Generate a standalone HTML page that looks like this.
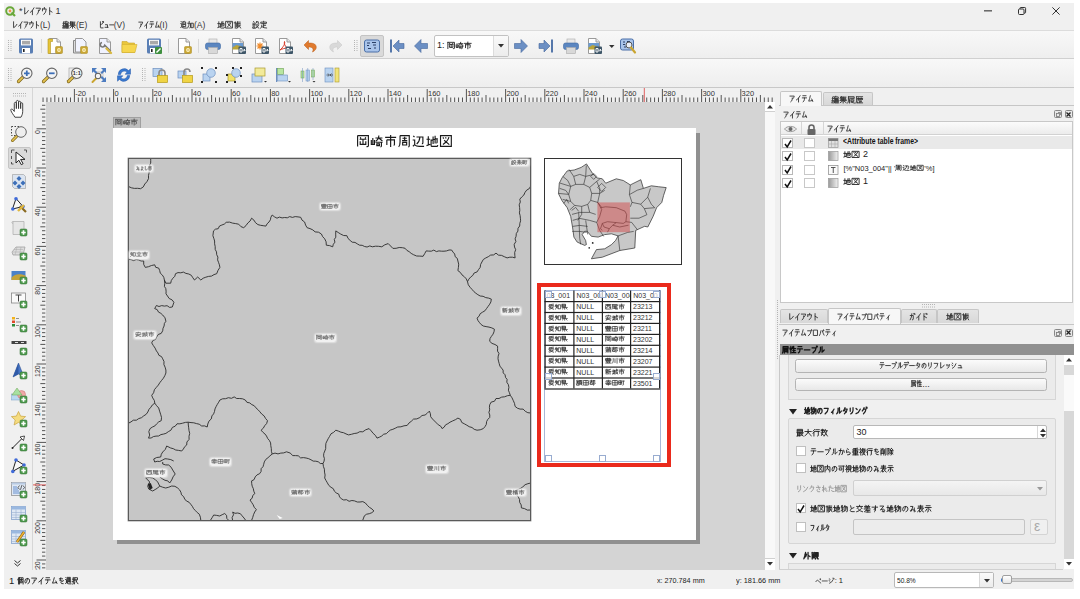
<!DOCTYPE html><html><head><meta charset="utf-8"><style>
*{box-sizing:border-box}
html,body{margin:0;padding:0}
body{width:1080px;height:599px;overflow:hidden;position:relative;background:#fff;font-family:"Liberation Sans",sans-serif;color:#222}
div{position:absolute}
.t{white-space:nowrap}
.j{letter-spacing:.25em;line-height:0;-webkit-text-stroke:.12px currentColor}
[style*=bold] .j{-webkit-text-stroke:.25px currentColor}
.sm .j{-webkit-text-stroke:0}
.t[style*=text-stroke] .j{-webkit-text-stroke:inherit}
.jw{display:inline-block;white-space:nowrap;line-height:0}
.jw .j{display:inline-block;letter-spacing:0;transform-origin:0 0}
svg{position:absolute;overflow:visible}
svg.g{position:static;display:inline-block}
svg.g path{vector-effect:non-scaling-stroke}
</style></head><body><div style="left:4px;top:3px;width:1070px;height:586px;background:#f0f0f0"></div>
<div style="left:4px;top:30px;width:1070px;height:1px;background:#dcdcdc"></div>
<div style="left:4px;top:31px;width:1070px;height:28px;background:linear-gradient(#f8f8f8,#eeeeee)"></div>
<div style="left:4px;top:58px;width:1070px;height:1px;background:#d0d0d0"></div>
<div style="left:4px;top:59px;width:1070px;height:28px;background:linear-gradient(#f8f8f8,#eeeeee)"></div>
<div style="left:4px;top:86.5px;width:1070px;height:1.5px;background:#c8c8c8"></div>
<div style="left:32px;top:88px;width:1px;height:482px;background:#d6d6d6"></div>
<svg style="left:5px;top:5.5px" width="11" height="11" viewBox="0 0 11 11"><circle cx="5" cy="5" r="3.8" fill="none" stroke="#6aa83a" stroke-width="2"/><path d="M6.5 6.5l3.5 3.5" stroke="#6aa83a" stroke-width="2.2"/><circle cx="5" cy="5" r="1.4" fill="#f0944a"/></svg>
<div class="t" style="left:19px;top:6.2px;font-size:9px;line-height:10.8px;color:#333;">*<svg class="g" width="30.50" height="7.87" viewBox="0 0 50 10" preserveAspectRatio="none" style="vertical-align:-0.45px;stroke-width:0.90px"><g fill="none" stroke="currentColor" stroke-linecap="round" stroke-linejoin="round"><g transform="translate(0.60 0) scale(.88 1)"><path d="M2.5 1V9Q6 8.5 9.3 4.5"/></g><g transform="translate(10.60 0) scale(.88 1)"><path d="M8.5 1Q6 5 1.5 7M5.5 4.5V9.8"/></g><g transform="translate(20.60 0) scale(.88 1)"><path d="M1 1.5H9Q8.5 4 6 5.5M5.3 4V6Q5 8.5 2.5 9.5"/></g><g transform="translate(30.60 0) scale(.88 1)"><path d="M5 0.5V2.5M1.5 2.5V5M1.5 2.5H8.5Q8.5 7 4 9.5"/></g><g transform="translate(40.60 0) scale(.88 1)"><path d="M3.5 0.8V9.8M3.5 4.5L8 6.5"/></g></g></svg> 1</div>
<div class="t" style="left:12px;top:19.9px;font-size:8.5px;line-height:10.2px;color:#333;"><svg class="g" width="28.00" height="7.43" viewBox="0 0 50 10" preserveAspectRatio="none" style="vertical-align:-0.43px;stroke-width:0.90px"><g fill="none" stroke="currentColor" stroke-linecap="round" stroke-linejoin="round"><g transform="translate(0.60 0) scale(.88 1)"><path d="M2.5 1V9Q6 8.5 9.3 4.5"/></g><g transform="translate(10.60 0) scale(.88 1)"><path d="M8.5 1Q6 5 1.5 7M5.5 4.5V9.8"/></g><g transform="translate(20.60 0) scale(.88 1)"><path d="M1 1.5H9Q8.5 4 6 5.5M5.3 4V6Q5 8.5 2.5 9.5"/></g><g transform="translate(30.60 0) scale(.88 1)"><path d="M5 0.5V2.5M1.5 2.5V5M1.5 2.5H8.5Q8.5 7 4 9.5"/></g><g transform="translate(40.60 0) scale(.88 1)"><path d="M3.5 0.8V9.8M3.5 4.5L8 6.5"/></g></g></svg>(L)</div>
<div class="t" style="left:62px;top:19.9px;font-size:8.5px;line-height:10.2px;color:#333;"><svg class="g" width="14.00" height="7.43" viewBox="0 0 20 10" preserveAspectRatio="none" style="vertical-align:-0.43px;stroke-width:0.90px"><g fill="none" stroke="currentColor" stroke-linecap="round" stroke-linejoin="round"><g transform="translate(0.60 0) scale(.88 1)"><path d="M2.5 0.5L0.8 3.5L3.5 3M2.5 3.5L0.5 6.5H4M2 6.5V9.8M0.8 8L0.5 9.5M3.5 7.5L4 9M6 0.3V1M4.5 1.3H9.5V3.5H4.5M4.5 1.3V6Q4.5 8.5 3.8 9.8M5.5 4.5H9.5V9.8M5.5 4.5V9.8M5.5 6.8H9.5M6.8 4.5V9.8M8.2 4.5V9.8"/></g><g transform="translate(10.60 0) scale(.88 1)"><path d="M2.5 0.5L0.8 3M2 1.5V5M2 1.5H9M5 1.5V5M2 2.7H8.5M2 3.8H8.5M2 5H9M0.5 6.3H9.5M5 5V9.8M4.5 6.5L0.8 9.3M5.5 6.5L9.2 9.3"/></g></g></svg>(E)</div>
<div class="t" style="left:98.5px;top:19.9px;font-size:8.5px;line-height:10.2px;color:#333;"><svg class="g" width="15.20" height="7.43" viewBox="0 0 30 10" preserveAspectRatio="none" style="vertical-align:-0.43px;stroke-width:0.90px"><g fill="none" stroke="currentColor" stroke-linecap="round" stroke-linejoin="round"><g transform="translate(0.60 0) scale(.88 1)"><path d="M2.5 1V8.5Q2.5 9.3 3.5 9.3H8.5M2.5 5Q5 4.5 7.5 3.5M7.5 0.5L8 2M9 0.5L9.5 2"/></g><g transform="translate(10.60 0) scale(.88 1)"><path d="M2.5 5H7V8.5M1.5 8.5H8.5"/></g><g transform="translate(20.60 0) scale(.88 1)"><path d="M0.5 5.2H9.5"/></g></g></svg>(V)</div>
<div class="t" style="left:137.5px;top:19.9px;font-size:8.5px;line-height:10.2px;color:#333;"><svg class="g" width="22.00" height="7.43" viewBox="0 0 40 10" preserveAspectRatio="none" style="vertical-align:-0.43px;stroke-width:0.90px"><g fill="none" stroke="currentColor" stroke-linecap="round" stroke-linejoin="round"><g transform="translate(0.60 0) scale(.88 1)"><path d="M1 1.5H9Q8.5 4 6 5.5M5.3 4V6Q5 8.5 2.5 9.5"/></g><g transform="translate(10.60 0) scale(.88 1)"><path d="M8.5 1Q6 5 1.5 7M5.5 4.5V9.8"/></g><g transform="translate(20.60 0) scale(.88 1)"><path d="M2 1H8M1 4H9M5 4V6Q5 8.5 2.5 9.5"/></g><g transform="translate(30.60 0) scale(.88 1)"><path d="M4.5 1Q3.5 5 1.5 8.5Q5 8.3 8.5 7.5M7 5.5L9 9"/></g></g></svg>(I)</div>
<div class="t" style="left:180px;top:19.9px;font-size:8.5px;line-height:10.2px;color:#333;"><svg class="g" width="14.00" height="7.43" viewBox="0 0 20 10" preserveAspectRatio="none" style="vertical-align:-0.43px;stroke-width:0.90px"><g fill="none" stroke="currentColor" stroke-linecap="round" stroke-linejoin="round"><g transform="translate(0.60 0) scale(.88 1)"><path d="M1 0.5L1.8 1.5M0.5 3.5H2V7.5L0.5 9M2 8Q3.5 9.5 6 9.5H9.8M6 0.3L5.5 1M4 1.3H8.5V4.3H4M4 1.3V8M4 4.3H8.5V7.5H4"/></g><g transform="translate(10.60 0) scale(.88 1)"><path d="M0.5 3H5V8Q5 9.5 4 9.5M3 0.5Q3 7 0.5 9.5M6.5 3H9.5V9H6.5Z"/></g></g></svg>(A)</div>
<div class="t" style="left:216.5px;top:19.9px;font-size:8.5px;line-height:10.2px;color:#333;"><svg class="g" width="24.50" height="7.43" viewBox="0 0 30 10" preserveAspectRatio="none" style="vertical-align:-0.43px;stroke-width:0.90px"><g fill="none" stroke="currentColor" stroke-linecap="round" stroke-linejoin="round"><g transform="translate(0.60 0) scale(.88 1)"><path transform="scale(.8333)" d="M0.4 4.2H4M2.2 1.2V10M0.4 10.6L4.2 9.2M4.6 5.2L11 3.8V7.2Q11 8 10.2 7.8M7 1.4V9M9 0.8V8.4M5 4.6V10.4Q5 11.4 6 11.4H11Q11.6 11.4 11.6 10"/></g><g transform="translate(10.60 0) scale(.88 1)"><path transform="scale(.8333)" d="M0.6 0.6H11.4V11.4H0.6ZM3 2.4L3.8 3.6M5.6 2.2L6.2 3.4M9 2.2Q8 6.4 3 9.4M4.2 5.2L9.4 9.6"/></g><g transform="translate(20.60 0) scale(.88 1)"><path d="M2 1V9.8M0.5 2.5H3.5V8M5 1V9Q5 9.8 4 9.8M5 1.5H9M5 3.5H9M5 5.5H9.5M7 5.5L9.5 9.5M7 7L5 9.5"/></g></g></svg></div>
<div class="t" style="left:251.5px;top:19.9px;font-size:8.5px;line-height:10.2px;color:#333;"><svg class="g" width="15.50" height="7.43" viewBox="0 0 20 10" preserveAspectRatio="none" style="vertical-align:-0.43px;stroke-width:0.90px"><g fill="none" stroke="currentColor" stroke-linecap="round" stroke-linejoin="round"><g transform="translate(0.60 0) scale(.88 1)"><path d="M1.5 0.5L2.5 1.5M0.5 3H3.5M0.5 4.8H3.5M0.5 6.5H3.5M1 8H3.5V9.8H1ZM6 1Q6 3.5 4.5 4M6 1H8.5V3.5Q8.5 4.2 9.5 4M5 5.2H9Q8 8.5 4.5 9.8M5.5 6.5L9.5 9.8"/></g><g transform="translate(10.60 0) scale(.88 1)"><path d="M5 0.3V1.5M0.8 3V1.5H9.2V3M2 3.5H8M5 3.5V8.5M5 5.8H8M2.5 5.5Q2.5 8.5 0.8 9.8M3 8Q5 9.5 9.5 9.5"/></g></g></svg></div>
<svg style="left:984px;top:10px;" width="8" height="2" viewBox="0 0 8 2"><rect x="0" y=".3" width="8" height="1.1" fill="#333"/></svg>
<svg style="left:1017.8px;top:7px;" width="8" height="8" viewBox="0 0 8 8"><rect x=".5" y="2" width="5.5" height="5.5" rx="1" fill="none" stroke="#333" stroke-width="1"/><path d="M2 2V1.3a.8 .8 0 0 1 .8-.8h4a.8 .8 0 0 1 .8.8v4a.8 .8 0 0 1-.8.8H6" fill="none" stroke="#333" stroke-width="1"/></svg>
<svg style="left:1052.3px;top:7.3px;" width="8" height="8" viewBox="0 0 8 8"><path d="M.4 .4l7.2 7.2M7.6 .4l-7.2 7.2" stroke="#333" stroke-width="1"/></svg>
<svg style="left:7.5px;top:40px" width="5" height="12"><rect x="0" y="0" width="1" height="1" fill="#b4b4b4"/><rect x="2.5" y="0" width="1" height="1" fill="#b4b4b4"/><rect x="0" y="2" width="1" height="1" fill="#b4b4b4"/><rect x="2.5" y="2" width="1" height="1" fill="#b4b4b4"/><rect x="0" y="4" width="1" height="1" fill="#b4b4b4"/><rect x="2.5" y="4" width="1" height="1" fill="#b4b4b4"/><rect x="0" y="6" width="1" height="1" fill="#b4b4b4"/><rect x="2.5" y="6" width="1" height="1" fill="#b4b4b4"/><rect x="0" y="8" width="1" height="1" fill="#b4b4b4"/><rect x="2.5" y="8" width="1" height="1" fill="#b4b4b4"/><rect x="0" y="10" width="1" height="1" fill="#b4b4b4"/><rect x="2.5" y="10" width="1" height="1" fill="#b4b4b4"/></svg>
<svg style="left:18px;top:38px" width="16" height="16" viewBox="0 0 16 16"><rect x="1" y=".5" width="14" height="15" rx="1.5" fill="#5a7fb5"/><rect x="3" y="1.8" width="10" height="5.6" fill="#fff"/><rect x="4" y="2.8" width="8" height="3.6" fill="#a9a9a9"/><rect x="4" y="10" width="8" height="5.2" fill="#fff"/><rect x="5" y="11" width="1.6" height="3" fill="#222"/></svg>
<svg style="left:47px;top:38px" width="16" height="16" viewBox="0 0 16 16"><path d="M2.5 .5h7.5l3.5 3.5v11.5h-11z" fill="#fff" stroke="#9a9a9a"/><path d="M10 .5v3.5h3.5" fill="#e6e6e6" stroke="#9a9a9a"/><path d="M1 1h4.5v2.5h-2v12h-2.5z" fill="#e6c53a" stroke="#b49520" stroke-width=".6"/><rect x="8.5" y="8.5" width="7" height="7" rx="1" fill="#c9a633" stroke="#a88a20" stroke-width=".5"/><circle cx="12" cy="12" r="1.9" fill="#fff4c8"/><circle cx="12" cy="12" r=".8" fill="#c9a633"/></svg>
<svg style="left:71.5px;top:38px" width="16" height="16" viewBox="0 0 16 16"><path d="M1.5 2.5h8v12.5h-8z" fill="#ddd" stroke="#888"/><path d="M3.5 .5h7l3.5 3.5v10h-10.5z" fill="#f2f4ff" stroke="#999"/><rect x="8.5" y="8.5" width="7" height="7" rx="1" fill="#c9a633" stroke="#a88a20" stroke-width=".5"/><circle cx="12" cy="12" r="1.9" fill="#fff4c8"/><circle cx="12" cy="12" r=".8" fill="#c9a633"/></svg>
<svg style="left:96.5px;top:38px" width="16" height="16" viewBox="0 0 16 16"><path d="M2.5 .5h7.5l3.5 3.5v11.5h-11z" fill="#f0f2ff" stroke="#9a9a9a"/><path d="M10 .5v3.5h3.5" fill="#e6e6e6" stroke="#9a9a9a"/><path d="M5 4.5a2.3 2.3 0 1 0 2.8 2.8l6 6" fill="none" stroke="#777" stroke-width="1.6"/><path d="M9.5 10.5l4.5 4.5" stroke="#d8b840" stroke-width="2.4" stroke-linecap="round"/></svg>
<svg style="left:121px;top:38px" width="16" height="16" viewBox="0 0 16 16"><path d="M1 3.5h5l1.5 1.5h6v9.5h-12.5z" fill="#e9c63c" stroke="#c9a52a" stroke-width=".6"/><path d="M1 6.5h15l-2 8h-13z" fill="#f6d64e" stroke="#d2ae30" stroke-width=".6"/></svg>
<svg style="left:146px;top:38px" width="16" height="16" viewBox="0 0 16 16"><rect x="1" y=".5" width="14" height="15" rx="1.5" fill="#5a7fb5"/><rect x="3" y="1.8" width="10" height="5.6" fill="#fff"/><rect x="4" y="2.8" width="8" height="3.6" fill="#a9a9a9"/><rect x="4" y="10" width="8" height="5.2" fill="#fff"/><rect x="5" y="11" width="1.6" height="3" fill="#222"/><rect x="9" y="9" width="7" height="7" rx="1" fill="#3f8f3f"/><path d="M10.5 14.5l4-4" stroke="#fff" stroke-width="1.5"/></svg>
<svg style="left:176px;top:38px" width="16" height="16" viewBox="0 0 16 16"><path d="M2.5 .5h7.5l3.5 3.5v11.5h-11z" fill="#fff" stroke="#9a9a9a"/><path d="M10 .5v3.5h3.5" fill="#e6e6e6" stroke="#9a9a9a"/><rect x="8.5" y="8.5" width="7" height="7" rx="1" fill="#c9a633" stroke="#a88a20" stroke-width=".5"/><circle cx="12" cy="12" r="1.9" fill="#fff4c8"/><circle cx="12" cy="12" r=".8" fill="#c9a633"/></svg>
<svg style="left:205px;top:38px" width="16" height="16" viewBox="0 0 16 16"><rect x="4" y="1" width="8" height="5" fill="#e8e8e8" stroke="#aaa" stroke-width=".6"/><rect x=".5" y="5" width="15" height="6.5" rx="2" fill="#5b86c0" stroke="#3f6aa3" stroke-width=".6"/><rect x="3.5" y="9.5" width="9" height="6" fill="#d8d8d8" stroke="#aaa" stroke-width=".6"/></svg>
<svg style="left:229.5px;top:38px" width="16" height="16" viewBox="0 0 16 16"><path d="M2.5 .5h7.5l3.5 3.5v11.5h-11z" fill="#fff" stroke="#9a9a9a"/><path d="M10 .5v3.5h3.5" fill="#e6e6e6" stroke="#9a9a9a"/><rect x="2.5" y="5" width="10.5" height="6" fill="#6a9ad0"/><path d="M2.5 9.5l4-2.5 5 1.5 1.5 3H2.5z" fill="#b9a43a"/><rect x="8.5" y="8.5" width="7.5" height="7.5" rx="1" fill="#3e5668"/><path d="M10 10.5h2v3.5h-2z" fill="none" stroke="#fff" stroke-width=".9"/><path d="M12.5 12.2h2.5M14 11l1.2 1.2L14 13.4" fill="none" stroke="#fff" stroke-width=".9"/></svg>
<svg style="left:252.5px;top:38px" width="16" height="16" viewBox="0 0 16 16"><path d="M2.5 .5h7.5l3.5 3.5v11.5h-11z" fill="#fff" stroke="#9a9a9a"/><path d="M10 .5v3.5h3.5" fill="#e6e6e6" stroke="#9a9a9a"/><path d="M7 4.5v7M3.5 8h7M4.5 5.5l5 5M9.5 5.5l-5 5" stroke="#f08a28" stroke-width="1.2"/><rect x="8.5" y="8.5" width="7.5" height="7.5" rx="1" fill="#3e5668"/><path d="M10 10.5h2v3.5h-2z" fill="none" stroke="#fff" stroke-width=".9"/><path d="M12.5 12.2h2.5M14 11l1.2 1.2L14 13.4" fill="none" stroke="#fff" stroke-width=".9"/></svg>
<svg style="left:277px;top:38px" width="16" height="16" viewBox="0 0 16 16"><path d="M2.5 .5h7.5l3.5 3.5v11.5h-11z" fill="#fff" stroke="#9a9a9a"/><path d="M10 .5v3.5h3.5" fill="#e6e6e6" stroke="#9a9a9a"/><path d="M7.5 3.5c-1 2 1 5 2.5 6.5M7.5 3.5c1 2-1.5 6-4.5 8.5M3 12c2-1 5-2 7-2" fill="none" stroke="#d83a2a" stroke-width="1"/><rect x="8.5" y="8.5" width="7.5" height="7.5" rx="1" fill="#3e5668"/><path d="M10 10.5h2v3.5h-2z" fill="none" stroke="#fff" stroke-width=".9"/><path d="M12.5 12.2h2.5M14 11l1.2 1.2L14 13.4" fill="none" stroke="#fff" stroke-width=".9"/></svg>
<svg style="left:303px;top:38px" width="16" height="16" viewBox="0 0 16 16"><path d="M5.5 2.5L1 7l4.5 4.5V9c4 0 5.5 1.5 4 5 4-2 4.5-5 3-7-1-1.5-3-2-7-2z" fill="#e07a2e" stroke="#b85c18" stroke-width=".5"/></svg>
<svg style="left:327px;top:38px" width="16" height="16" viewBox="0 0 16 16"><path d="M10.5 2.5L15 7l-4.5 4.5V9c-4 0-5.5 1.5-4 5-4-2-4.5-5-3-7 1-1.5 3-2 7-2z" fill="#d9d9d9" stroke="#c6c6c6" stroke-width=".5"/></svg>
<div style="left:40.5px;top:39px;width:1px;height:14px;background:#d8d8d8"></div>
<div style="left:168px;top:39px;width:1px;height:14px;background:#d8d8d8"></div>
<div style="left:198px;top:39px;width:1px;height:14px;background:#d8d8d8"></div>
<svg style="left:354px;top:40px" width="5" height="12"><rect x="0" y="0" width="1" height="1" fill="#b4b4b4"/><rect x="2.5" y="0" width="1" height="1" fill="#b4b4b4"/><rect x="0" y="2" width="1" height="1" fill="#b4b4b4"/><rect x="2.5" y="2" width="1" height="1" fill="#b4b4b4"/><rect x="0" y="4" width="1" height="1" fill="#b4b4b4"/><rect x="2.5" y="4" width="1" height="1" fill="#b4b4b4"/><rect x="0" y="6" width="1" height="1" fill="#b4b4b4"/><rect x="2.5" y="6" width="1" height="1" fill="#b4b4b4"/><rect x="0" y="8" width="1" height="1" fill="#b4b4b4"/><rect x="2.5" y="8" width="1" height="1" fill="#b4b4b4"/><rect x="0" y="10" width="1" height="1" fill="#b4b4b4"/><rect x="2.5" y="10" width="1" height="1" fill="#b4b4b4"/></svg>
<div style="left:360px;top:34.5px;width:24px;height:22.5px;background:#dadada;border:1px solid #c4c4c4;border-radius:2px"></div>
<svg style="left:364px;top:38px" width="16" height="16" viewBox="0 0 16 16"><rect x=".5" y="2" width="15" height="12" rx="2" fill="#a9c4ea" stroke="#4a6fa8" stroke-width="1"/><path d="M3 5h3M3 7.5h2M8 4.5h4M9 7h3M4 10.5h3M10 10h2" stroke="#2a3f66" stroke-width="1.2"/></svg>
<svg style="left:389px;top:38px" width="16" height="16" viewBox="0 0 16 16"><rect x="1" y="1.5" width="2" height="13" fill="#5577aa"/><path d="M4 8l6-6v3.5h5v5h-5V14z" fill="#6b8fc4" stroke="#45679c" stroke-width=".6"/></svg>
<svg style="left:413px;top:38px" width="16" height="16" viewBox="0 0 16 16"><path d="M1.5 8l6.5-6.5v4h6.5v5h-6.5v4z" fill="#6b8fc4" stroke="#45679c" stroke-width=".6"/></svg>
<div style="left:433.5px;top:34.5px;width:75px;height:22px;background:#fff;border:1px solid #c2c2c2;border-radius:2px"></div>
<div style="left:493px;top:35.5px;width:1px;height:20px;background:#dcdcdc"></div>
<div style="left:494px;top:35.5px;width:13.5px;height:20px;background:linear-gradient(#fafafa,#ececec)"></div>
<svg style="left:497.5px;top:44px;" width="6" height="4" viewBox="0 0 6 4"><path d="M0 0h6L3 3.5z" fill="#333"/></svg>
<div class="t" style="left:437px;top:40.1px;font-size:9px;line-height:10.8px;color:#222;">1: <svg class="g" width="25.00" height="6.84" viewBox="0 0 30 10" preserveAspectRatio="none" style="vertical-align:-0.45px;stroke-width:0.90px"><g fill="none" stroke="currentColor" stroke-linecap="round" stroke-linejoin="round"><g transform="translate(0.60 0) scale(.88 1)"><path transform="scale(.8333)" d="M0.6 0.6V11.6M0.6 0.6H11.4V10.8Q11.4 11.6 10.4 11.6H9.5M3.2 2.2L4 3.6M8.8 2.2L8 3.6M2.6 4.2H9.4M6 4.2V9.4M3.2 6.2V9.4H8.8V6.2"/></g><g transform="translate(10.60 0) scale(.88 1)"><path transform="scale(.8333)" d="M2 3V9.5M0.5 5V9.5H3.6V5M4.6 3H11.6M8 0.5C8 3 7 5 4.8 6.2M8.3 3.2L11.6 6M4.6 7.2H11.8M10.6 7.2V11Q10.6 11.8 9.6 11.8M6 8.8H8.6V10.6H6Z"/></g><g transform="translate(20.60 0) scale(.88 1)"><path transform="scale(.8333)" d="M6 0V2M0.5 2.4H11.5M2.2 4.8V10M2.2 4.8H9.8V9.6Q9.8 10.2 9 10.2M6 2.4V12"/></g></g></svg></div>
<svg style="left:513px;top:38px" width="16" height="16" viewBox="0 0 16 16"><path d="M14.5 8L8 1.5v4H1.5v5H8v4z" fill="#6b8fc4" stroke="#45679c" stroke-width=".6"/></svg>
<svg style="left:538px;top:38px" width="16" height="16" viewBox="0 0 16 16"><rect x="13" y="1.5" width="2" height="13" fill="#5577aa"/><path d="M12 8L6 2v3.5H1v5h5V14z" fill="#6b8fc4" stroke="#45679c" stroke-width=".6"/></svg>
<svg style="left:562.5px;top:38px" width="16" height="16" viewBox="0 0 16 16"><rect x="4" y="1" width="8" height="5" fill="#e8e8e8" stroke="#aaa" stroke-width=".6"/><rect x=".5" y="5" width="15" height="6.5" rx="2" fill="#5b86c0" stroke="#3f6aa3" stroke-width=".6"/><rect x="3.5" y="9.5" width="9" height="6" fill="#d8d8d8" stroke="#aaa" stroke-width=".6"/></svg>
<svg style="left:585.5px;top:38px" width="16" height="16" viewBox="0 0 16 16"><path d="M2.5 .5h7.5l3.5 3.5v11.5h-11z" fill="#fff" stroke="#9a9a9a"/><path d="M10 .5v3.5h3.5" fill="#e6e6e6" stroke="#9a9a9a"/><rect x="2.5" y="5" width="10.5" height="6" fill="#6a9ad0"/><path d="M2.5 9.5l4-2.5 5 1.5 1.5 3H2.5z" fill="#b9a43a"/><rect x="8.5" y="8.5" width="7.5" height="7.5" rx="1" fill="#3e5668"/><path d="M10 10.5h2v3.5h-2z" fill="none" stroke="#fff" stroke-width=".9"/><path d="M12.5 12.2h2.5M14 11l1.2 1.2L14 13.4" fill="none" stroke="#fff" stroke-width=".9"/></svg>
<svg style="left:609px;top:45px;" width="6" height="4" viewBox="0 0 6 4"><path d="M0 0h5.5L2.75 3z" fill="#333"/></svg>
<svg style="left:620px;top:38px" width="16" height="16" viewBox="0 0 16 16"><rect x=".5" y="1" width="13" height="11" rx="2" fill="#a9c4ea" stroke="#4a6fa8" stroke-width="1"/><path d="M3 4h2M3 6.5h2M7 3.5h3M4 9h2" stroke="#2a3f66" stroke-width="1.1"/><circle cx="9" cy="7" r="3" fill="#e8eef8" stroke="#555" stroke-width="1"/><path d="M11 9.5l4 5" stroke="#caa530" stroke-width="2.2" stroke-linecap="round"/></svg>
<svg style="left:7.5px;top:68px" width="5" height="13"><rect x="0" y="0" width="1" height="1" fill="#b4b4b4"/><rect x="2.5" y="0" width="1" height="1" fill="#b4b4b4"/><rect x="0" y="2" width="1" height="1" fill="#b4b4b4"/><rect x="2.5" y="2" width="1" height="1" fill="#b4b4b4"/><rect x="0" y="4" width="1" height="1" fill="#b4b4b4"/><rect x="2.5" y="4" width="1" height="1" fill="#b4b4b4"/><rect x="0" y="6" width="1" height="1" fill="#b4b4b4"/><rect x="2.5" y="6" width="1" height="1" fill="#b4b4b4"/><rect x="0" y="8" width="1" height="1" fill="#b4b4b4"/><rect x="2.5" y="8" width="1" height="1" fill="#b4b4b4"/><rect x="0" y="10" width="1" height="1" fill="#b4b4b4"/><rect x="2.5" y="10" width="1" height="1" fill="#b4b4b4"/><rect x="0" y="12" width="1" height="1" fill="#b4b4b4"/><rect x="2.5" y="12" width="1" height="1" fill="#b4b4b4"/></svg>
<svg style="left:17px;top:67px" width="16" height="16" viewBox="0 0 16 16"><path d="M1.5 14.5l4.2-4.2" stroke="#7a6010" stroke-width="3.2" stroke-linecap="round"/><path d="M1.5 14.5l4.2-4.2" stroke="#e3c252" stroke-width="1.8" stroke-linecap="round"/><circle cx="9.8" cy="6.3" r="5.2" fill="#f4f4f4" stroke="#666" stroke-width="1.1"/><path d="M9.8 3.5v5.6M7 6.3h5.6" stroke="#3d6fb8" stroke-width="1.8"/></svg>
<svg style="left:41.5px;top:67px" width="16" height="16" viewBox="0 0 16 16"><path d="M1.5 14.5l4.2-4.2" stroke="#7a6010" stroke-width="3.2" stroke-linecap="round"/><path d="M1.5 14.5l4.2-4.2" stroke="#e3c252" stroke-width="1.8" stroke-linecap="round"/><circle cx="9.8" cy="6.3" r="5.2" fill="#f4f4f4" stroke="#666" stroke-width="1.1"/><path d="M7 6.3h5.6" stroke="#3d6fb8" stroke-width="1.8"/></svg>
<svg style="left:66.5px;top:67px" width="16" height="16" viewBox="0 0 16 16"><rect x="2" y="1" width="7" height="11" fill="#eee" stroke="#999" stroke-width=".6"/><path d="M1.5 14.5l4.2-4.2" stroke="#7a6010" stroke-width="3.2" stroke-linecap="round"/><path d="M1.5 14.5l4.2-4.2" stroke="#e3c252" stroke-width="1.8" stroke-linecap="round"/><circle cx="9.8" cy="6.3" r="5.2" fill="#f4f4f4" stroke="#666" stroke-width="1.1"/><text x="9.8" y="8.3" font-size="5.5" font-family="Liberation Sans" font-weight="bold" text-anchor="middle" fill="#333">1:1</text></svg>
<svg style="left:91px;top:67px" width="16" height="16" viewBox="0 0 16 16"><rect x="4" y="4" width="9" height="8" fill="#ddd"/><path d="M1 1h5l-2 2 2.5 2.5-1.5 1.5L2.5 4.5l-1.5 1.5zM15 1h-5l2 2-2.5 2.5 1.5 1.5 2.5-2.5 1.5 1.5zM15 15h-5l2-2-2.5-2.5 1.5-1.5 2.5 2.5 1.5-1.5z" fill="#4d7cc0"/><path d="M1.5 15l3.5-3.5" stroke="#caa530" stroke-width="2" stroke-linecap="round"/><circle cx="7" cy="9" r="2.8" fill="#f4f4f4" stroke="#555"/></svg>
<svg style="left:115.5px;top:67px" width="16" height="16" viewBox="0 0 16 16"><path d="M2.2 7.5A6 6 0 0 1 12.6 3.6L14.5 1.8V7.2H9.1l1.9-1.9A3.7 3.7 0 0 0 4.6 7.5z" fill="#3b7ad0" stroke="#2559a8" stroke-width=".5"/><path d="M13.8 8.5A6 6 0 0 1 3.4 12.4L1.5 14.2V8.8h5.4l-1.9 1.9a3.7 3.7 0 0 0 6.4-2.2z" fill="#3b7ad0" stroke="#2559a8" stroke-width=".5"/></svg>
<svg style="left:152px;top:67px" width="16" height="16" viewBox="0 0 16 16"><rect x="1" y="1.5" width="9" height="8" fill="#b9d3f0" stroke="#6d8fbf" stroke-width=".7"/><path d="M7 9V6a3 3 0 0 1 6 0v3" fill="none" stroke="#888" stroke-width="1.6"/><rect x="5.5" y="8.5" width="10" height="7" fill="#f0d444" stroke="#b59a18" stroke-width=".7"/></svg>
<svg style="left:176.5px;top:67px" width="16" height="16" viewBox="0 0 16 16"><rect x="1" y="4" width="8" height="7" fill="#b9d3f0" stroke="#6d8fbf" stroke-width=".7"/><path d="M7 8V5a3 3 0 0 1 6 0" fill="none" stroke="#888" stroke-width="1.6"/><rect x="5.5" y="8.5" width="10" height="7" fill="#f0d444" stroke="#b59a18" stroke-width=".7"/></svg>
<svg style="left:201px;top:67px" width="16" height="16" viewBox="0 0 16 16"><rect x="2" y="7" width="7" height="7" fill="#b9d3f0" stroke="#6d8fbf" stroke-width=".7"/><circle cx="10" cy="6" r="4.3" fill="#b9d3f0" stroke="#6d8fbf" stroke-width=".7"/><path d="M0 0h2v2H0zM14 0h2v2h-2zM0 14h2v2H0zM14 14h2v2h-2z" fill="#222"/></svg>
<svg style="left:226px;top:67px" width="16" height="16" viewBox="0 0 16 16"><rect x="2" y="7" width="7" height="7" fill="#f0e06a" stroke="#a99a30" stroke-width=".7"/><circle cx="10" cy="6" r="4.3" fill="#b9d3f0" stroke="#6d8fbf" stroke-width=".7"/><path d="M0 7h2v2H0zM14 0h2v2h-2zM0 14h2v2H0zM8 14h2v2H8zM6 0h2v2H6zM14 8h2v2h-2z" fill="#222"/></svg>
<svg style="left:251px;top:67px" width="16" height="16" viewBox="0 0 16 16"><rect x="1" y="7" width="10" height="8" fill="#b9d3f0" stroke="#6d8fbf" stroke-width=".7"/><rect x="4" y="1" width="10" height="8" fill="#f2ea9a" stroke="#a99a30" stroke-width=".7"/><path d="M13 14h3l-1.5 1.5z" fill="#333"/></svg>
<svg style="left:275px;top:67px" width="16" height="16" viewBox="0 0 16 16"><rect x="1" y="1" width="1.2" height="14" fill="#6d8fbf"/><rect x="2.5" y="1.5" width="6" height="6" fill="#b8e6a0" stroke="#6aa050" stroke-width=".6"/><rect x="2.5" y="8" width="10" height="6" fill="#b9d3f0" stroke="#6d8fbf" stroke-width=".6"/><path d="M13 14h3l-1.5 1.5z" fill="#333"/></svg>
<svg style="left:299.5px;top:67px" width="16" height="16" viewBox="0 0 16 16"><rect x="1" y="4" width="3" height="7" fill="#b8e6a0" stroke="#6aa050" stroke-width=".5"/><rect x="6" y="3" width="3.5" height="11" fill="#b9d3f0" stroke="#6d8fbf" stroke-width=".5"/><rect x="11.5" y="3" width="3" height="7" fill="#b8e6a0" stroke="#6aa050" stroke-width=".5"/><path d="M2.5 1v14M7.7 1v14M13 1v12" stroke="#6d8fbf" stroke-width=".5"/><path d="M12.5 14h3L14 15.5z" fill="#333"/></svg>
<svg style="left:324px;top:67px" width="16" height="16" viewBox="0 0 16 16"><rect x="1" y="1" width="8" height="14" fill="#b9d3f0" stroke="#6d8fbf" stroke-width=".6"/><rect x="11" y="1" width="4" height="14" fill="#f2e47a" stroke="#a99a30" stroke-width=".6"/><path d="M2.5 8h2.5M6.5 8h2.5M4 6.5L5.5 8 4 9.5M7.5 6.5L6 8l1.5 1.5" fill="none" stroke="#333" stroke-width=".7"/></svg>
<svg style="left:142px;top:68px" width="5" height="13"><rect x="0" y="0" width="1" height="1" fill="#b4b4b4"/><rect x="2.5" y="0" width="1" height="1" fill="#b4b4b4"/><rect x="0" y="2" width="1" height="1" fill="#b4b4b4"/><rect x="2.5" y="2" width="1" height="1" fill="#b4b4b4"/><rect x="0" y="4" width="1" height="1" fill="#b4b4b4"/><rect x="2.5" y="4" width="1" height="1" fill="#b4b4b4"/><rect x="0" y="6" width="1" height="1" fill="#b4b4b4"/><rect x="2.5" y="6" width="1" height="1" fill="#b4b4b4"/><rect x="0" y="8" width="1" height="1" fill="#b4b4b4"/><rect x="2.5" y="8" width="1" height="1" fill="#b4b4b4"/><rect x="0" y="10" width="1" height="1" fill="#b4b4b4"/><rect x="2.5" y="10" width="1" height="1" fill="#b4b4b4"/><rect x="0" y="12" width="1" height="1" fill="#b4b4b4"/><rect x="2.5" y="12" width="1" height="1" fill="#b4b4b4"/></svg>
<svg style="left:13px;top:92.5px" width="14" height="4"><rect x="0" y="0" width="1" height="1" fill="#b4b4b4"/><rect x="0" y="2.5" width="1" height="1" fill="#b4b4b4"/><rect x="2" y="0" width="1" height="1" fill="#b4b4b4"/><rect x="2" y="2.5" width="1" height="1" fill="#b4b4b4"/><rect x="4" y="0" width="1" height="1" fill="#b4b4b4"/><rect x="4" y="2.5" width="1" height="1" fill="#b4b4b4"/><rect x="6" y="0" width="1" height="1" fill="#b4b4b4"/><rect x="6" y="2.5" width="1" height="1" fill="#b4b4b4"/><rect x="8" y="0" width="1" height="1" fill="#b4b4b4"/><rect x="8" y="2.5" width="1" height="1" fill="#b4b4b4"/><rect x="10" y="0" width="1" height="1" fill="#b4b4b4"/><rect x="10" y="2.5" width="1" height="1" fill="#b4b4b4"/><rect x="12" y="0" width="1" height="1" fill="#b4b4b4"/><rect x="12" y="2.5" width="1" height="1" fill="#b4b4b4"/></svg>
<div style="left:7.5px;top:147px;width:23px;height:22px;background:#dadada;border:1px solid #c4c4c4;border-radius:2px"></div>
<svg style="left:11px;top:101.3px" width="16" height="16" viewBox="0 0 16 16"><g transform="translate(-1.3 -1.6) scale(1.15)"><path d="M4.5 15.5c-1-2-3-4-3.5-6-.3-1 .8-1.5 1.5-.8L4 10.5V3.5c0-1.2 1.8-1.2 1.8 0V8V1.8c0-1.2 1.9-1.2 1.9 0V8V2.5c0-1.2 1.8-1.2 1.8 0V8V3.8c0-1.2 1.8-1.2 1.8 0v6.7c0 2-.7 3.5-1.5 5z" fill="#fff" stroke="#333" stroke-width=".8"/></g></svg>
<svg style="left:11px;top:125.1px" width="16" height="16" viewBox="0 0 16 16"><rect x=".5" y="1.5" width="8" height="9" fill="none" stroke="#444" stroke-width="1" stroke-dasharray="1.5 1.5"/><path d="M1.5 15.5l4-4" stroke="#7a6010" stroke-width="3" stroke-linecap="round"/><path d="M1.5 15.5l4-4" stroke="#e3c252" stroke-width="1.7" stroke-linecap="round"/><circle cx="10" cy="7" r="5.3" fill="#eee" stroke="#666" stroke-width="1"/></svg>
<svg style="left:11px;top:148.9px" width="16" height="16" viewBox="0 0 16 16"><path d="M.5 1h3M.5 1v3M.5 7v3M.5 13v2h2M13 1h2.5v2.5" fill="none" stroke="#555" stroke-width="1"/><path d="M5 3v11l2.8-2.8 2.5 4.5 1.8-1-2.5-4.3H14z" fill="#fff" stroke="#222" stroke-width="1"/></svg>
<svg style="left:11px;top:172.7px" width="16" height="16" viewBox="0 0 16 16"><path d="M1.5 1.5h11l2 2v12h-11l-2-2z" fill="#dbe4f0" stroke="#999" stroke-width=".6"/><path d="M8 3l2.5 2.5L8 8 5.5 5.5zM4 7.5l2.5 2.5L4 12.5 1.5 10zM12 7.5l2.5 2.5-2.5 2.5L9.5 10zM8 11l2.5 2.5L8 16l-2.5-2.5z" fill="#3d6fb8"/></svg>
<svg style="left:11px;top:196.5px" width="16" height="16" viewBox="0 0 16 16"><path d="M5 1.5L1.5 12 12 9.5z" fill="#fff" fill-opacity=".5" stroke="#222" stroke-width="1"/><circle cx="5" cy="1.8" r="1.8" fill="#3f6ad8"/><circle cx="1.8" cy="12" r="1.8" fill="#3f6ad8"/><circle cx="12" cy="9.5" r="1.8" fill="#3f6ad8"/><path d="M9 9l6 6" stroke="#8a6a20" stroke-width="2.2"/><path d="M7 14l6-6" stroke="#e0b840" stroke-width="2.4"/></svg>
<svg style="left:11px;top:220.3px" width="16" height="16" viewBox="0 0 16 16"><path d="M2 1.5h11v13H2z" fill="#e6e6e6" stroke="#aaa" stroke-width=".7"/><path d="M2 1.5c-1.5 0-1.5 2 0 2" fill="none" stroke="#aaa" stroke-width=".7"/><rect x="9" y="9" width="7" height="7" rx="1.2" fill="#4f9a4f" stroke="#2f6f2f" stroke-width=".5"/><path d="M12.5 10.3v4.4M10.3 12.5h4.4" stroke="#fff" stroke-width="1.6"/></svg>
<svg style="left:11px;top:244.1px" width="16" height="16" viewBox="0 0 16 16"><path d="M1 8l4-5h9l-2 8H2z" fill="#ddd" stroke="#999" stroke-width=".7"/><path d="M3 5.5h9M2 8h10M6 3l-2 8M10 3l-1.5 8" stroke="#aaa" stroke-width=".5"/><rect x="9" y="9" width="7" height="7" rx="1.2" fill="#4f9a4f" stroke="#2f6f2f" stroke-width=".5"/><path d="M12.5 10.3v4.4M10.3 12.5h4.4" stroke="#fff" stroke-width="1.6"/></svg>
<svg style="left:11px;top:267.9px" width="16" height="16" viewBox="0 0 16 16"><rect x=".5" y="3" width="14" height="9" fill="#4b82c8"/><path d="M.5 9.5c4-4 8-4 14-2V12H.5z" fill="#c5a33a"/><rect x="9" y="9" width="7" height="7" rx="1.2" fill="#4f9a4f" stroke="#2f6f2f" stroke-width=".5"/><path d="M12.5 10.3v4.4M10.3 12.5h4.4" stroke="#fff" stroke-width="1.6"/></svg>
<svg style="left:11px;top:291.7px" width="16" height="16" viewBox="0 0 16 16"><rect x=".5" y="1" width="14" height="10" fill="#fafafa" stroke="#888" stroke-width=".8"/><path d="M4.5 3h6M7.5 3v6.5" stroke="#444" stroke-width="1"/><rect x="9" y="9" width="7" height="7" rx="1.2" fill="#4f9a4f" stroke="#2f6f2f" stroke-width=".5"/><path d="M12.5 10.3v4.4M10.3 12.5h4.4" stroke="#fff" stroke-width="1.6"/></svg>
<svg style="left:11px;top:315.5px" width="16" height="16" viewBox="0 0 16 16"><rect x="1" y="1" width="3" height="2.5" fill="#f2b21c"/><rect x="1" y="4.5" width="3" height="2.5" fill="#e04a2a"/><rect x="1" y="8" width="3" height="2.5" fill="#2a8a3a"/><path d="M5 2.5h3M5 6h5M5 9.5h3" stroke="#777" stroke-width=".8"/><rect x="9" y="9" width="7" height="7" rx="1.2" fill="#4f9a4f" stroke="#2f6f2f" stroke-width=".5"/><path d="M12.5 10.3v4.4M10.3 12.5h4.4" stroke="#fff" stroke-width="1.6"/></svg>
<svg style="left:11px;top:339.3px" width="16" height="16" viewBox="0 0 16 16"><rect x=".5" y="2" width="15" height="3" fill="#444"/><path d="M4 3.5h3M10 3.5h3" stroke="#ddd" stroke-width="1"/><rect x="9" y="9" width="7" height="7" rx="1.2" fill="#4f9a4f" stroke="#2f6f2f" stroke-width=".5"/><path d="M12.5 10.3v4.4M10.3 12.5h4.4" stroke="#fff" stroke-width="1.6"/></svg>
<svg style="left:11px;top:363.1px" width="16" height="16" viewBox="0 0 16 16"><path d="M7.5 0L2 14l5.5-3 5.5 3z" fill="#4a78c8" stroke="#2a4a88" stroke-width=".5"/><path d="M7.5 0L7.5 11 2 14z" fill="#2f5aa8"/><rect x="9" y="9" width="7" height="7" rx="1.2" fill="#4f9a4f" stroke="#2f6f2f" stroke-width=".5"/><path d="M12.5 10.3v4.4M10.3 12.5h4.4" stroke="#fff" stroke-width="1.6"/></svg>
<svg style="left:11px;top:386.9px" width="16" height="16" viewBox="0 0 16 16"><rect x=".5" y="7" width="9" height="6" fill="#b9d8f0" stroke="#7aa0c8" stroke-width=".5"/><circle cx="10.5" cy="7.5" r="4" fill="#f0a8a8" stroke="#c87070" stroke-width=".5"/><path d="M6 1l5 7H1z" fill="#a8e0a0" stroke="#6aa050" stroke-width=".5"/><rect x="9" y="9" width="7" height="7" rx="1.2" fill="#4f9a4f" stroke="#2f6f2f" stroke-width=".5"/><path d="M12.5 10.3v4.4M10.3 12.5h4.4" stroke="#fff" stroke-width="1.6"/></svg>
<svg style="left:11px;top:410.7px" width="16" height="16" viewBox="0 0 16 16"><path d="M7.5 .5l2.1 4.6 5 .5-3.8 3.4 1.1 5-4.4-2.6-4.4 2.6 1.1-5L.4 5.6l5-.5z" fill="#f5dc80" stroke="#c8a440" stroke-width=".7"/><rect x="9" y="9" width="7" height="7" rx="1.2" fill="#4f9a4f" stroke="#2f6f2f" stroke-width=".5"/><path d="M12.5 10.3v4.4M10.3 12.5h4.4" stroke="#fff" stroke-width="1.6"/></svg>
<svg style="left:11px;top:434.5px" width="16" height="16" viewBox="0 0 16 16"><path d="M1.5 13L12 2.5" stroke="#222" stroke-width="1"/><path d="M13.5 1l-1 4.5-3.5-3.5z" fill="#fff" stroke="#222" stroke-width=".8"/><circle cx="1.5" cy="13" r="1" fill="#222"/><rect x="9" y="9" width="7" height="7" rx="1.2" fill="#4f9a4f" stroke="#2f6f2f" stroke-width=".5"/><path d="M12.5 10.3v4.4M10.3 12.5h4.4" stroke="#fff" stroke-width="1.6"/></svg>
<svg style="left:11px;top:458.3px" width="16" height="16" viewBox="0 0 16 16"><path d="M5 2L1.5 13.5 13 7z" fill="#fff" fill-opacity=".5" stroke="#222" stroke-width="1"/><circle cx="5" cy="2" r="1.8" fill="#3f6ad8"/><circle cx="1.8" cy="13.5" r="1.8" fill="#3f6ad8"/><circle cx="13" cy="7" r="1.8" fill="#3f6ad8"/><rect x="9" y="9" width="7" height="7" rx="1.2" fill="#4f9a4f" stroke="#2f6f2f" stroke-width=".5"/><path d="M12.5 10.3v4.4M10.3 12.5h4.4" stroke="#fff" stroke-width="1.6"/></svg>
<svg style="left:11px;top:482.1px" width="16" height="16" viewBox="0 0 16 16"><rect x=".5" y=".5" width="14" height="13" fill="#dfe8f4" stroke="#888" stroke-width=".7"/><rect x=".5" y=".5" width="14" height="2" fill="#b9cbe4"/><path d="M2 5h4M2 7h5M2 9h6M2 11h7" stroke="#5a86c8" stroke-width=".9"/><path d="M8.5 3.5L7 5.5l1.5 2M12 3.5l1.5 2-1.5 2M10.8 3.2l-1.3 4.6" fill="none" stroke="#222" stroke-width=".7"/><rect x="9" y="9" width="7" height="7" rx="1.2" fill="#4f9a4f" stroke="#2f6f2f" stroke-width=".5"/><path d="M12.5 10.3v4.4M10.3 12.5h4.4" stroke="#fff" stroke-width="1.6"/></svg>
<svg style="left:11px;top:505.9px" width="16" height="16" viewBox="0 0 16 16"><rect x=".5" y=".5" width="14" height="13" fill="#dfe8f4" stroke="#7a9ac8" stroke-width=".7"/><rect x=".5" y=".5" width="14" height="3" fill="#9ab8e0"/><path d="M.5 6.5h14M.5 9h14M.5 11.5h14M5 3.5v10M10 3.5v10" stroke="#9ab0d0" stroke-width=".6"/><rect x="9" y="9" width="7" height="7" rx="1.2" fill="#4f9a4f" stroke="#2f6f2f" stroke-width=".5"/><path d="M12.5 10.3v4.4M10.3 12.5h4.4" stroke="#fff" stroke-width="1.6"/></svg>
<svg style="left:11px;top:529.7px" width="16" height="16" viewBox="0 0 16 16"><rect x=".5" y=".5" width="14" height="13" fill="#dfe8f4" stroke="#7a9ac8" stroke-width=".7"/><rect x=".5" y=".5" width="14" height="3" fill="#9ab8e0"/><path d="M.5 6.5h14M.5 9h14M.5 11.5h14M5 3.5v10" stroke="#9ab0d0" stroke-width=".6"/><path d="M6 12l7-10" stroke="#7a5a10" stroke-width="2.6"/><path d="M6 12l7-10" stroke="#f0b030" stroke-width="1.6"/><rect x="9" y="9" width="7" height="7" rx="1.2" fill="#4f9a4f" stroke="#2f6f2f" stroke-width=".5"/><path d="M12.5 10.3v4.4M10.3 12.5h4.4" stroke="#fff" stroke-width="1.6"/></svg>
<svg style="left:14px;top:560px;" width="7" height="7" viewBox="0 0 7 7"><path d="M.5 .5l3 2.5 3-2.5M.5 3.5l3 2.5 3-2.5" fill="none" stroke="#333" stroke-width="1"/></svg>
<div style="left:33px;top:88px;width:742px;height:14px;background:#f0f0f0;overflow:hidden"><svg style="left:0;top:0" width="742" height="14"><rect x="9.54" y="9.5" width="1" height="4.5" fill="#555"/><rect x="13.46" y="9.5" width="1" height="4.5" fill="#555"/><rect x="17.38" y="9.5" width="1" height="4.5" fill="#555"/><rect x="21.30" y="7" width="1" height="7" fill="#555"/><rect x="25.22" y="9.5" width="1" height="4.5" fill="#555"/><rect x="29.14" y="9.5" width="1" height="4.5" fill="#555"/><rect x="33.06" y="9.5" width="1" height="4.5" fill="#555"/><rect x="36.98" y="9.5" width="1" height="4.5" fill="#555"/><rect x="40.90" y="1" width="1" height="13" fill="#555"/><rect x="44.82" y="9.5" width="1" height="4.5" fill="#555"/><rect x="48.74" y="9.5" width="1" height="4.5" fill="#555"/><rect x="52.66" y="9.5" width="1" height="4.5" fill="#555"/><rect x="56.58" y="9.5" width="1" height="4.5" fill="#555"/><rect x="60.50" y="7" width="1" height="7" fill="#555"/><rect x="64.42" y="9.5" width="1" height="4.5" fill="#555"/><rect x="68.34" y="9.5" width="1" height="4.5" fill="#555"/><rect x="72.26" y="9.5" width="1" height="4.5" fill="#555"/><rect x="76.18" y="9.5" width="1" height="4.5" fill="#555"/><rect x="80.10" y="1" width="1" height="13" fill="#555"/><rect x="84.02" y="9.5" width="1" height="4.5" fill="#555"/><rect x="87.94" y="9.5" width="1" height="4.5" fill="#555"/><rect x="91.86" y="9.5" width="1" height="4.5" fill="#555"/><rect x="95.78" y="9.5" width="1" height="4.5" fill="#555"/><rect x="99.70" y="7" width="1" height="7" fill="#555"/><rect x="103.62" y="9.5" width="1" height="4.5" fill="#555"/><rect x="107.54" y="9.5" width="1" height="4.5" fill="#555"/><rect x="111.46" y="9.5" width="1" height="4.5" fill="#555"/><rect x="115.38" y="9.5" width="1" height="4.5" fill="#555"/><rect x="119.30" y="1" width="1" height="13" fill="#555"/><rect x="123.22" y="9.5" width="1" height="4.5" fill="#555"/><rect x="127.14" y="9.5" width="1" height="4.5" fill="#555"/><rect x="131.06" y="9.5" width="1" height="4.5" fill="#555"/><rect x="134.98" y="9.5" width="1" height="4.5" fill="#555"/><rect x="138.90" y="7" width="1" height="7" fill="#555"/><rect x="142.82" y="9.5" width="1" height="4.5" fill="#555"/><rect x="146.74" y="9.5" width="1" height="4.5" fill="#555"/><rect x="150.66" y="9.5" width="1" height="4.5" fill="#555"/><rect x="154.58" y="9.5" width="1" height="4.5" fill="#555"/><rect x="158.50" y="1" width="1" height="13" fill="#555"/><rect x="162.42" y="9.5" width="1" height="4.5" fill="#555"/><rect x="166.34" y="9.5" width="1" height="4.5" fill="#555"/><rect x="170.26" y="9.5" width="1" height="4.5" fill="#555"/><rect x="174.18" y="9.5" width="1" height="4.5" fill="#555"/><rect x="178.10" y="7" width="1" height="7" fill="#555"/><rect x="182.02" y="9.5" width="1" height="4.5" fill="#555"/><rect x="185.94" y="9.5" width="1" height="4.5" fill="#555"/><rect x="189.86" y="9.5" width="1" height="4.5" fill="#555"/><rect x="193.78" y="9.5" width="1" height="4.5" fill="#555"/><rect x="197.70" y="1" width="1" height="13" fill="#555"/><rect x="201.62" y="9.5" width="1" height="4.5" fill="#555"/><rect x="205.54" y="9.5" width="1" height="4.5" fill="#555"/><rect x="209.46" y="9.5" width="1" height="4.5" fill="#555"/><rect x="213.38" y="9.5" width="1" height="4.5" fill="#555"/><rect x="217.30" y="7" width="1" height="7" fill="#555"/><rect x="221.22" y="9.5" width="1" height="4.5" fill="#555"/><rect x="225.14" y="9.5" width="1" height="4.5" fill="#555"/><rect x="229.06" y="9.5" width="1" height="4.5" fill="#555"/><rect x="232.98" y="9.5" width="1" height="4.5" fill="#555"/><rect x="236.90" y="1" width="1" height="13" fill="#555"/><rect x="240.82" y="9.5" width="1" height="4.5" fill="#555"/><rect x="244.74" y="9.5" width="1" height="4.5" fill="#555"/><rect x="248.66" y="9.5" width="1" height="4.5" fill="#555"/><rect x="252.58" y="9.5" width="1" height="4.5" fill="#555"/><rect x="256.50" y="7" width="1" height="7" fill="#555"/><rect x="260.42" y="9.5" width="1" height="4.5" fill="#555"/><rect x="264.34" y="9.5" width="1" height="4.5" fill="#555"/><rect x="268.26" y="9.5" width="1" height="4.5" fill="#555"/><rect x="272.18" y="9.5" width="1" height="4.5" fill="#555"/><rect x="276.10" y="1" width="1" height="13" fill="#555"/><rect x="280.02" y="9.5" width="1" height="4.5" fill="#555"/><rect x="283.94" y="9.5" width="1" height="4.5" fill="#555"/><rect x="287.86" y="9.5" width="1" height="4.5" fill="#555"/><rect x="291.78" y="9.5" width="1" height="4.5" fill="#555"/><rect x="295.70" y="7" width="1" height="7" fill="#555"/><rect x="299.62" y="9.5" width="1" height="4.5" fill="#555"/><rect x="303.54" y="9.5" width="1" height="4.5" fill="#555"/><rect x="307.46" y="9.5" width="1" height="4.5" fill="#555"/><rect x="311.38" y="9.5" width="1" height="4.5" fill="#555"/><rect x="315.30" y="1" width="1" height="13" fill="#555"/><rect x="319.22" y="9.5" width="1" height="4.5" fill="#555"/><rect x="323.14" y="9.5" width="1" height="4.5" fill="#555"/><rect x="327.06" y="9.5" width="1" height="4.5" fill="#555"/><rect x="330.98" y="9.5" width="1" height="4.5" fill="#555"/><rect x="334.90" y="7" width="1" height="7" fill="#555"/><rect x="338.82" y="9.5" width="1" height="4.5" fill="#555"/><rect x="342.74" y="9.5" width="1" height="4.5" fill="#555"/><rect x="346.66" y="9.5" width="1" height="4.5" fill="#555"/><rect x="350.58" y="9.5" width="1" height="4.5" fill="#555"/><rect x="354.50" y="1" width="1" height="13" fill="#555"/><rect x="358.42" y="9.5" width="1" height="4.5" fill="#555"/><rect x="362.34" y="9.5" width="1" height="4.5" fill="#555"/><rect x="366.26" y="9.5" width="1" height="4.5" fill="#555"/><rect x="370.18" y="9.5" width="1" height="4.5" fill="#555"/><rect x="374.10" y="7" width="1" height="7" fill="#555"/><rect x="378.02" y="9.5" width="1" height="4.5" fill="#555"/><rect x="381.94" y="9.5" width="1" height="4.5" fill="#555"/><rect x="385.86" y="9.5" width="1" height="4.5" fill="#555"/><rect x="389.78" y="9.5" width="1" height="4.5" fill="#555"/><rect x="393.70" y="1" width="1" height="13" fill="#555"/><rect x="397.62" y="9.5" width="1" height="4.5" fill="#555"/><rect x="401.54" y="9.5" width="1" height="4.5" fill="#555"/><rect x="405.46" y="9.5" width="1" height="4.5" fill="#555"/><rect x="409.38" y="9.5" width="1" height="4.5" fill="#555"/><rect x="413.30" y="7" width="1" height="7" fill="#555"/><rect x="417.22" y="9.5" width="1" height="4.5" fill="#555"/><rect x="421.14" y="9.5" width="1" height="4.5" fill="#555"/><rect x="425.06" y="9.5" width="1" height="4.5" fill="#555"/><rect x="428.98" y="9.5" width="1" height="4.5" fill="#555"/><rect x="432.90" y="1" width="1" height="13" fill="#555"/><rect x="436.82" y="9.5" width="1" height="4.5" fill="#555"/><rect x="440.74" y="9.5" width="1" height="4.5" fill="#555"/><rect x="444.66" y="9.5" width="1" height="4.5" fill="#555"/><rect x="448.58" y="9.5" width="1" height="4.5" fill="#555"/><rect x="452.50" y="7" width="1" height="7" fill="#555"/><rect x="456.42" y="9.5" width="1" height="4.5" fill="#555"/><rect x="460.34" y="9.5" width="1" height="4.5" fill="#555"/><rect x="464.26" y="9.5" width="1" height="4.5" fill="#555"/><rect x="468.18" y="9.5" width="1" height="4.5" fill="#555"/><rect x="472.10" y="1" width="1" height="13" fill="#555"/><rect x="476.02" y="9.5" width="1" height="4.5" fill="#555"/><rect x="479.94" y="9.5" width="1" height="4.5" fill="#555"/><rect x="483.86" y="9.5" width="1" height="4.5" fill="#555"/><rect x="487.78" y="9.5" width="1" height="4.5" fill="#555"/><rect x="491.70" y="7" width="1" height="7" fill="#555"/><rect x="495.62" y="9.5" width="1" height="4.5" fill="#555"/><rect x="499.54" y="9.5" width="1" height="4.5" fill="#555"/><rect x="503.46" y="9.5" width="1" height="4.5" fill="#555"/><rect x="507.38" y="9.5" width="1" height="4.5" fill="#555"/><rect x="511.30" y="1" width="1" height="13" fill="#555"/><rect x="515.22" y="9.5" width="1" height="4.5" fill="#555"/><rect x="519.14" y="9.5" width="1" height="4.5" fill="#555"/><rect x="523.06" y="9.5" width="1" height="4.5" fill="#555"/><rect x="526.98" y="9.5" width="1" height="4.5" fill="#555"/><rect x="530.90" y="7" width="1" height="7" fill="#555"/><rect x="534.82" y="9.5" width="1" height="4.5" fill="#555"/><rect x="538.74" y="9.5" width="1" height="4.5" fill="#555"/><rect x="542.66" y="9.5" width="1" height="4.5" fill="#555"/><rect x="546.58" y="9.5" width="1" height="4.5" fill="#555"/><rect x="550.50" y="1" width="1" height="13" fill="#555"/><rect x="554.42" y="9.5" width="1" height="4.5" fill="#555"/><rect x="558.34" y="9.5" width="1" height="4.5" fill="#555"/><rect x="562.26" y="9.5" width="1" height="4.5" fill="#555"/><rect x="566.18" y="9.5" width="1" height="4.5" fill="#555"/><rect x="570.10" y="7" width="1" height="7" fill="#555"/><rect x="574.02" y="9.5" width="1" height="4.5" fill="#555"/><rect x="577.94" y="9.5" width="1" height="4.5" fill="#555"/><rect x="581.86" y="9.5" width="1" height="4.5" fill="#555"/><rect x="585.78" y="9.5" width="1" height="4.5" fill="#555"/><rect x="589.70" y="1" width="1" height="13" fill="#555"/><rect x="593.62" y="9.5" width="1" height="4.5" fill="#555"/><rect x="597.54" y="9.5" width="1" height="4.5" fill="#555"/><rect x="601.46" y="9.5" width="1" height="4.5" fill="#555"/><rect x="605.38" y="9.5" width="1" height="4.5" fill="#555"/><rect x="609.30" y="7" width="1" height="7" fill="#555"/><rect x="613.22" y="9.5" width="1" height="4.5" fill="#555"/><rect x="617.14" y="9.5" width="1" height="4.5" fill="#555"/><rect x="621.06" y="9.5" width="1" height="4.5" fill="#555"/><rect x="624.98" y="9.5" width="1" height="4.5" fill="#555"/><rect x="628.90" y="1" width="1" height="13" fill="#555"/><rect x="632.82" y="9.5" width="1" height="4.5" fill="#555"/><rect x="636.74" y="9.5" width="1" height="4.5" fill="#555"/><rect x="640.66" y="9.5" width="1" height="4.5" fill="#555"/><rect x="644.58" y="9.5" width="1" height="4.5" fill="#555"/><rect x="648.50" y="7" width="1" height="7" fill="#555"/><rect x="652.42" y="9.5" width="1" height="4.5" fill="#555"/><rect x="656.34" y="9.5" width="1" height="4.5" fill="#555"/><rect x="660.26" y="9.5" width="1" height="4.5" fill="#555"/><rect x="664.18" y="9.5" width="1" height="4.5" fill="#555"/><rect x="668.10" y="1" width="1" height="13" fill="#555"/><rect x="672.02" y="9.5" width="1" height="4.5" fill="#555"/><rect x="675.94" y="9.5" width="1" height="4.5" fill="#555"/><rect x="679.86" y="9.5" width="1" height="4.5" fill="#555"/><rect x="683.78" y="9.5" width="1" height="4.5" fill="#555"/><rect x="687.70" y="7" width="1" height="7" fill="#555"/><rect x="691.62" y="9.5" width="1" height="4.5" fill="#555"/><rect x="695.54" y="9.5" width="1" height="4.5" fill="#555"/><rect x="699.46" y="9.5" width="1" height="4.5" fill="#555"/><rect x="703.38" y="9.5" width="1" height="4.5" fill="#555"/><rect x="707.30" y="1" width="1" height="13" fill="#555"/><rect x="711.22" y="9.5" width="1" height="4.5" fill="#555"/><rect x="715.14" y="9.5" width="1" height="4.5" fill="#555"/><rect x="719.06" y="9.5" width="1" height="4.5" fill="#555"/><rect x="722.98" y="9.5" width="1" height="4.5" fill="#555"/><rect x="726.90" y="7" width="1" height="7" fill="#555"/><rect x="730.82" y="9.5" width="1" height="4.5" fill="#555"/><rect x="734.74" y="9.5" width="1" height="4.5" fill="#555"/><rect x="738.66" y="9.5" width="1" height="4.5" fill="#555"/><text x="42.20" y="8.3" font-size="7.5" fill="#333" font-family="Liberation Sans">-20</text><text x="81.40" y="8.3" font-size="7.5" fill="#333" font-family="Liberation Sans">0</text><text x="120.60" y="8.3" font-size="7.5" fill="#333" font-family="Liberation Sans">20</text><text x="159.80" y="8.3" font-size="7.5" fill="#333" font-family="Liberation Sans">40</text><text x="199.00" y="8.3" font-size="7.5" fill="#333" font-family="Liberation Sans">60</text><text x="238.20" y="8.3" font-size="7.5" fill="#333" font-family="Liberation Sans">80</text><text x="277.40" y="8.3" font-size="7.5" fill="#333" font-family="Liberation Sans">100</text><text x="316.60" y="8.3" font-size="7.5" fill="#333" font-family="Liberation Sans">120</text><text x="355.80" y="8.3" font-size="7.5" fill="#333" font-family="Liberation Sans">140</text><text x="395.00" y="8.3" font-size="7.5" fill="#333" font-family="Liberation Sans">160</text><text x="434.20" y="8.3" font-size="7.5" fill="#333" font-family="Liberation Sans">180</text><text x="473.40" y="8.3" font-size="7.5" fill="#333" font-family="Liberation Sans">200</text><text x="512.60" y="8.3" font-size="7.5" fill="#333" font-family="Liberation Sans">220</text><text x="551.80" y="8.3" font-size="7.5" fill="#333" font-family="Liberation Sans">240</text><text x="591.00" y="8.3" font-size="7.5" fill="#333" font-family="Liberation Sans">260</text><text x="630.20" y="8.3" font-size="7.5" fill="#333" font-family="Liberation Sans">280</text><text x="669.40" y="8.3" font-size="7.5" fill="#333" font-family="Liberation Sans">300</text><text x="708.60" y="8.3" font-size="7.5" fill="#333" font-family="Liberation Sans">320</text><rect x="610.80" y="0" width="1" height="14" fill="#e06060"/></svg></div>
<div style="left:33px;top:102px;width:13px;height:468px;background:#f0f0f0;overflow:hidden"><svg style="left:0;top:0" width="13" height="468"><rect x="9" y="2.78" width="3.3" height="1" fill="#555"/><rect x="7.3" y="6.70" width="5" height="1" fill="#555"/><rect x="9" y="10.62" width="3.3" height="1" fill="#555"/><rect x="9" y="14.54" width="3.3" height="1" fill="#555"/><rect x="9" y="18.46" width="3.3" height="1" fill="#555"/><rect x="9" y="22.38" width="3.3" height="1" fill="#555"/><rect x="3.5" y="26.30" width="9.5" height="1" fill="#555"/><rect x="9" y="30.22" width="3.3" height="1" fill="#555"/><rect x="9" y="34.14" width="3.3" height="1" fill="#555"/><rect x="9" y="38.06" width="3.3" height="1" fill="#555"/><rect x="9" y="41.98" width="3.3" height="1" fill="#555"/><rect x="7.3" y="45.90" width="5" height="1" fill="#555"/><rect x="9" y="49.82" width="3.3" height="1" fill="#555"/><rect x="9" y="53.74" width="3.3" height="1" fill="#555"/><rect x="9" y="57.66" width="3.3" height="1" fill="#555"/><rect x="9" y="61.58" width="3.3" height="1" fill="#555"/><rect x="3.5" y="65.50" width="9.5" height="1" fill="#555"/><rect x="9" y="69.42" width="3.3" height="1" fill="#555"/><rect x="9" y="73.34" width="3.3" height="1" fill="#555"/><rect x="9" y="77.26" width="3.3" height="1" fill="#555"/><rect x="9" y="81.18" width="3.3" height="1" fill="#555"/><rect x="7.3" y="85.10" width="5" height="1" fill="#555"/><rect x="9" y="89.02" width="3.3" height="1" fill="#555"/><rect x="9" y="92.94" width="3.3" height="1" fill="#555"/><rect x="9" y="96.86" width="3.3" height="1" fill="#555"/><rect x="9" y="100.78" width="3.3" height="1" fill="#555"/><rect x="3.5" y="104.70" width="9.5" height="1" fill="#555"/><rect x="9" y="108.62" width="3.3" height="1" fill="#555"/><rect x="9" y="112.54" width="3.3" height="1" fill="#555"/><rect x="9" y="116.46" width="3.3" height="1" fill="#555"/><rect x="9" y="120.38" width="3.3" height="1" fill="#555"/><rect x="7.3" y="124.30" width="5" height="1" fill="#555"/><rect x="9" y="128.22" width="3.3" height="1" fill="#555"/><rect x="9" y="132.14" width="3.3" height="1" fill="#555"/><rect x="9" y="136.06" width="3.3" height="1" fill="#555"/><rect x="9" y="139.98" width="3.3" height="1" fill="#555"/><rect x="3.5" y="143.90" width="9.5" height="1" fill="#555"/><rect x="9" y="147.82" width="3.3" height="1" fill="#555"/><rect x="9" y="151.74" width="3.3" height="1" fill="#555"/><rect x="9" y="155.66" width="3.3" height="1" fill="#555"/><rect x="9" y="159.58" width="3.3" height="1" fill="#555"/><rect x="7.3" y="163.50" width="5" height="1" fill="#555"/><rect x="9" y="167.42" width="3.3" height="1" fill="#555"/><rect x="9" y="171.34" width="3.3" height="1" fill="#555"/><rect x="9" y="175.26" width="3.3" height="1" fill="#555"/><rect x="9" y="179.18" width="3.3" height="1" fill="#555"/><rect x="3.5" y="183.10" width="9.5" height="1" fill="#555"/><rect x="9" y="187.02" width="3.3" height="1" fill="#555"/><rect x="9" y="190.94" width="3.3" height="1" fill="#555"/><rect x="9" y="194.86" width="3.3" height="1" fill="#555"/><rect x="9" y="198.78" width="3.3" height="1" fill="#555"/><rect x="7.3" y="202.70" width="5" height="1" fill="#555"/><rect x="9" y="206.62" width="3.3" height="1" fill="#555"/><rect x="9" y="210.54" width="3.3" height="1" fill="#555"/><rect x="9" y="214.46" width="3.3" height="1" fill="#555"/><rect x="9" y="218.38" width="3.3" height="1" fill="#555"/><rect x="3.5" y="222.30" width="9.5" height="1" fill="#555"/><rect x="9" y="226.22" width="3.3" height="1" fill="#555"/><rect x="9" y="230.14" width="3.3" height="1" fill="#555"/><rect x="9" y="234.06" width="3.3" height="1" fill="#555"/><rect x="9" y="237.98" width="3.3" height="1" fill="#555"/><rect x="7.3" y="241.90" width="5" height="1" fill="#555"/><rect x="9" y="245.82" width="3.3" height="1" fill="#555"/><rect x="9" y="249.74" width="3.3" height="1" fill="#555"/><rect x="9" y="253.66" width="3.3" height="1" fill="#555"/><rect x="9" y="257.58" width="3.3" height="1" fill="#555"/><rect x="3.5" y="261.50" width="9.5" height="1" fill="#555"/><rect x="9" y="265.42" width="3.3" height="1" fill="#555"/><rect x="9" y="269.34" width="3.3" height="1" fill="#555"/><rect x="9" y="273.26" width="3.3" height="1" fill="#555"/><rect x="9" y="277.18" width="3.3" height="1" fill="#555"/><rect x="7.3" y="281.10" width="5" height="1" fill="#555"/><rect x="9" y="285.02" width="3.3" height="1" fill="#555"/><rect x="9" y="288.94" width="3.3" height="1" fill="#555"/><rect x="9" y="292.86" width="3.3" height="1" fill="#555"/><rect x="9" y="296.78" width="3.3" height="1" fill="#555"/><rect x="3.5" y="300.70" width="9.5" height="1" fill="#555"/><rect x="9" y="304.62" width="3.3" height="1" fill="#555"/><rect x="9" y="308.54" width="3.3" height="1" fill="#555"/><rect x="9" y="312.46" width="3.3" height="1" fill="#555"/><rect x="9" y="316.38" width="3.3" height="1" fill="#555"/><rect x="7.3" y="320.30" width="5" height="1" fill="#555"/><rect x="9" y="324.22" width="3.3" height="1" fill="#555"/><rect x="9" y="328.14" width="3.3" height="1" fill="#555"/><rect x="9" y="332.06" width="3.3" height="1" fill="#555"/><rect x="9" y="335.98" width="3.3" height="1" fill="#555"/><rect x="3.5" y="339.90" width="9.5" height="1" fill="#555"/><rect x="9" y="343.82" width="3.3" height="1" fill="#555"/><rect x="9" y="347.74" width="3.3" height="1" fill="#555"/><rect x="9" y="351.66" width="3.3" height="1" fill="#555"/><rect x="9" y="355.58" width="3.3" height="1" fill="#555"/><rect x="7.3" y="359.50" width="5" height="1" fill="#555"/><rect x="9" y="363.42" width="3.3" height="1" fill="#555"/><rect x="9" y="367.34" width="3.3" height="1" fill="#555"/><rect x="9" y="371.26" width="3.3" height="1" fill="#555"/><rect x="9" y="375.18" width="3.3" height="1" fill="#555"/><rect x="3.5" y="379.10" width="9.5" height="1" fill="#555"/><rect x="9" y="383.02" width="3.3" height="1" fill="#555"/><rect x="9" y="386.94" width="3.3" height="1" fill="#555"/><rect x="9" y="390.86" width="3.3" height="1" fill="#555"/><rect x="9" y="394.78" width="3.3" height="1" fill="#555"/><rect x="7.3" y="398.70" width="5" height="1" fill="#555"/><rect x="9" y="402.62" width="3.3" height="1" fill="#555"/><rect x="9" y="406.54" width="3.3" height="1" fill="#555"/><rect x="9" y="410.46" width="3.3" height="1" fill="#555"/><rect x="9" y="414.38" width="3.3" height="1" fill="#555"/><rect x="3.5" y="418.30" width="9.5" height="1" fill="#555"/><rect x="9" y="422.22" width="3.3" height="1" fill="#555"/><rect x="9" y="426.14" width="3.3" height="1" fill="#555"/><rect x="9" y="430.06" width="3.3" height="1" fill="#555"/><rect x="9" y="433.98" width="3.3" height="1" fill="#555"/><rect x="7.3" y="437.90" width="5" height="1" fill="#555"/><rect x="9" y="441.82" width="3.3" height="1" fill="#555"/><rect x="9" y="445.74" width="3.3" height="1" fill="#555"/><rect x="9" y="449.66" width="3.3" height="1" fill="#555"/><rect x="9" y="453.58" width="3.3" height="1" fill="#555"/><rect x="3.5" y="457.50" width="9.5" height="1" fill="#555"/><rect x="9" y="461.42" width="3.3" height="1" fill="#555"/><rect x="9" y="465.34" width="3.3" height="1" fill="#555"/><text transform="translate(7.2 28.10) rotate(-90)" font-size="7" fill="#333" font-family="Liberation Sans" text-anchor="end">0</text><text transform="translate(7.2 67.30) rotate(-90)" font-size="7" fill="#333" font-family="Liberation Sans" text-anchor="end">20</text><text transform="translate(7.2 106.50) rotate(-90)" font-size="7" fill="#333" font-family="Liberation Sans" text-anchor="end">40</text><text transform="translate(7.2 145.70) rotate(-90)" font-size="7" fill="#333" font-family="Liberation Sans" text-anchor="end">60</text><text transform="translate(7.2 184.90) rotate(-90)" font-size="7" fill="#333" font-family="Liberation Sans" text-anchor="end">80</text><text transform="translate(7.2 224.10) rotate(-90)" font-size="7" fill="#333" font-family="Liberation Sans" text-anchor="end">100</text><text transform="translate(7.2 263.30) rotate(-90)" font-size="7" fill="#333" font-family="Liberation Sans" text-anchor="end">120</text><text transform="translate(7.2 302.50) rotate(-90)" font-size="7" fill="#333" font-family="Liberation Sans" text-anchor="end">140</text><text transform="translate(7.2 341.70) rotate(-90)" font-size="7" fill="#333" font-family="Liberation Sans" text-anchor="end">160</text><text transform="translate(7.2 380.90) rotate(-90)" font-size="7" fill="#333" font-family="Liberation Sans" text-anchor="end">180</text><text transform="translate(7.2 420.10) rotate(-90)" font-size="7" fill="#333" font-family="Liberation Sans" text-anchor="end">200</text><text transform="translate(7.2 459.30) rotate(-90)" font-size="7" fill="#333" font-family="Liberation Sans" text-anchor="end">220</text><rect x="0" y="382.40" width="13" height="1" fill="#e06060"/></svg></div>
<div style="left:46px;top:102px;width:719px;height:468px;background:#d4d4d4"></div>
<div style="left:765px;top:102px;width:10px;height:468px;background:#f8f8f8"></div>
<div style="left:765px;top:102px;width:10px;height:10px;background:#fff;border-bottom:1px solid #d0d0d0"></div>
<svg style="left:767px;top:105px;" width="6" height="4" viewBox="0 0 6 4"><path d="M0 3.5h6L3 0z" fill="#333"/></svg>
<div style="left:765px;top:558px;width:10px;height:12px;background:#fff;border-top:1px solid #d0d0d0"></div>
<svg style="left:767px;top:562px;" width="6" height="4" viewBox="0 0 6 4"><path d="M0 0h6L3 3.5z" fill="#333"/></svg>
<div style="left:117px;top:132.5px;width:583px;height:411.5px;background:#909090"></div>
<div style="left:113px;top:128.3px;width:583px;height:411.7px;background:#fff"></div>
<div style="left:113px;top:116.5px;width:28px;height:11.8px;background:#bdbdbd;border:1px solid #a0a0a0;border-bottom:none"></div>
<div class="t" style="left:115px;top:117.8px;font-size:8px;line-height:9.6px;color:#555;"><svg class="g" width="23.00" height="6.08" viewBox="0 0 30 10" preserveAspectRatio="none" style="vertical-align:-0.40px;stroke-width:0.90px"><g fill="none" stroke="currentColor" stroke-linecap="round" stroke-linejoin="round"><g transform="translate(0.60 0) scale(.88 1)"><path transform="scale(.8333)" d="M0.6 0.6V11.6M0.6 0.6H11.4V10.8Q11.4 11.6 10.4 11.6H9.5M3.2 2.2L4 3.6M8.8 2.2L8 3.6M2.6 4.2H9.4M6 4.2V9.4M3.2 6.2V9.4H8.8V6.2"/></g><g transform="translate(10.60 0) scale(.88 1)"><path transform="scale(.8333)" d="M2 3V9.5M0.5 5V9.5H3.6V5M4.6 3H11.6M8 0.5C8 3 7 5 4.8 6.2M8.3 3.2L11.6 6M4.6 7.2H11.8M10.6 7.2V11Q10.6 11.8 9.6 11.8M6 8.8H8.6V10.6H6Z"/></g><g transform="translate(20.60 0) scale(.88 1)"><path transform="scale(.8333)" d="M6 0V2M0.5 2.4H11.5M2.2 4.8V10M2.2 4.8H9.8V9.6Q9.8 10.2 9 10.2M6 2.4V12"/></g></g></svg></div>
<svg style="left:356.9px;top:135.4px;" width="96" height="12" viewBox="0 0 96 12"><g fill="none" stroke="#1a1a1a" stroke-width="1.15"><path transform="translate(0.00 0)" d="M0.6 0.6V11.6M0.6 0.6H11.4V10.8Q11.4 11.6 10.4 11.6H9.5M3.2 2.2L4 3.6M8.8 2.2L8 3.6M2.6 4.2H9.4M6 4.2V9.4M3.2 6.2V9.4H8.8V6.2"/><path transform="translate(13.82 0)" d="M2 3V9.5M0.5 5V9.5H3.6V5M4.6 3H11.6M8 0.5C8 3 7 5 4.8 6.2M8.3 3.2L11.6 6M4.6 7.2H11.8M10.6 7.2V11Q10.6 11.8 9.6 11.8M6 8.8H8.6V10.6H6Z"/><path transform="translate(27.64 0)" d="M6 0V2M0.5 2.4H11.5M2.2 4.8V10M2.2 4.8H9.8V9.6Q9.8 10.2 9 10.2M6 2.4V12"/><path transform="translate(41.46 0)" d="M1.6 0.6V7Q1.6 10.5 0.2 11.8M1.6 0.6H10.8V10.8Q10.8 11.8 9.8 11.8M4 3.2H8.4M6.2 1.8V5.6M3.6 5.6H8.8M4.2 7.4H8.2V10H4.2Z"/><path transform="translate(55.28 0)" d="M1 0.8L2.2 2M0.4 5H2.4V9.6L0.6 11.2M2.4 9.8Q4 11.4 7 11.4H11.8M4.2 2H10.6V7.8Q10.6 8.8 9.6 8.6M7.6 2Q7.4 6.4 4.4 9"/><path transform="translate(69.10 0)" d="M0.4 4.2H4M2.2 1.2V10M0.4 10.6L4.2 9.2M4.6 5.2L11 3.8V7.2Q11 8 10.2 7.8M7 1.4V9M9 0.8V8.4M5 4.6V10.4Q5 11.4 6 11.4H11Q11.6 11.4 11.6 10"/><path transform="translate(82.92 0)" d="M0.6 0.6H11.4V11.4H0.6ZM3 2.4L3.8 3.6M5.6 2.2L6.2 3.4M9 2.2Q8 6.4 3 9.4M4.2 5.2L9.4 9.6"/></g></svg>
<div style="left:128.3px;top:158px;width:402.7px;height:363px;background:#c6c6c6;border:1px solid #5a5a5a;box-shadow:0 0 0 .4px #888;overflow:hidden"><svg style="left:-1px;top:-1px" width="402.7" height="363"><polyline points="22.7,0.0 22.7,2.5 22.7,5.1 21.5,7.4 22.2,10.0 21.1,12.4 21.1,14.9 20.5,17.4 20.5,20.7 18.9,23.7 16.8,26.0 15.3,28.9 12.6,30.7 9.6,30.3 6.4,30.4 3.4,29.8 0.5,28.5" fill="none" stroke="#2a2a2a" stroke-width="0.9" stroke-linejoin="round"/><polyline points="0.5,101.5 3.0,101.6 5.5,102.6 8.2,101.6 10.7,102.0 13.1,103.0 15.7,103.0 15.7,106.4 17.3,109.4 20.5,108.7 23.5,107.5 26.7,106.8 27.7,109.3 30.7,110.1 31.7,112.6 32.3,115.2 34.4,117.1 35.8,119.4 36.4,122.0 37.9,125.2 42.7,125.2 43.3,122.5 44.8,120.3 46.8,118.3 47.5,115.7 50.0,114.6 52.8,114.8 55.4,114.1 57.9,115.4 60.8,116.0 63.3,117.3 64.8,119.7 66.5,122.0 69.7,119.0 72.8,122.0 75.2,120.2 77.8,119.2 80.6,118.4 83.5,118.1 86.0,116.6 88.7,115.7 90.0,112.4 91.9,109.4 91.4,106.8 90.5,104.3 89.6,101.9 89.9,99.1 88.7,96.7 88.5,93.9 87.2,91.4 87.2,88.5 86.6,85.8 86.6,83.0 85.8,80.3 84.9,77.7 85.5,72.9 87.4,71.2 90.2,70.7 91.5,68.0 93.9,67.0 96.3,66.1 98.2,64.3 101.5,64.1 104.5,65.1 107.7,65.6 110.7,66.2 112.9,68.6 115.7,69.7 118.0,67.6 119.8,65.0 122.1,63.0 123.6,60.2 125.9,62.1 127.5,64.7 129.9,66.6 132.5,67.3 135.2,67.7 137.9,68.1 139.1,65.8 141.0,64.0 142.4,61.8 142.9,59.2 144.2,57.0 146.4,58.8 149.0,60.2 151.4,59.1 154.1,59.9 156.7,59.5 159.3,59.8 161.7,58.6 164.4,59.4 167.2,58.6 170.0,58.9 172.7,59.3 174.0,62.1 176.6,64.0 177.6,67.1 179.1,69.7 182.0,70.6 184.8,71.9 187.1,73.9 190.5,74.2 193.4,76.0 194.7,78.7 196.7,80.8 198.1,83.8 198.3,87.2 201.6,87.6 204.7,88.8 205.3,86.3 206.9,84.2 206.3,81.4 207.8,79.2 207.7,76.1 207.8,72.9 210.2,74.5 212.6,76.0 215.6,77.5 218.9,77.7 220.0,80.4 222.1,82.4 224.2,84.2 227.0,84.4 229.3,85.9 231.6,87.2 234.2,87.3 236.6,88.5 239.1,89.0 241.8,87.9 244.3,88.8 247.5,88.2 250.6,88.3 253.8,88.8 256.8,86.8 260.2,85.6 262.6,88.0 264.9,90.4 268.1,90.3 271.2,89.5 274.4,89.7 277.1,90.3 278.9,92.4 281.2,93.7 283.2,95.4 285.5,96.7 288.6,98.0 291.8,98.1 295.1,98.3 296.7,95.6 298.2,92.9 300.7,93.1 303.3,93.2 305.8,92.1 308.4,93.6 310.9,92.9 313.5,93.2 316.0,93.2 318.6,92.9 321.0,92.0 323.6,92.0 325.0,94.1 326.7,96.0 327.2,98.7 329.3,100.4 329.9,103.0 330.7,106.2 330.4,109.4 329.9,112.6 332.3,114.4 334.0,116.9 336.3,118.7 338.3,120.9 339.5,123.7" fill="none" stroke="#2a2a2a" stroke-width="0.9" stroke-linejoin="round"/><polyline points="339.5,123.7 340.8,121.2 342.6,119.1 344.8,117.4 346.1,115.0 349.1,113.9 350.5,111.6 352.2,109.4 352.6,106.5 353.9,104.0 355.3,101.5 357.7,100.0 360.3,98.7 362.6,97.1 365.7,96.9 368.0,95.1 370.4,97.1 373.6,97.4 376.3,98.7 379.1,99.9 381.8,99.2 384.4,99.2 387.1,99.9 386.8,97.2 386.7,94.4 387.7,91.7 386.5,89.0 386.2,86.3 387.9,83.5 387.1,80.8 388.1,78.3 388.3,75.5 389.9,73.1 390.0,70.3 391.7,68.0 391.8,65.4 392.6,62.8 392.4,60.2 392.1,57.5 391.4,54.9 391.8,52.3 391.6,49.5 391.2,46.8 392.3,44.0 391.8,41.2 393.7,39.0 395.8,37.1 397.0,34.4 398.7,32.1 401.3,30.6 402.7,28.0" fill="none" stroke="#2a2a2a" stroke-width="0.9" stroke-linejoin="round"/><polyline points="339.5,123.7 340.3,126.8 342.1,129.3 344.2,131.6 345.9,133.6 347.8,135.2 349.9,136.7 352.2,138.0 355.1,138.3 357.7,139.6 360.6,140.1 363.3,141.1 362.9,143.9 361.7,146.2 360.1,148.4 358.5,150.6 356.9,152.8 354.5,154.2 352.2,155.7 351.0,158.3 349.0,160.1 350.0,162.6 351.5,164.6 353.1,166.5 355.3,168.0 358.1,168.6 361.0,169.1 363.8,169.9 366.4,171.2 366.0,173.8 365.0,176.2 363.4,178.4 362.0,180.6 361.7,183.3 364.0,185.4 367.0,186.5 369.6,188.1 369.6,190.6 369.5,193.1 371.0,195.5 370.2,198.1 370.0,200.7 370.5,203.1 371.2,205.6 371.9,208.1 373.5,210.1 375.1,212.1 375.2,214.9 377.1,216.8 377.5,219.4 379.1,221.4 378.8,224.2 380.4,226.7 380.9,229.3 380.4,232.2 381.4,234.7 382.3,237.3 384.0,239.8 385.3,242.6 386.5,245.4 387.1,248.4 389.4,250.2 392.1,251.1 395.1,251.1 397.3,253.3 399.8,254.7 402.7,255.0" fill="none" stroke="#2a2a2a" stroke-width="0.9" stroke-linejoin="round"/><polyline points="382.3,237.3 379.4,237.7 376.6,238.8 373.7,239.1 371.0,240.5 368.0,240.5 366.5,243.2 363.2,244.1 361.7,246.8 361.4,249.3 361.7,251.9 360.9,254.4 361.8,257.0 361.7,259.5 359.8,261.4 358.6,263.6 358.3,266.4 357.0,268.6 355.3,270.6 352.2,271.8 349.0,272.2 346.2,271.3 344.0,269.5 341.2,268.7 338.8,267.2 336.3,265.8 333.7,264.4 332.5,261.4 329.9,260.1 327.4,261.7 324.7,262.9 322.0,264.2 319.9,265.7 317.6,266.8 316.2,269.1 314.1,270.6 312.7,268.2 310.3,266.8 308.4,264.9 306.5,263.0 304.6,261.1 302.7,258.8 302.4,255.8 301.4,253.1 299.3,255.2 297.1,257.0 294.0,257.5 291.9,259.5 288.8,260.9 285.5,261.1 283.4,263.2 281.0,265.0 279.2,267.4 276.0,267.8 272.9,268.8 269.7,269.0 267.3,270.2 264.9,271.3 262.3,272.1 260.2,273.8 258.3,275.7 255.7,276.2 253.7,278.0 251.4,279.2 249.0,280.1 247.4,277.4 245.1,275.3 243.2,272.9 241.1,270.6 237.7,271.8 234.8,273.8 231.8,273.7 229.1,275.1 226.2,275.5 223.4,276.3 220.5,276.9 218.0,275.9 215.5,274.7 212.9,274.2 210.4,273.1 207.8,272.2 205.7,274.3 203.0,275.8 201.5,278.5 200.2,280.7 199.0,283.0 197.9,285.3 197.7,288.0 197.7,290.6 196.8,293.0 195.8,295.4 195.6,297.9 196.4,300.6 196.1,303.1 195.0,305.5 195.4,308.4 196.4,311.2 196.5,314.1 197.1,317.0 196.7,320.0 198.0,322.5 199.4,324.9 200.8,327.4 203.0,329.3 205.3,330.7 206.4,333.2 208.2,334.9 210.7,336.1 211.6,338.9 213.3,340.8 215.7,342.0 218.5,341.7 221.1,343.3 223.9,342.5 226.6,342.9 229.3,344.0 232.0,344.0 234.8,343.6 237.4,345.0 239.3,347.3 241.4,349.3 243.9,350.9 245.9,353.0 243.8,354.7 241.3,355.7 238.6,356.2 236.4,357.8 234.7,362.3" fill="none" stroke="#2a2a2a" stroke-width="0.9" stroke-linejoin="round"/><polyline points="195.0,305.5 192.3,305.5 190.3,303.8 187.8,303.2 185.2,303.1 183.0,301.8 180.7,300.7 178.1,300.0 175.4,299.6 172.6,299.9 170.3,297.8 167.5,297.6 164.8,297.6 162.1,295.0 158.5,293.8 155.7,294.9 152.8,295.1 150.0,295.9 147.0,295.1 144.2,296.0" fill="none" stroke="#2a2a2a" stroke-width="0.9" stroke-linejoin="round"/><polyline points="36.4,122.0 36.8,125.2 36.4,128.4 37.8,130.6 38.1,133.2 38.0,135.8 39.5,138.0 41.2,140.5 44.1,141.9 45.9,144.3 44.3,149.0 41.6,149.4 39.1,147.7 36.4,148.1 33.7,147.6 31.0,148.5 28.4,147.5 26.7,150.6 29.2,151.6 30.5,154.1 32.8,155.3 34.7,157.0 37.0,159.8 37.9,163.3 36.4,165.4 36.1,168.0 35.0,170.3 34.7,172.8 33.2,175.4 30.2,176.5 28.7,179.0 27.6,181.5 24.9,182.5 23.7,184.9 25.3,187.5 27.1,190.1 28.4,192.9 29.9,194.9 30.9,197.3 33.5,198.6 34.7,200.8 36.0,203.5 35.9,206.5 37.1,209.2 37.9,212.0 37.9,215.0 36.8,217.7 35.4,220.2 33.6,222.4 31.8,224.7 30.3,227.1 28.4,229.3 26.4,231.7 25.6,234.8 23.7,237.3 24.7,239.9 26.3,242.4 26.8,245.2 28.6,247.7 30.7,250.0 31.6,253.1 32.6,256.2 33.5,259.4 33.2,262.7 30.7,263.9 28.7,265.8 26.9,267.9 24.3,269.1 22.1,270.6 20.8,273.6 21.7,277.1 20.5,280.1 23.1,280.0 25.4,278.6 28.0,278.1 30.6,278.0 32.9,276.6 35.4,276.1 37.9,275.4 40.3,273.7 42.9,272.2 44.4,269.4 47.2,268.2 49.0,265.8 51.9,265.8 54.6,265.2 57.4,264.4 60.2,264.2 63.0,264.6 65.8,264.8 68.5,265.6 71.2,266.2 73.7,268.0 76.6,267.9 79.2,269.0 79.8,266.0 80.9,263.2 83.3,260.9 83.9,257.9 85.6,255.9 86.5,253.5 87.0,250.9 88.1,248.6 89.3,246.4 90.7,244.2 91.9,242.0 94.6,240.8 97.6,240.7 100.4,239.7 103.5,240.3 106.2,238.9 108.7,240.5 111.7,240.5 114.6,240.8 117.3,242.0 118.9,244.3 121.7,244.9 123.8,246.6 126.2,247.7 127.9,249.8 129.9,251.6 131.9,253.8 133.7,256.0 136.1,257.9 137.6,260.5 139.5,262.7 138.6,265.6 136.7,267.7 135.3,270.2 133.1,272.2 134.8,274.2 136.9,275.9 138.5,278.0 139.7,280.5 141.4,282.5 142.6,284.9 142.8,287.7 143.3,290.5 143.4,293.3 144.2,296.0 142.0,297.8 140.0,299.7 137.8,301.4 136.3,303.9 135.7,306.3 135.0,308.7 133.1,310.7 133.1,313.4 131.6,315.7 129.0,316.9 127.2,318.9 126.1,321.6 123.6,322.9 123.7,325.6 124.2,328.2 125.3,330.6 125.8,333.2 126.8,335.6 124.8,337.4 124.1,340.3 122.0,342.0 123.6,344.4 125.2,346.8 126.3,349.5 128.4,351.5 126.7,354.0 125.5,356.7 124.7,359.5 123.6,362.3" fill="none" stroke="#2a2a2a" stroke-width="0.9" stroke-linejoin="round"/><polyline points="26.8,245.2 24.4,246.9 22.9,249.2 21.0,251.3 19.8,254.0 18.2,256.3 15.7,257.9 13.5,259.7 10.7,260.6 8.4,262.2 5.3,262.2 3.0,263.9 0.5,265.2" fill="none" stroke="#2a2a2a" stroke-width="0.9" stroke-linejoin="round"/><polyline points="60.2,264.2 60.3,267.0 60.7,269.8 61.0,272.6 61.7,275.4 61.0,278.3 61.1,281.4 58.9,284.0 58.7,287.0 56.7,288.7 55.4,291.0 53.7,293.0 50.7,292.4 47.7,292.0 45.3,290.7 42.7,290.0 38.7,288.0 37.3,291.4 34.7,294.0 33.3,296.3 32.7,299.0 28.7,299.5 25.7,301.0 26.7,304.0 29.2,303.3 31.7,303.5 34.7,302.0 37.0,300.7 39.7,301.0 42.8,301.6 45.7,303.0" fill="none" stroke="#2a2a2a" stroke-width="0.9" stroke-linejoin="round"/><polyline points="34.7,304.0 34.7,306.0 37.6,306.9 40.7,307.0 43.1,309.2 44.7,312.0 47.2,316.0 45.1,318.8 43.7,322.0 41.7,325.0 39.8,322.9 37.0,322.3 34.7,321.0 31.7,319.0" fill="none" stroke="#2a2a2a" stroke-width="0.9" stroke-linejoin="round"/><polyline points="17.7,320.0 19.8,321.9 21.7,324.0 19.7,328.0 20.7,331.0 24.7,333.0 27.2,331.5 29.7,330.0 31.7,328.0 29.7,324.0 27.4,321.7 24.7,320.0 21.2,319.5 17.7,320.0" fill="none" stroke="#2a2a2a" stroke-width="0.9" stroke-linejoin="round"/><polyline points="31.7,328.0 34.6,329.2 37.7,330.0 40.8,329.2 43.7,328.0 46.9,328.3 49.7,330.0 51.6,331.9 52.9,334.2 53.5,336.8 55.6,338.6 56.7,341.0 58.4,343.0 61.0,344.2 62.7,346.2 64.3,348.3 65.6,350.7 67.4,352.6 69.2,354.5 71.3,356.2 72.4,359.2 72.8,362.3" fill="none" stroke="#2a2a2a" stroke-width="0.9" stroke-linejoin="round"/><polyline points="82.4,362.3 84.1,359.7 85.7,357.0 88.7,357.4 91.7,358.0 94.2,356.7 96.7,355.5 98.6,357.4 98.8,360.4 100.7,362.3" fill="none" stroke="#2a2a2a" stroke-width="0.9" stroke-linejoin="round"/><polyline points="104.6,362.3 104.1,359.5 105.5,356.8 104.7,354.0 107.0,355.3 109.7,355.0 112.4,355.7 114.1,357.8 116.0,360.0 117.7,362.3" fill="none" stroke="#2a2a2a" stroke-width="0.9" stroke-linejoin="round"/><polyline points="402.7,325.0 399.9,325.7 397.1,326.7 394.9,328.8 392.5,330.4 389.9,331.7 387.1,332.5 387.9,336.0 390.2,338.8 391.5,341.4 391.7,344.4 393.2,346.9 393.4,349.9 396.5,350.6 399.4,352.1 402.7,352.0" fill="none" stroke="#2a2a2a" stroke-width="0.9" stroke-linejoin="round"/><path d="M148.7 357.0 l6 3 -3 1z" fill="#fff"/><path d="M19.7 326.0 l3 -1 2 5 -3 2z" fill="#222"/></svg></div>
<div style="left:134.5px;top:164.7px;width:18px;height:7.6px;background:rgba(255,255,255,.75);border-radius:2px;box-shadow:0 0 1.5px 1px rgba(255,255,255,.5)"></div>
<div class="t" style="left:135.5px;top:165.2px;font-size:6px;line-height:7.2px;color:#6a6a6a;"><svg class="g" width="16.00" height="4.56" viewBox="0 0 40 10" preserveAspectRatio="none" style="vertical-align:-0.30px;stroke-width:0.75px"><g fill="none" stroke="currentColor" stroke-linecap="round" stroke-linejoin="round"><g transform="translate(0.60 0) scale(.88 1)"><path d="M1.5 2H5Q3.5 6 2.5 8.5Q1.5 9.5 1.2 8Q1.5 6.5 4 6.5Q7.5 6.5 9 8.5M7 4V9.5"/></g><g transform="translate(10.60 0) scale(.88 1)"><path d="M5 1V8M5 4H8.5M5 8Q5 9.5 3.5 9.5Q2 9.5 2 8.5Q2 7.5 3.5 7.5Q6 7.5 8.5 9.5"/></g><g transform="translate(20.60 0) scale(.88 1)"><path d="M3 1V7.5Q3 9.5 5 9.3Q7.5 9 9 6.5"/></g><g transform="translate(30.60 0) scale(.88 1)"><path transform="scale(.8333)" d="M6 0V2M0.5 2.4H11.5M2.2 4.8V10M2.2 4.8H9.8V9.6Q9.8 10.2 9 10.2M6 2.4V12"/></g></g></svg></div>
<div style="left:319.5px;top:202.7px;width:20px;height:7.6px;background:rgba(255,255,255,.75);border-radius:2px;box-shadow:0 0 1.5px 1px rgba(255,255,255,.5)"></div>
<div class="t" style="left:320.5px;top:203.2px;font-size:6px;line-height:7.2px;color:#6a6a6a;"><svg class="g" width="18.00" height="4.56" viewBox="0 0 30 10" preserveAspectRatio="none" style="vertical-align:-0.30px;stroke-width:0.75px"><g fill="none" stroke="currentColor" stroke-linecap="round" stroke-linejoin="round"><g transform="translate(0.60 0) scale(.88 1)"><path d="M3.5 0.3V3M6.5 0.3V3M1 1H9V4H1ZM0.5 2.5H9.5M0.5 4.8H9.5M2 5.8H8V7.3H2ZM3 8L3.5 9M7 8L6.5 9M0.5 9.5H9.5"/></g><g transform="translate(10.60 0) scale(.88 1)"><path d="M1 1H9V9.5H1ZM1 5.2H9M5 1V9.5"/></g><g transform="translate(20.60 0) scale(.88 1)"><path transform="scale(.8333)" d="M6 0V2M0.5 2.4H11.5M2.2 4.8V10M2.2 4.8H9.8V9.6Q9.8 10.2 9 10.2M6 2.4V12"/></g></g></svg></div>
<div style="left:510px;top:158.9px;width:18.5px;height:7.6px;background:rgba(255,255,255,.75);border-radius:2px;box-shadow:0 0 1.5px 1px rgba(255,255,255,.5)"></div>
<div class="t" style="left:511px;top:159.4px;font-size:6px;line-height:7.2px;color:#6a6a6a;"><svg class="g" width="16.50" height="4.56" viewBox="0 0 30 10" preserveAspectRatio="none" style="vertical-align:-0.30px;stroke-width:0.75px"><g fill="none" stroke="currentColor" stroke-linecap="round" stroke-linejoin="round"><g transform="translate(0.60 0) scale(.88 1)"><path d="M1.5 0.5L2.5 1.5M0.5 3H3.5M0.5 4.8H3.5M0.5 6.5H3.5M1 8H3.5V9.8H1ZM6 1Q6 3.5 4.5 4M6 1H8.5V3.5Q8.5 4.2 9.5 4M5 5.2H9Q8 8.5 4.5 9.8M5.5 6.5L9.5 9.8"/></g><g transform="translate(10.60 0) scale(.88 1)"><path d="M5 0.3V5M2 1.5L3 3M8 1.5L7 3M3.5 1H6.5V4.5H3.5ZM0.5 5.8H9.5M5 5.8V9.8M4.5 6.5L0.8 9.3M5.5 6.5L9.2 9.3"/></g><g transform="translate(20.60 0) scale(.88 1)"><path d="M0.5 1.5H5V8H0.5ZM0.5 4.7H5M2.8 1.5V8M5.5 2H9.5M8 2V9Q8 9.8 7 9.8"/></g></g></svg></div>
<div style="left:128.5px;top:251.2px;width:20px;height:7.6px;background:rgba(255,255,255,.75);border-radius:2px;box-shadow:0 0 1.5px 1px rgba(255,255,255,.5)"></div>
<div class="t" style="left:129.5px;top:251.7px;font-size:6px;line-height:7.2px;color:#6a6a6a;"><svg class="g" width="18.00" height="4.56" viewBox="0 0 30 10" preserveAspectRatio="none" style="vertical-align:-0.30px;stroke-width:0.75px"><g fill="none" stroke="currentColor" stroke-linecap="round" stroke-linejoin="round"><g transform="translate(0.60 0) scale(.88 1)"><path d="M2 0.5L0.8 3M1 2.5H5M0.5 5H5M3 2.5V5Q3 8 0.5 9.8M3 6L5 8.5M6 1.5H9.5V9H6Z"/></g><g transform="translate(10.60 0) scale(.88 1)"><path d="M5 0.3V1.5M1 2.3H9M3 3.8L4 7.5M7 3.8L6 7.5M0.5 9.3H9.5"/></g><g transform="translate(20.60 0) scale(.88 1)"><path transform="scale(.8333)" d="M6 0V2M0.5 2.4H11.5M2.2 4.8V10M2.2 4.8H9.8V9.6Q9.8 10.2 9 10.2M6 2.4V12"/></g></g></svg></div>
<div style="left:134px;top:331.2px;width:21.5px;height:7.6px;background:rgba(255,255,255,.75);border-radius:2px;box-shadow:0 0 1.5px 1px rgba(255,255,255,.5)"></div>
<div class="t" style="left:135px;top:331.7px;font-size:6px;line-height:7.2px;color:#6a6a6a;"><svg class="g" width="19.50" height="4.56" viewBox="0 0 30 10" preserveAspectRatio="none" style="vertical-align:-0.30px;stroke-width:0.75px"><g fill="none" stroke="currentColor" stroke-linecap="round" stroke-linejoin="round"><g transform="translate(0.60 0) scale(.88 1)"><path d="M5 0.3V1.5M0.8 3V1.5H9.2V3M4 3.5Q3 6 2 9M0.5 5.8H9.5M7 5.8Q5 9 1 9.8M3 7L9 9.8"/></g><g transform="translate(10.60 0) scale(.88 1)"><path d="M0.5 4H3.5M2 1.5V9M0.5 9.5L3.5 8M4 2.5H9.5M4 2.5V9.5M4 5H6.5V8.5M7.5 0.5Q7.5 6 9.5 9.5M9.5 5.5L6.5 9.5M8.5 0.8L9.3 1.5"/></g><g transform="translate(20.60 0) scale(.88 1)"><path transform="scale(.8333)" d="M6 0V2M0.5 2.4H11.5M2.2 4.8V10M2.2 4.8H9.8V9.6Q9.8 10.2 9 10.2M6 2.4V12"/></g></g></svg></div>
<div style="left:314.5px;top:334.2px;width:21px;height:7.6px;background:rgba(255,255,255,.75);border-radius:2px;box-shadow:0 0 1.5px 1px rgba(255,255,255,.5)"></div>
<div class="t" style="left:315.5px;top:334.7px;font-size:6px;line-height:7.2px;color:#6a6a6a;"><svg class="g" width="19.00" height="4.56" viewBox="0 0 30 10" preserveAspectRatio="none" style="vertical-align:-0.30px;stroke-width:0.75px"><g fill="none" stroke="currentColor" stroke-linecap="round" stroke-linejoin="round"><g transform="translate(0.60 0) scale(.88 1)"><path transform="scale(.8333)" d="M0.6 0.6V11.6M0.6 0.6H11.4V10.8Q11.4 11.6 10.4 11.6H9.5M3.2 2.2L4 3.6M8.8 2.2L8 3.6M2.6 4.2H9.4M6 4.2V9.4M3.2 6.2V9.4H8.8V6.2"/></g><g transform="translate(10.60 0) scale(.88 1)"><path transform="scale(.8333)" d="M2 3V9.5M0.5 5V9.5H3.6V5M4.6 3H11.6M8 0.5C8 3 7 5 4.8 6.2M8.3 3.2L11.6 6M4.6 7.2H11.8M10.6 7.2V11Q10.6 11.8 9.6 11.8M6 8.8H8.6V10.6H6Z"/></g><g transform="translate(20.60 0) scale(.88 1)"><path transform="scale(.8333)" d="M6 0V2M0.5 2.4H11.5M2.2 4.8V10M2.2 4.8H9.8V9.6Q9.8 10.2 9 10.2M6 2.4V12"/></g></g></svg></div>
<div style="left:500.5px;top:307px;width:20px;height:7.6px;background:rgba(255,255,255,.75);border-radius:2px;box-shadow:0 0 1.5px 1px rgba(255,255,255,.5)"></div>
<div class="t" style="left:501.5px;top:307.5px;font-size:6px;line-height:7.2px;color:#6a6a6a;"><svg class="g" width="18.00" height="4.56" viewBox="0 0 30 10" preserveAspectRatio="none" style="vertical-align:-0.30px;stroke-width:0.75px"><g fill="none" stroke="currentColor" stroke-linecap="round" stroke-linejoin="round"><g transform="translate(0.60 0) scale(.88 1)"><path d="M2.5 0.3V1.2M0.5 1.5H4.5M1 2.5L1.5 3.5M4 2.5L3.5 3.5M0.5 4H4.5M2.5 4V9.8M0.5 6H4.5M2 7L0.5 8.5M3 7L4.5 8M9 0.5L6 1.5M6 1.5V6Q6 8.5 5 9.8M6 4.5H9.5M8 4.5V9.8"/></g><g transform="translate(10.60 0) scale(.88 1)"><path d="M0.5 4H3.5M2 1.5V9M0.5 9.5L3.5 8M4 2.5H9.5M4 2.5V9.5M4 5H6.5V8.5M7.5 0.5Q7.5 6 9.5 9.5M9.5 5.5L6.5 9.5M8.5 0.8L9.3 1.5"/></g><g transform="translate(20.60 0) scale(.88 1)"><path transform="scale(.8333)" d="M6 0V2M0.5 2.4H11.5M2.2 4.8V10M2.2 4.8H9.8V9.6Q9.8 10.2 9 10.2M6 2.4V12"/></g></g></svg></div>
<div style="left:210.2px;top:458.1px;width:21.3px;height:7.6px;background:rgba(255,255,255,.75);border-radius:2px;box-shadow:0 0 1.5px 1px rgba(255,255,255,.5)"></div>
<div class="t" style="left:211.2px;top:458.6px;font-size:6px;line-height:7.2px;color:#6a6a6a;"><svg class="g" width="19.30" height="4.56" viewBox="0 0 30 10" preserveAspectRatio="none" style="vertical-align:-0.30px;stroke-width:0.75px"><g fill="none" stroke="currentColor" stroke-linecap="round" stroke-linejoin="round"><g transform="translate(0.60 0) scale(.88 1)"><path d="M5 0.3V4M1.5 1.5H8.5M0.5 3.5H9.5M3 4.5L3.8 5.5M7 4.5L6.2 5.5M0.5 6.5H9.5M1.5 8.3H8.5M5 6.5V9.8"/></g><g transform="translate(10.60 0) scale(.88 1)"><path d="M1 1H9V9.5H1ZM1 5.2H9M5 1V9.5"/></g><g transform="translate(20.60 0) scale(.88 1)"><path d="M0.5 1.5H5V8H0.5ZM0.5 4.7H5M2.8 1.5V8M5.5 2H9.5M8 2V9Q8 9.8 7 9.8"/></g></g></svg></div>
<div style="left:145.1px;top:469.2px;width:21.6px;height:7.6px;background:rgba(255,255,255,.75);border-radius:2px;box-shadow:0 0 1.5px 1px rgba(255,255,255,.5)"></div>
<div class="t" style="left:146.1px;top:469.7px;font-size:6px;line-height:7.2px;color:#6a6a6a;"><svg class="g" width="19.60" height="4.56" viewBox="0 0 30 10" preserveAspectRatio="none" style="vertical-align:-0.30px;stroke-width:0.75px"><g fill="none" stroke="currentColor" stroke-linecap="round" stroke-linejoin="round"><g transform="translate(0.60 0) scale(.88 1)"><path d="M0.5 1H9.5M1 3H9V9.5H1ZM3.8 1V5.5Q3.8 6.5 1.5 7.5M6.2 1V6Q6.2 7 9 7"/></g><g transform="translate(10.60 0) scale(.88 1)"><path d="M1 1H9V3.5H1M1 1V6Q1 8.5 0 9.8M3 4.5L8 4M3 6.3H8.5M2.5 8.3H9M5 3.5V9Q5 9.8 9.3 9.6"/></g><g transform="translate(20.60 0) scale(.88 1)"><path transform="scale(.8333)" d="M6 0V2M0.5 2.4H11.5M2.2 4.8V10M2.2 4.8H9.8V9.6Q9.8 10.2 9 10.2M6 2.4V12"/></g></g></svg></div>
<div style="left:289.5px;top:488.9px;width:21.6px;height:7.6px;background:rgba(255,255,255,.75);border-radius:2px;box-shadow:0 0 1.5px 1px rgba(255,255,255,.5)"></div>
<div class="t" style="left:290.5px;top:489.4px;font-size:6px;line-height:7.2px;color:#6a6a6a;"><svg class="g" width="19.60" height="4.56" viewBox="0 0 30 10" preserveAspectRatio="none" style="vertical-align:-0.30px;stroke-width:0.75px"><g fill="none" stroke="currentColor" stroke-linecap="round" stroke-linejoin="round"><g transform="translate(0.60 0) scale(.88 1)"><path d="M0.5 1.5H9.5M3 0.3V2.5M7 0.3V2.5M0.5 3.5L1.5 4.5M0.5 6L1.5 6.5M1 9.5L2 7.5M2.5 4H9.5M3 5.5H9V9.8M3 5.5V9.8M3 7.5H9M6 3V9.8M8 2.5L8.8 3.5"/></g><g transform="translate(10.60 0) scale(.88 1)"><path d="M0.5 1.5H5.5M3 0.3V3M0.5 3.5H5.5M3 3.5L0.5 6M1.5 5.5H5V8.5H1.5ZM6.5 1V9.8M6.5 1H9Q9.5 1 8 4Q10 5.5 9 7.5Q8 8 7 7.5"/></g><g transform="translate(20.60 0) scale(.88 1)"><path transform="scale(.8333)" d="M6 0V2M0.5 2.4H11.5M2.2 4.8V10M2.2 4.8H9.8V9.6Q9.8 10.2 9 10.2M6 2.4V12"/></g></g></svg></div>
<div style="left:426px;top:465.1px;width:21.5px;height:7.6px;background:rgba(255,255,255,.75);border-radius:2px;box-shadow:0 0 1.5px 1px rgba(255,255,255,.5)"></div>
<div class="t" style="left:427px;top:465.6px;font-size:6px;line-height:7.2px;color:#6a6a6a;"><svg class="g" width="19.50" height="4.56" viewBox="0 0 30 10" preserveAspectRatio="none" style="vertical-align:-0.30px;stroke-width:0.75px"><g fill="none" stroke="currentColor" stroke-linecap="round" stroke-linejoin="round"><g transform="translate(0.60 0) scale(.88 1)"><path d="M3.5 0.3V3M6.5 0.3V3M1 1H9V4H1ZM0.5 2.5H9.5M0.5 4.8H9.5M2 5.8H8V7.3H2ZM3 8L3.5 9M7 8L6.5 9M0.5 9.5H9.5"/></g><g transform="translate(10.60 0) scale(.88 1)"><path d="M2 1V5Q2 8 0.5 9.8M5 1.5V8.5M8.5 0.5V9.8"/></g><g transform="translate(20.60 0) scale(.88 1)"><path transform="scale(.8333)" d="M6 0V2M0.5 2.4H11.5M2.2 4.8V10M2.2 4.8H9.8V9.6Q9.8 10.2 9 10.2M6 2.4V12"/></g></g></svg></div>
<div style="left:505.3px;top:488.9px;width:20.7px;height:7.6px;background:rgba(255,255,255,.75);border-radius:2px;box-shadow:0 0 1.5px 1px rgba(255,255,255,.5)"></div>
<div class="t" style="left:506.3px;top:489.4px;font-size:6px;line-height:7.2px;color:#6a6a6a;"><svg class="g" width="18.70" height="4.56" viewBox="0 0 30 10" preserveAspectRatio="none" style="vertical-align:-0.30px;stroke-width:0.75px"><g fill="none" stroke="currentColor" stroke-linecap="round" stroke-linejoin="round"><g transform="translate(0.60 0) scale(.88 1)"><path d="M3.5 0.3V3M6.5 0.3V3M1 1H9V4H1ZM0.5 2.5H9.5M0.5 4.8H9.5M2 5.8H8V7.3H2ZM3 8L3.5 9M7 8L6.5 9M0.5 9.5H9.5"/></g><g transform="translate(10.60 0) scale(.88 1)"><path d="M0.5 3H3.5M2 0.5V9.8M2 4L0.5 7M2 4.5L3.5 6M8.5 0.5L5 1.5M4.5 2.8H9.5M7 1.5V4M4.5 4Q6 5 7 4M5 5.5H9V9.5M5 5.5V9.8M6 7H8V8.5H6Z"/></g><g transform="translate(20.60 0) scale(.88 1)"><path transform="scale(.8333)" d="M6 0V2M0.5 2.4H11.5M2.2 4.8V10M2.2 4.8H9.8V9.6Q9.8 10.2 9 10.2M6 2.4V12"/></g></g></svg></div>
<div style="left:544.3px;top:157.6px;width:137.3px;height:107.8px;background:#fff;border:1px solid #333"><svg style="left:-1px;top:-1px" width="137.3" height="107.8"><polygon points="42.5,5.9 48.6,15.5 53.0,19.9 58.3,20.8 61.7,25.2 72.3,20.8 79.3,22.5 86.3,26.9 96.8,21.7 99.4,30.4 107.3,27.8 114.3,28.7 122.2,29.6 119.6,37.4 117.8,44.4 112.6,49.7 109.1,58.4 103.8,69.0 100.7,68.3 91.7,72.4 90.8,90.0 75.8,92.5 58.3,99.2 47.4,100.8 52.4,91.6 60.7,90.8 67.5,86.6 71.6,82.4 74.1,77.9 67.5,75.8 60.7,76.6 54.1,79.1 47.4,78.3 43.2,73.3 40.7,73.3 38.2,76.6 41.6,82.4 42.4,86.6 40.7,87.4 33.2,84.1 29.9,79.1 28.5,69.0 26.7,58.4 23.2,49.7 18.0,42.7 14.5,35.7 15.3,25.2 18.0,19.9 23.2,12.9 30.2,12.0 37.2,9.4" fill="#c8c8c8" stroke="#2a2a2a" stroke-width="0.7" stroke-linejoin="round"/><polyline points="26.7,28.4 31.7,26.4 39.7,26.4 45.7,29.4 47.7,35.4 46.7,42.4 43.7,46.4 37.7,48.4 30.7,47.4 26.7,43.4 24.7,36.4 26.7,28.4" fill="none" stroke="#2a2a2a" stroke-width="0.6"/><polyline points="31.7,26.4 29.7,18.4 25.0,11.4" fill="none" stroke="#2a2a2a" stroke-width="0.6"/><polyline points="39.7,26.4 41.7,18.4 42.3,7.4" fill="none" stroke="#2a2a2a" stroke-width="0.6"/><polyline points="45.7,29.4 52.7,23.4 55.7,21.2" fill="none" stroke="#2a2a2a" stroke-width="0.6"/><polyline points="47.7,35.4 55.7,35.4 60.7,32.4" fill="none" stroke="#2a2a2a" stroke-width="0.6"/><polyline points="46.7,42.4 53.7,44.4 57.7,49.4" fill="none" stroke="#2a2a2a" stroke-width="0.6"/><polyline points="43.7,46.4 45.7,54.4 51.7,56.4" fill="none" stroke="#2a2a2a" stroke-width="0.6"/><polyline points="37.7,48.4 37.7,56.4 33.7,62.4" fill="none" stroke="#2a2a2a" stroke-width="0.6"/><polyline points="30.7,47.4 25.7,52.0" fill="none" stroke="#2a2a2a" stroke-width="0.6"/><polyline points="26.7,43.4 18.7,41.4" fill="none" stroke="#2a2a2a" stroke-width="0.6"/><polyline points="24.7,36.4 14.5,35.4" fill="none" stroke="#2a2a2a" stroke-width="0.6"/><polyline points="26.7,28.4 15.7,25.0" fill="none" stroke="#2a2a2a" stroke-width="0.6"/><polyline points="29.7,18.4 35.7,16.4 41.7,18.4 49.7,16.4" fill="none" stroke="#2a2a2a" stroke-width="0.6"/><polyline points="18.7,18.4 23.7,22.4 26.7,28.4" fill="none" stroke="#2a2a2a" stroke-width="0.6"/><polyline points="15.7,30.4 21.7,32.4 24.7,36.4" fill="none" stroke="#2a2a2a" stroke-width="0.6"/><polyline points="52.7,23.4 55.7,30.4 55.7,35.4 53.7,44.4 57.7,51.4 55.7,58.4" fill="none" stroke="#2a2a2a" stroke-width="0.6"/><polyline points="46.7,18.4 49.7,15.4 52.7,18.4 49.7,21.4 46.7,18.4" fill="none" stroke="#2a2a2a" stroke-width="0.6"/><polyline points="53.7,29.4 57.7,25.4 61.7,29.4 57.7,33.4 53.7,29.4" fill="none" stroke="#2a2a2a" stroke-width="0.6"/><polyline points="19.7,45.4 22.7,41.4 24.7,45.4" fill="none" stroke="#2a2a2a" stroke-width="0.6"/><polyline points="27.7,52.4 31.7,49.4 34.7,53.4" fill="none" stroke="#2a2a2a" stroke-width="0.6"/><polyline points="28.0,56.4 35.7,54.4 45.7,54.4" fill="none" stroke="#2a2a2a" stroke-width="0.6"/><polyline points="28.7,62.4 35.7,60.4 45.7,62.4 52.7,64.4" fill="none" stroke="#2a2a2a" stroke-width="0.6"/><polyline points="28.7,68.4 35.7,67.4 43.7,68.4" fill="none" stroke="#2a2a2a" stroke-width="0.6"/><polyline points="28.2,73.4 35.7,73.4 42.7,74.4" fill="none" stroke="#2a2a2a" stroke-width="0.6"/><polyline points="34.7,54.4 35.7,80.4 36.7,86.4" fill="none" stroke="#2a2a2a" stroke-width="0.6"/><polyline points="41.7,62.4 43.7,76.4" fill="none" stroke="#2a2a2a" stroke-width="0.6"/><polyline points="55.7,58.4 52.7,64.4 55.7,72.4 59.7,78.4" fill="none" stroke="#2a2a2a" stroke-width="0.6"/><polyline points="86.3,26.9 85.4,36.6 88.0,44.4 86.3,48.8" fill="none" stroke="#2a2a2a" stroke-width="0.6"/><polyline points="85.4,36.6 93.3,32.2 99.4,30.4" fill="none" stroke="#2a2a2a" stroke-width="0.6"/><polyline points="106.4,30.4 103.7,39.2 107.3,46.2 110.7,49.7" fill="none" stroke="#2a2a2a" stroke-width="0.6"/><polyline points="88.0,44.4 96.7,46.2 103.7,39.2" fill="none" stroke="#2a2a2a" stroke-width="0.6"/><polyline points="96.7,46.2 100.3,50.6 110.7,49.7" fill="none" stroke="#2a2a2a" stroke-width="0.6"/><polyline points="100.3,50.6 102.9,56.7 95.0,60.2 86.3,60.2" fill="none" stroke="#2a2a2a" stroke-width="0.6"/><polyline points="74.1,77.9 75.8,92.5" fill="none" stroke="#2a2a2a" stroke-width="0.6"/><polyline points="89.7,73.4 83.7,74.4 74.1,77.9" fill="none" stroke="#2a2a2a" stroke-width="0.6"/><polyline points="56.5,49.7 61.7,48.8 72.3,49.7 81.0,53.2 82.7,56.7 81.9,63.7 79.3,65.4 72.3,64.6 63.5,63.7 58.3,65.4 56.5,70.7 58.3,72.4" fill="none" stroke="#2a2a2a" stroke-width="0.6"/><polyline points="58.3,65.4 60.0,69.0 65.3,70.7 68.7,67.2 72.3,64.6" fill="none" stroke="#2a2a2a" stroke-width="0.6"/><polyline points="68.7,67.2 75.7,69.0 84.5,67.2" fill="none" stroke="#2a2a2a" stroke-width="0.6"/><polyline points="65.3,70.7 63.5,74.2" fill="none" stroke="#2a2a2a" stroke-width="0.6"/><polyline points="81.9,63.7 87.7,64.4 93.3,71.6" fill="none" stroke="#2a2a2a" stroke-width="0.6"/><circle cx="48.7" cy="84.9" r=".9" fill="#222"/><circle cx="45.2" cy="89.9" r=".8" fill="#222"/><rect x="53.4" y="44.4" width="32.5" height="29.8" fill="rgba(210,60,60,.45)"/></svg></div>
<div style="left:537px;top:283px;width:134px;height:184px;border:4px solid #ea2a1c"></div>
<div style="left:544px;top:290px;width:116.5px;height:171.5px;border:1px solid #a8b8d8"></div>
<svg style="left:544px;top:290px;" width="117" height="110" viewBox="0 0 117 110"><rect x="0.5" y="0.5" width="1.2" height="97.9" fill="#222"/><rect x="29.3" y="0.5" width="1.2" height="97.9" fill="#222"/><rect x="57.8" y="0.5" width="1.2" height="97.9" fill="#222"/><rect x="86.0" y="0.5" width="1.2" height="97.9" fill="#222"/><rect x="115.0" y="0.5" width="1.2" height="97.9" fill="#222"/><rect x="0.5" y="11.0" width="115.7" height="1.2" fill="#222"/><rect x="0.5" y="21.9" width="115.7" height="1.2" fill="#222"/><rect x="0.5" y="32.8" width="115.7" height="1.2" fill="#222"/><rect x="0.5" y="43.8" width="115.7" height="1.2" fill="#222"/><rect x="0.5" y="54.7" width="115.7" height="1.2" fill="#222"/><rect x="0.5" y="65.6" width="115.7" height="1.2" fill="#222"/><rect x="0.5" y="76.5" width="115.7" height="1.2" fill="#222"/><rect x="0.5" y="87.4" width="115.7" height="1.2" fill="#222"/><rect x="0.5" y="98.4" width="115.7" height="1.2" fill="#222"/></svg>
<div style="left:545.7px;top:291px;width:27.6px;height:10px;overflow:hidden"><div class="t" style="left:1px;top:0.8px;font-size:7px;line-height:8.4px;color:#333;">03_001</div></div>
<div style="left:574.5px;top:291px;width:27.3px;height:10px;overflow:hidden"><div class="t" style="left:2px;top:0.8px;font-size:7px;line-height:8.4px;color:#333;">N03_002</div></div>
<div style="left:603px;top:291px;width:27px;height:10px;overflow:hidden"><div class="t" style="left:2px;top:0.8px;font-size:7px;line-height:8.4px;color:#333;">N03_004</div></div>
<div style="left:631.2px;top:291px;width:27.8px;height:10px;overflow:hidden"><div class="t" style="left:2px;top:0.8px;font-size:7px;line-height:8.4px;color:#333;">N03_00</div></div>
<div class="t" style="left:547.5px;top:302.7px;font-size:7px;line-height:8.4px;color:#333;"><svg class="g" width="20.00" height="5.32" viewBox="0 0 30 10" preserveAspectRatio="none" style="vertical-align:-0.35px;stroke-width:0.75px"><g fill="none" stroke="currentColor" stroke-linecap="round" stroke-linejoin="round"><g transform="translate(0.60 0) scale(.88 1)"><path d="M8.5 0.3L1.5 1.5M2 2L2.5 3M5 2V3M8 2L7.5 3M0.5 4V3.5H9.5V4M3 4.5Q3 7 1.5 8M2 6H8M3 7Q6 9 9 9.8M7.5 7Q5 9.5 1.5 9.8"/></g><g transform="translate(10.60 0) scale(.88 1)"><path d="M2 0.5L0.8 3M1 2.5H5M0.5 5H5M3 2.5V5Q3 8 0.5 9.8M3 6L5 8.5M6 1.5H9.5V9H6Z"/></g><g transform="translate(20.60 0) scale(.88 1)"><path d="M1.5 0.5H6.5V5H1.5ZM1.5 2H6.5M1.5 3.5H6.5M0.5 0.5V6.5H9.5M5 6.5V9.8M3 7.5L1 9.5M7 7.5L9 9.5"/></g></g></svg></div>
<div class="t" style="left:576.3px;top:303.4px;font-size:7px;line-height:8.4px;color:#333;">NULL</div>
<div class="t" style="left:604.8px;top:302.7px;font-size:7px;line-height:8.4px;color:#333;"><svg class="g" width="20.00" height="5.32" viewBox="0 0 30 10" preserveAspectRatio="none" style="vertical-align:-0.35px;stroke-width:0.75px"><g fill="none" stroke="currentColor" stroke-linecap="round" stroke-linejoin="round"><g transform="translate(0.60 0) scale(.88 1)"><path d="M0.5 1H9.5M1 3H9V9.5H1ZM3.8 1V5.5Q3.8 6.5 1.5 7.5M6.2 1V6Q6.2 7 9 7"/></g><g transform="translate(10.60 0) scale(.88 1)"><path d="M1 1H9V3.5H1M1 1V6Q1 8.5 0 9.8M3 4.5L8 4M3 6.3H8.5M2.5 8.3H9M5 3.5V9Q5 9.8 9.3 9.6"/></g><g transform="translate(20.60 0) scale(.88 1)"><path transform="scale(.8333)" d="M6 0V2M0.5 2.4H11.5M2.2 4.8V10M2.2 4.8H9.8V9.6Q9.8 10.2 9 10.2M6 2.4V12"/></g></g></svg></div>
<div class="t" style="left:633px;top:303.4px;font-size:7px;line-height:8.4px;color:#333;">23213</div>
<div class="t" style="left:547.5px;top:313.62px;font-size:7px;line-height:8.4px;color:#333;"><svg class="g" width="20.00" height="5.32" viewBox="0 0 30 10" preserveAspectRatio="none" style="vertical-align:-0.35px;stroke-width:0.75px"><g fill="none" stroke="currentColor" stroke-linecap="round" stroke-linejoin="round"><g transform="translate(0.60 0) scale(.88 1)"><path d="M8.5 0.3L1.5 1.5M2 2L2.5 3M5 2V3M8 2L7.5 3M0.5 4V3.5H9.5V4M3 4.5Q3 7 1.5 8M2 6H8M3 7Q6 9 9 9.8M7.5 7Q5 9.5 1.5 9.8"/></g><g transform="translate(10.60 0) scale(.88 1)"><path d="M2 0.5L0.8 3M1 2.5H5M0.5 5H5M3 2.5V5Q3 8 0.5 9.8M3 6L5 8.5M6 1.5H9.5V9H6Z"/></g><g transform="translate(20.60 0) scale(.88 1)"><path d="M1.5 0.5H6.5V5H1.5ZM1.5 2H6.5M1.5 3.5H6.5M0.5 0.5V6.5H9.5M5 6.5V9.8M3 7.5L1 9.5M7 7.5L9 9.5"/></g></g></svg></div>
<div class="t" style="left:576.3px;top:314.32px;font-size:7px;line-height:8.4px;color:#333;">NULL</div>
<div class="t" style="left:604.8px;top:313.62px;font-size:7px;line-height:8.4px;color:#333;"><svg class="g" width="20.00" height="5.32" viewBox="0 0 30 10" preserveAspectRatio="none" style="vertical-align:-0.35px;stroke-width:0.75px"><g fill="none" stroke="currentColor" stroke-linecap="round" stroke-linejoin="round"><g transform="translate(0.60 0) scale(.88 1)"><path d="M5 0.3V1.5M0.8 3V1.5H9.2V3M4 3.5Q3 6 2 9M0.5 5.8H9.5M7 5.8Q5 9 1 9.8M3 7L9 9.8"/></g><g transform="translate(10.60 0) scale(.88 1)"><path d="M0.5 4H3.5M2 1.5V9M0.5 9.5L3.5 8M4 2.5H9.5M4 2.5V9.5M4 5H6.5V8.5M7.5 0.5Q7.5 6 9.5 9.5M9.5 5.5L6.5 9.5M8.5 0.8L9.3 1.5"/></g><g transform="translate(20.60 0) scale(.88 1)"><path transform="scale(.8333)" d="M6 0V2M0.5 2.4H11.5M2.2 4.8V10M2.2 4.8H9.8V9.6Q9.8 10.2 9 10.2M6 2.4V12"/></g></g></svg></div>
<div class="t" style="left:633px;top:314.32px;font-size:7px;line-height:8.4px;color:#333;">23212</div>
<div class="t" style="left:547.5px;top:324.54px;font-size:7px;line-height:8.4px;color:#333;"><svg class="g" width="20.00" height="5.32" viewBox="0 0 30 10" preserveAspectRatio="none" style="vertical-align:-0.35px;stroke-width:0.75px"><g fill="none" stroke="currentColor" stroke-linecap="round" stroke-linejoin="round"><g transform="translate(0.60 0) scale(.88 1)"><path d="M8.5 0.3L1.5 1.5M2 2L2.5 3M5 2V3M8 2L7.5 3M0.5 4V3.5H9.5V4M3 4.5Q3 7 1.5 8M2 6H8M3 7Q6 9 9 9.8M7.5 7Q5 9.5 1.5 9.8"/></g><g transform="translate(10.60 0) scale(.88 1)"><path d="M2 0.5L0.8 3M1 2.5H5M0.5 5H5M3 2.5V5Q3 8 0.5 9.8M3 6L5 8.5M6 1.5H9.5V9H6Z"/></g><g transform="translate(20.60 0) scale(.88 1)"><path d="M1.5 0.5H6.5V5H1.5ZM1.5 2H6.5M1.5 3.5H6.5M0.5 0.5V6.5H9.5M5 6.5V9.8M3 7.5L1 9.5M7 7.5L9 9.5"/></g></g></svg></div>
<div class="t" style="left:576.3px;top:325.24px;font-size:7px;line-height:8.4px;color:#333;">NULL</div>
<div class="t" style="left:604.8px;top:324.54px;font-size:7px;line-height:8.4px;color:#333;"><svg class="g" width="20.00" height="5.32" viewBox="0 0 30 10" preserveAspectRatio="none" style="vertical-align:-0.35px;stroke-width:0.75px"><g fill="none" stroke="currentColor" stroke-linecap="round" stroke-linejoin="round"><g transform="translate(0.60 0) scale(.88 1)"><path d="M3.5 0.3V3M6.5 0.3V3M1 1H9V4H1ZM0.5 2.5H9.5M0.5 4.8H9.5M2 5.8H8V7.3H2ZM3 8L3.5 9M7 8L6.5 9M0.5 9.5H9.5"/></g><g transform="translate(10.60 0) scale(.88 1)"><path d="M1 1H9V9.5H1ZM1 5.2H9M5 1V9.5"/></g><g transform="translate(20.60 0) scale(.88 1)"><path transform="scale(.8333)" d="M6 0V2M0.5 2.4H11.5M2.2 4.8V10M2.2 4.8H9.8V9.6Q9.8 10.2 9 10.2M6 2.4V12"/></g></g></svg></div>
<div class="t" style="left:633px;top:325.24px;font-size:7px;line-height:8.4px;color:#333;">23211</div>
<div class="t" style="left:547.5px;top:335.46px;font-size:7px;line-height:8.4px;color:#333;"><svg class="g" width="20.00" height="5.32" viewBox="0 0 30 10" preserveAspectRatio="none" style="vertical-align:-0.35px;stroke-width:0.75px"><g fill="none" stroke="currentColor" stroke-linecap="round" stroke-linejoin="round"><g transform="translate(0.60 0) scale(.88 1)"><path d="M8.5 0.3L1.5 1.5M2 2L2.5 3M5 2V3M8 2L7.5 3M0.5 4V3.5H9.5V4M3 4.5Q3 7 1.5 8M2 6H8M3 7Q6 9 9 9.8M7.5 7Q5 9.5 1.5 9.8"/></g><g transform="translate(10.60 0) scale(.88 1)"><path d="M2 0.5L0.8 3M1 2.5H5M0.5 5H5M3 2.5V5Q3 8 0.5 9.8M3 6L5 8.5M6 1.5H9.5V9H6Z"/></g><g transform="translate(20.60 0) scale(.88 1)"><path d="M1.5 0.5H6.5V5H1.5ZM1.5 2H6.5M1.5 3.5H6.5M0.5 0.5V6.5H9.5M5 6.5V9.8M3 7.5L1 9.5M7 7.5L9 9.5"/></g></g></svg></div>
<div class="t" style="left:576.3px;top:336.16px;font-size:7px;line-height:8.4px;color:#333;">NULL</div>
<div class="t" style="left:604.8px;top:335.46px;font-size:7px;line-height:8.4px;color:#333;"><svg class="g" width="20.00" height="5.32" viewBox="0 0 30 10" preserveAspectRatio="none" style="vertical-align:-0.35px;stroke-width:0.75px"><g fill="none" stroke="currentColor" stroke-linecap="round" stroke-linejoin="round"><g transform="translate(0.60 0) scale(.88 1)"><path transform="scale(.8333)" d="M0.6 0.6V11.6M0.6 0.6H11.4V10.8Q11.4 11.6 10.4 11.6H9.5M3.2 2.2L4 3.6M8.8 2.2L8 3.6M2.6 4.2H9.4M6 4.2V9.4M3.2 6.2V9.4H8.8V6.2"/></g><g transform="translate(10.60 0) scale(.88 1)"><path transform="scale(.8333)" d="M2 3V9.5M0.5 5V9.5H3.6V5M4.6 3H11.6M8 0.5C8 3 7 5 4.8 6.2M8.3 3.2L11.6 6M4.6 7.2H11.8M10.6 7.2V11Q10.6 11.8 9.6 11.8M6 8.8H8.6V10.6H6Z"/></g><g transform="translate(20.60 0) scale(.88 1)"><path transform="scale(.8333)" d="M6 0V2M0.5 2.4H11.5M2.2 4.8V10M2.2 4.8H9.8V9.6Q9.8 10.2 9 10.2M6 2.4V12"/></g></g></svg></div>
<div class="t" style="left:633px;top:336.16px;font-size:7px;line-height:8.4px;color:#333;">23202</div>
<div class="t" style="left:547.5px;top:346.38px;font-size:7px;line-height:8.4px;color:#333;"><svg class="g" width="20.00" height="5.32" viewBox="0 0 30 10" preserveAspectRatio="none" style="vertical-align:-0.35px;stroke-width:0.75px"><g fill="none" stroke="currentColor" stroke-linecap="round" stroke-linejoin="round"><g transform="translate(0.60 0) scale(.88 1)"><path d="M8.5 0.3L1.5 1.5M2 2L2.5 3M5 2V3M8 2L7.5 3M0.5 4V3.5H9.5V4M3 4.5Q3 7 1.5 8M2 6H8M3 7Q6 9 9 9.8M7.5 7Q5 9.5 1.5 9.8"/></g><g transform="translate(10.60 0) scale(.88 1)"><path d="M2 0.5L0.8 3M1 2.5H5M0.5 5H5M3 2.5V5Q3 8 0.5 9.8M3 6L5 8.5M6 1.5H9.5V9H6Z"/></g><g transform="translate(20.60 0) scale(.88 1)"><path d="M1.5 0.5H6.5V5H1.5ZM1.5 2H6.5M1.5 3.5H6.5M0.5 0.5V6.5H9.5M5 6.5V9.8M3 7.5L1 9.5M7 7.5L9 9.5"/></g></g></svg></div>
<div class="t" style="left:576.3px;top:347.08px;font-size:7px;line-height:8.4px;color:#333;">NULL</div>
<div class="t" style="left:604.8px;top:346.38px;font-size:7px;line-height:8.4px;color:#333;"><svg class="g" width="20.00" height="5.32" viewBox="0 0 30 10" preserveAspectRatio="none" style="vertical-align:-0.35px;stroke-width:0.75px"><g fill="none" stroke="currentColor" stroke-linecap="round" stroke-linejoin="round"><g transform="translate(0.60 0) scale(.88 1)"><path d="M0.5 1.5H9.5M3 0.3V2.5M7 0.3V2.5M0.5 3.5L1.5 4.5M0.5 6L1.5 6.5M1 9.5L2 7.5M2.5 4H9.5M3 5.5H9V9.8M3 5.5V9.8M3 7.5H9M6 3V9.8M8 2.5L8.8 3.5"/></g><g transform="translate(10.60 0) scale(.88 1)"><path d="M0.5 1.5H5.5M3 0.3V3M0.5 3.5H5.5M3 3.5L0.5 6M1.5 5.5H5V8.5H1.5ZM6.5 1V9.8M6.5 1H9Q9.5 1 8 4Q10 5.5 9 7.5Q8 8 7 7.5"/></g><g transform="translate(20.60 0) scale(.88 1)"><path transform="scale(.8333)" d="M6 0V2M0.5 2.4H11.5M2.2 4.8V10M2.2 4.8H9.8V9.6Q9.8 10.2 9 10.2M6 2.4V12"/></g></g></svg></div>
<div class="t" style="left:633px;top:347.08px;font-size:7px;line-height:8.4px;color:#333;">23214</div>
<div class="t" style="left:547.5px;top:357.3px;font-size:7px;line-height:8.4px;color:#333;"><svg class="g" width="20.00" height="5.32" viewBox="0 0 30 10" preserveAspectRatio="none" style="vertical-align:-0.35px;stroke-width:0.75px"><g fill="none" stroke="currentColor" stroke-linecap="round" stroke-linejoin="round"><g transform="translate(0.60 0) scale(.88 1)"><path d="M8.5 0.3L1.5 1.5M2 2L2.5 3M5 2V3M8 2L7.5 3M0.5 4V3.5H9.5V4M3 4.5Q3 7 1.5 8M2 6H8M3 7Q6 9 9 9.8M7.5 7Q5 9.5 1.5 9.8"/></g><g transform="translate(10.60 0) scale(.88 1)"><path d="M2 0.5L0.8 3M1 2.5H5M0.5 5H5M3 2.5V5Q3 8 0.5 9.8M3 6L5 8.5M6 1.5H9.5V9H6Z"/></g><g transform="translate(20.60 0) scale(.88 1)"><path d="M1.5 0.5H6.5V5H1.5ZM1.5 2H6.5M1.5 3.5H6.5M0.5 0.5V6.5H9.5M5 6.5V9.8M3 7.5L1 9.5M7 7.5L9 9.5"/></g></g></svg></div>
<div class="t" style="left:576.3px;top:358px;font-size:7px;line-height:8.4px;color:#333;">NULL</div>
<div class="t" style="left:604.8px;top:357.3px;font-size:7px;line-height:8.4px;color:#333;"><svg class="g" width="20.00" height="5.32" viewBox="0 0 30 10" preserveAspectRatio="none" style="vertical-align:-0.35px;stroke-width:0.75px"><g fill="none" stroke="currentColor" stroke-linecap="round" stroke-linejoin="round"><g transform="translate(0.60 0) scale(.88 1)"><path d="M3.5 0.3V3M6.5 0.3V3M1 1H9V4H1ZM0.5 2.5H9.5M0.5 4.8H9.5M2 5.8H8V7.3H2ZM3 8L3.5 9M7 8L6.5 9M0.5 9.5H9.5"/></g><g transform="translate(10.60 0) scale(.88 1)"><path d="M2 1V5Q2 8 0.5 9.8M5 1.5V8.5M8.5 0.5V9.8"/></g><g transform="translate(20.60 0) scale(.88 1)"><path transform="scale(.8333)" d="M6 0V2M0.5 2.4H11.5M2.2 4.8V10M2.2 4.8H9.8V9.6Q9.8 10.2 9 10.2M6 2.4V12"/></g></g></svg></div>
<div class="t" style="left:633px;top:358px;font-size:7px;line-height:8.4px;color:#333;">23207</div>
<div class="t" style="left:547.5px;top:368.22px;font-size:7px;line-height:8.4px;color:#333;"><svg class="g" width="20.00" height="5.32" viewBox="0 0 30 10" preserveAspectRatio="none" style="vertical-align:-0.35px;stroke-width:0.75px"><g fill="none" stroke="currentColor" stroke-linecap="round" stroke-linejoin="round"><g transform="translate(0.60 0) scale(.88 1)"><path d="M8.5 0.3L1.5 1.5M2 2L2.5 3M5 2V3M8 2L7.5 3M0.5 4V3.5H9.5V4M3 4.5Q3 7 1.5 8M2 6H8M3 7Q6 9 9 9.8M7.5 7Q5 9.5 1.5 9.8"/></g><g transform="translate(10.60 0) scale(.88 1)"><path d="M2 0.5L0.8 3M1 2.5H5M0.5 5H5M3 2.5V5Q3 8 0.5 9.8M3 6L5 8.5M6 1.5H9.5V9H6Z"/></g><g transform="translate(20.60 0) scale(.88 1)"><path d="M1.5 0.5H6.5V5H1.5ZM1.5 2H6.5M1.5 3.5H6.5M0.5 0.5V6.5H9.5M5 6.5V9.8M3 7.5L1 9.5M7 7.5L9 9.5"/></g></g></svg></div>
<div class="t" style="left:576.3px;top:368.92px;font-size:7px;line-height:8.4px;color:#333;">NULL</div>
<div class="t" style="left:604.8px;top:368.22px;font-size:7px;line-height:8.4px;color:#333;"><svg class="g" width="20.00" height="5.32" viewBox="0 0 30 10" preserveAspectRatio="none" style="vertical-align:-0.35px;stroke-width:0.75px"><g fill="none" stroke="currentColor" stroke-linecap="round" stroke-linejoin="round"><g transform="translate(0.60 0) scale(.88 1)"><path d="M2.5 0.3V1.2M0.5 1.5H4.5M1 2.5L1.5 3.5M4 2.5L3.5 3.5M0.5 4H4.5M2.5 4V9.8M0.5 6H4.5M2 7L0.5 8.5M3 7L4.5 8M9 0.5L6 1.5M6 1.5V6Q6 8.5 5 9.8M6 4.5H9.5M8 4.5V9.8"/></g><g transform="translate(10.60 0) scale(.88 1)"><path d="M0.5 4H3.5M2 1.5V9M0.5 9.5L3.5 8M4 2.5H9.5M4 2.5V9.5M4 5H6.5V8.5M7.5 0.5Q7.5 6 9.5 9.5M9.5 5.5L6.5 9.5M8.5 0.8L9.3 1.5"/></g><g transform="translate(20.60 0) scale(.88 1)"><path transform="scale(.8333)" d="M6 0V2M0.5 2.4H11.5M2.2 4.8V10M2.2 4.8H9.8V9.6Q9.8 10.2 9 10.2M6 2.4V12"/></g></g></svg></div>
<div class="t" style="left:633px;top:368.92px;font-size:7px;line-height:8.4px;color:#333;">23221</div>
<div class="t" style="left:547.5px;top:379.14px;font-size:7px;line-height:8.4px;color:#333;"><svg class="g" width="20.00" height="5.32" viewBox="0 0 30 10" preserveAspectRatio="none" style="vertical-align:-0.35px;stroke-width:0.75px"><g fill="none" stroke="currentColor" stroke-linecap="round" stroke-linejoin="round"><g transform="translate(0.60 0) scale(.88 1)"><path d="M8.5 0.3L1.5 1.5M2 2L2.5 3M5 2V3M8 2L7.5 3M0.5 4V3.5H9.5V4M3 4.5Q3 7 1.5 8M2 6H8M3 7Q6 9 9 9.8M7.5 7Q5 9.5 1.5 9.8"/></g><g transform="translate(10.60 0) scale(.88 1)"><path d="M2 0.5L0.8 3M1 2.5H5M0.5 5H5M3 2.5V5Q3 8 0.5 9.8M3 6L5 8.5M6 1.5H9.5V9H6Z"/></g><g transform="translate(20.60 0) scale(.88 1)"><path d="M1.5 0.5H6.5V5H1.5ZM1.5 2H6.5M1.5 3.5H6.5M0.5 0.5V6.5H9.5M5 6.5V9.8M3 7.5L1 9.5M7 7.5L9 9.5"/></g></g></svg></div>
<div class="t" style="left:576.3px;top:379.14px;font-size:7px;line-height:8.4px;color:#333;"><svg class="g" width="20.00" height="5.32" viewBox="0 0 30 10" preserveAspectRatio="none" style="vertical-align:-0.35px;stroke-width:0.75px"><g fill="none" stroke="currentColor" stroke-linecap="round" stroke-linejoin="round"><g transform="translate(0.60 0) scale(.88 1)"><path d="M2.5 0.3V1.2M0.5 1V2.5H4.5V1M1.5 3Q1 5 0.5 5.5M1.5 3.5H3.5Q2.5 5.5 1 6.5M1.5 4.5L4 6M1 7H4V9.8H1ZM5 1H9.5M7.2 1L6.5 2.5M5.5 2.5H9V7.5H5.5ZM5.5 4.2H9M5.5 5.9H9M6.5 7.5L5 9.8M8 7.5L9.5 9.8"/></g><g transform="translate(10.60 0) scale(.88 1)"><path d="M1 1H9V9.5H1ZM1 5.2H9M5 1V9.5"/></g><g transform="translate(20.60 0) scale(.88 1)"><path d="M0.5 1.5H5.5M3 0.3V3M0.5 3.5H5.5M3 3.5L0.5 6M1.5 5.5H5V8.5H1.5ZM6.5 1V9.8M6.5 1H9Q9.5 1 8 4Q10 5.5 9 7.5Q8 8 7 7.5"/></g></g></svg></div>
<div class="t" style="left:604.8px;top:379.14px;font-size:7px;line-height:8.4px;color:#333;"><svg class="g" width="20.00" height="5.32" viewBox="0 0 30 10" preserveAspectRatio="none" style="vertical-align:-0.35px;stroke-width:0.75px"><g fill="none" stroke="currentColor" stroke-linecap="round" stroke-linejoin="round"><g transform="translate(0.60 0) scale(.88 1)"><path d="M5 0.3V4M1.5 1.5H8.5M0.5 3.5H9.5M3 4.5L3.8 5.5M7 4.5L6.2 5.5M0.5 6.5H9.5M1.5 8.3H8.5M5 6.5V9.8"/></g><g transform="translate(10.60 0) scale(.88 1)"><path d="M1 1H9V9.5H1ZM1 5.2H9M5 1V9.5"/></g><g transform="translate(20.60 0) scale(.88 1)"><path d="M0.5 1.5H5V8H0.5ZM0.5 4.7H5M2.8 1.5V8M5.5 2H9.5M8 2V9Q8 9.8 7 9.8"/></g></g></svg></div>
<div class="t" style="left:633px;top:379.84px;font-size:7px;line-height:8.4px;color:#333;">23501</div>
<div style="left:544.5px;top:290.5px;width:7px;height:7px;background:rgba(255,255,255,.7);border:1px solid #98acd0"></div>
<div style="left:598.5px;top:290.5px;width:7px;height:7px;background:rgba(255,255,255,.7);border:1px solid #98acd0"></div>
<div style="left:653px;top:290.5px;width:7px;height:7px;background:rgba(255,255,255,.7);border:1px solid #98acd0"></div>
<div style="left:544.5px;top:372.5px;width:7px;height:7px;background:rgba(255,255,255,.7);border:1px solid #98acd0"></div>
<div style="left:653px;top:372.5px;width:7px;height:7px;background:rgba(255,255,255,.7);border:1px solid #98acd0"></div>
<div style="left:544.5px;top:454.5px;width:7px;height:7px;background:rgba(255,255,255,.7);border:1px solid #98acd0"></div>
<div style="left:598.5px;top:454.5px;width:7px;height:7px;background:rgba(255,255,255,.7);border:1px solid #98acd0"></div>
<div style="left:653px;top:454.5px;width:7px;height:7px;background:rgba(255,255,255,.7);border:1px solid #98acd0"></div>
<svg style="left:776.5px;top:300px" width="2.5" height="60"><rect x="0" y="0" width="1" height="1" fill="#b4b4b4"/><rect x="0" y="2" width="1" height="1" fill="#b4b4b4"/><rect x="0" y="4" width="1" height="1" fill="#b4b4b4"/><rect x="0" y="6" width="1" height="1" fill="#b4b4b4"/><rect x="0" y="8" width="1" height="1" fill="#b4b4b4"/><rect x="0" y="10" width="1" height="1" fill="#b4b4b4"/><rect x="0" y="12" width="1" height="1" fill="#b4b4b4"/><rect x="0" y="14" width="1" height="1" fill="#b4b4b4"/><rect x="0" y="16" width="1" height="1" fill="#b4b4b4"/><rect x="0" y="18" width="1" height="1" fill="#b4b4b4"/><rect x="0" y="20" width="1" height="1" fill="#b4b4b4"/><rect x="0" y="22" width="1" height="1" fill="#b4b4b4"/><rect x="0" y="24" width="1" height="1" fill="#b4b4b4"/><rect x="0" y="26" width="1" height="1" fill="#b4b4b4"/><rect x="0" y="28" width="1" height="1" fill="#b4b4b4"/><rect x="0" y="30" width="1" height="1" fill="#b4b4b4"/><rect x="0" y="32" width="1" height="1" fill="#b4b4b4"/><rect x="0" y="34" width="1" height="1" fill="#b4b4b4"/><rect x="0" y="36" width="1" height="1" fill="#b4b4b4"/><rect x="0" y="38" width="1" height="1" fill="#b4b4b4"/><rect x="0" y="40" width="1" height="1" fill="#b4b4b4"/><rect x="0" y="42" width="1" height="1" fill="#b4b4b4"/><rect x="0" y="44" width="1" height="1" fill="#b4b4b4"/><rect x="0" y="46" width="1" height="1" fill="#b4b4b4"/><rect x="0" y="48" width="1" height="1" fill="#b4b4b4"/><rect x="0" y="50" width="1" height="1" fill="#b4b4b4"/><rect x="0" y="52" width="1" height="1" fill="#b4b4b4"/><rect x="0" y="54" width="1" height="1" fill="#b4b4b4"/><rect x="0" y="56" width="1" height="1" fill="#b4b4b4"/><rect x="0" y="58" width="1" height="1" fill="#b4b4b4"/></svg>
<div style="left:779px;top:105px;width:295px;height:1px;background:#c6c6c6"></div>
<div style="left:822.7px;top:91.9px;width:50px;height:13.3px;background:linear-gradient(#e4e4e4,#d8d8d8);border:1px solid #c6c6c6;border-bottom:none;border-radius:2px 2px 0 0"></div>
<div class="t" style="left:831.45px;top:93.35px;font-size:9.5px;line-height:11.4px;color:#333;"><svg class="g" width="32.50" height="7.22" viewBox="0 0 40 10" preserveAspectRatio="none" style="vertical-align:-0.48px;stroke-width:0.90px"><g fill="none" stroke="currentColor" stroke-linecap="round" stroke-linejoin="round"><g transform="translate(0.60 0) scale(.88 1)"><path d="M2.5 0.5L0.8 3.5L3.5 3M2.5 3.5L0.5 6.5H4M2 6.5V9.8M0.8 8L0.5 9.5M3.5 7.5L4 9M6 0.3V1M4.5 1.3H9.5V3.5H4.5M4.5 1.3V6Q4.5 8.5 3.8 9.8M5.5 4.5H9.5V9.8M5.5 4.5V9.8M5.5 6.8H9.5M6.8 4.5V9.8M8.2 4.5V9.8"/></g><g transform="translate(10.60 0) scale(.88 1)"><path d="M2.5 0.5L0.8 3M2 1.5V5M2 1.5H9M5 1.5V5M2 2.7H8.5M2 3.8H8.5M2 5H9M0.5 6.3H9.5M5 5V9.8M4.5 6.5L0.8 9.3M5.5 6.5L9.2 9.3"/></g><g transform="translate(20.60 0) scale(.88 1)"><path d="M1 1H9V3H1M1 1V6Q1 8.5 0 9.8M3 4.5L2 6.5M2.5 5.5V9.8M4.5 4H9M5 5.5H8.5V7.5H5ZM4.5 8.5L9.5 9.8"/></g><g transform="translate(30.60 0) scale(.88 1)"><path d="M1 1H9.5M1 1V6Q1 8.5 0 9.8M3.8 2.5V6M2.2 3.5H5.5M3.8 3.5L2 6M3.8 3.5L5.5 5M7.5 2.5V6M6 3.5H9.5M7.5 3.5L6 6M7.5 3.5L9.5 5M5.5 6.5V9.3M5.5 7.8H8M2.5 8V9.3M1.5 9.5H9.5"/></g></g></svg></div>
<div style="left:779.9px;top:90.8px;width:42.2px;height:15.4px;background:#f7f7f7;border:1px solid #c6c6c6;border-bottom:none;border-radius:2px 2px 0 0"></div>
<div class="t" style="left:788.65px;top:92.8px;font-size:9.5px;line-height:11.4px;color:#333;"><svg class="g" width="24.70" height="7.22" viewBox="0 0 40 10" preserveAspectRatio="none" style="vertical-align:-0.48px;stroke-width:0.90px"><g fill="none" stroke="currentColor" stroke-linecap="round" stroke-linejoin="round"><g transform="translate(0.60 0) scale(.88 1)"><path d="M1 1.5H9Q8.5 4 6 5.5M5.3 4V6Q5 8.5 2.5 9.5"/></g><g transform="translate(10.60 0) scale(.88 1)"><path d="M8.5 1Q6 5 1.5 7M5.5 4.5V9.8"/></g><g transform="translate(20.60 0) scale(.88 1)"><path d="M2 1H8M1 4H9M5 4V6Q5 8.5 2.5 9.5"/></g><g transform="translate(30.60 0) scale(.88 1)"><path d="M4.5 1Q3.5 5 1.5 8.5Q5 8.3 8.5 7.5M7 5.5L9 9"/></g></g></svg></div>
<div class="t" style="left:782.7px;top:108.4px;font-size:9.5px;line-height:11.4px;color:#333;"><svg class="g" width="24.50" height="7.22" viewBox="0 0 40 10" preserveAspectRatio="none" style="vertical-align:-0.48px;stroke-width:0.90px"><g fill="none" stroke="currentColor" stroke-linecap="round" stroke-linejoin="round"><g transform="translate(0.60 0) scale(.88 1)"><path d="M1 1.5H9Q8.5 4 6 5.5M5.3 4V6Q5 8.5 2.5 9.5"/></g><g transform="translate(10.60 0) scale(.88 1)"><path d="M8.5 1Q6 5 1.5 7M5.5 4.5V9.8"/></g><g transform="translate(20.60 0) scale(.88 1)"><path d="M2 1H8M1 4H9M5 4V6Q5 8.5 2.5 9.5"/></g><g transform="translate(30.60 0) scale(.88 1)"><path d="M4.5 1Q3.5 5 1.5 8.5Q5 8.3 8.5 7.5M7 5.5L9 9"/></g></g></svg></div>
<div style="left:1054.4px;top:110px;width:8px;height:8px;border:1px solid #888;border-radius:1.5px;background:#e8e8e8"></div>
<svg style="left:1056px;top:111.8px;" width="5" height="5" viewBox="0 0 5 5"><rect x=".5" y="1.5" width="3" height="3" fill="none" stroke="#777" stroke-width=".8"/><path d="M2 .5h2.5V3" fill="none" stroke="#777" stroke-width=".8"/></svg>
<div style="left:1064.8px;top:110px;width:8px;height:8px;border:1px solid #888;border-radius:1.5px;background:#e8e8e8"></div>
<svg style="left:1066.3px;top:111.5px;" width="5" height="5" viewBox="0 0 5 5"><path d="M.5 .5l4 4M4.5 .5l-4 4" stroke="#222" stroke-width="1.3"/></svg>
<div style="left:779.9px;top:120.7px;width:293.6px;height:182.5px;background:#fff;border:1px solid #c8c8c8"></div>
<div style="left:780.9px;top:121.7px;width:291.6px;height:13.8px;background:linear-gradient(#fbfbfb,#ececec);border-bottom:1px solid #d2d2d2"></div>
<div style="left:801.3px;top:121.7px;width:1px;height:13.8px;background:#d6d6d6"></div>
<div style="left:823.2px;top:121.7px;width:1px;height:13.8px;background:#d6d6d6"></div>
<svg style="left:784px;top:125px;" width="13" height="8" viewBox="0 0 13 8"><path d="M.5 4C3 .5 10 .5 12.5 4 10 7.5 3 7.5 .5 4z" fill="#e8e8e8" stroke="#888" stroke-width=".8"/><circle cx="6.5" cy="4" r="2" fill="#666"/></svg>
<svg style="left:807px;top:123.5px;" width="9" height="11" viewBox="0 0 9 11"><path d="M2 5V3.5a2.5 2.5 0 0 1 5 0V5" fill="none" stroke="#666" stroke-width="1.6"/><rect x=".5" y="5" width="8" height="6" rx="1" fill="#666"/></svg>
<div class="t" style="left:826.5px;top:122.6px;font-size:9.5px;line-height:11.4px;color:#333;"><svg class="g" width="24.50" height="7.22" viewBox="0 0 40 10" preserveAspectRatio="none" style="vertical-align:-0.48px;stroke-width:0.90px"><g fill="none" stroke="currentColor" stroke-linecap="round" stroke-linejoin="round"><g transform="translate(0.60 0) scale(.88 1)"><path d="M1 1.5H9Q8.5 4 6 5.5M5.3 4V6Q5 8.5 2.5 9.5"/></g><g transform="translate(10.60 0) scale(.88 1)"><path d="M8.5 1Q6 5 1.5 7M5.5 4.5V9.8"/></g><g transform="translate(20.60 0) scale(.88 1)"><path d="M2 1H8M1 4H9M5 4V6Q5 8.5 2.5 9.5"/></g><g transform="translate(30.60 0) scale(.88 1)"><path d="M4.5 1Q3.5 5 1.5 8.5Q5 8.3 8.5 7.5M7 5.5L9 9"/></g></g></svg></div>
<div style="left:780.9px;top:136px;width:291.6px;height:12.8px;background:#e9e9e9"></div>
<div style="left:782.2px;top:138px;width:10.4px;height:10px;background:#fff;border:1px solid #b8b8b8"></div>
<svg style="left:783.7px;top:139.5px;" width="8" height="8" viewBox="0 0 8 8"><path d="M1 4l2.2 3L7 .5" fill="none" stroke="#111" stroke-width="1.5"/></svg>
<div style="left:804.4px;top:138px;width:10.4px;height:10px;background:#fff;border:1px solid #c8c8c8"></div>
<svg style="left:827.6px;top:138px;" width="10.5" height="10" viewBox="0 0 10.5 10"><rect x=".5" y=".5" width="9.5" height="9" fill="#e0e0e0" stroke="#999" stroke-width=".7"/><rect x=".5" y=".5" width="9.5" height="2.5" fill="#777"/><path d="M3.5 3v6.5M7 3v6.5M.5 6h9.5" stroke="#aaa" stroke-width=".6"/></svg>
<div class="t" style="left:843.4px;top:136.2px;font-size:8.5px;line-height:10.2px;color:#111;;font-weight:bold;transform:scaleX(0.806);transform-origin:0 0">&lt;Attribute table frame&gt;</div>
<div style="left:782.2px;top:151.4px;width:10.4px;height:10px;background:#fff;border:1px solid #b8b8b8"></div>
<svg style="left:783.7px;top:152.9px;" width="8" height="8" viewBox="0 0 8 8"><path d="M1 4l2.2 3L7 .5" fill="none" stroke="#111" stroke-width="1.5"/></svg>
<div style="left:804.4px;top:151.4px;width:10.4px;height:10px;background:#fff;border:1px solid #c8c8c8"></div>
<svg style="left:827.6px;top:151.4px;" width="10.5" height="10" viewBox="0 0 10.5 10"><defs><linearGradient id="mg1" x1="0" x2="1"><stop offset="0" stop-color="#999"/><stop offset="1" stop-color="#f2f2f2"/></linearGradient></defs><rect x=".5" y=".5" width="9.5" height="9" fill="url(#mg1)" stroke="#999" stroke-width=".7"/></svg>
<div class="t" style="left:843.4px;top:149.3px;font-size:9px;line-height:10.8px;color:#222;"><svg class="g" width="17.00" height="6.84" viewBox="0 0 20 10" preserveAspectRatio="none" style="vertical-align:-0.45px;stroke-width:0.90px"><g fill="none" stroke="currentColor" stroke-linecap="round" stroke-linejoin="round"><g transform="translate(0.60 0) scale(.88 1)"><path transform="scale(.8333)" d="M0.4 4.2H4M2.2 1.2V10M0.4 10.6L4.2 9.2M4.6 5.2L11 3.8V7.2Q11 8 10.2 7.8M7 1.4V9M9 0.8V8.4M5 4.6V10.4Q5 11.4 6 11.4H11Q11.6 11.4 11.6 10"/></g><g transform="translate(10.60 0) scale(.88 1)"><path transform="scale(.8333)" d="M0.6 0.6H11.4V11.4H0.6ZM3 2.4L3.8 3.6M5.6 2.2L6.2 3.4M9 2.2Q8 6.4 3 9.4M4.2 5.2L9.4 9.6"/></g></g></svg> 2</div>
<div style="left:782.2px;top:164.8px;width:10.4px;height:10px;background:#fff;border:1px solid #b8b8b8"></div>
<svg style="left:783.7px;top:166.3px;" width="8" height="8" viewBox="0 0 8 8"><path d="M1 4l2.2 3L7 .5" fill="none" stroke="#111" stroke-width="1.5"/></svg>
<div style="left:804.4px;top:164.8px;width:10.4px;height:10px;background:#fff;border:1px solid #c8c8c8"></div>
<svg style="left:827.6px;top:164.8px;" width="10.5" height="10" viewBox="0 0 10.5 10"><rect x=".5" y=".5" width="9.5" height="9" fill="#fafafa" stroke="#888" stroke-width=".7"/><path d="M3 2.5h4.5M5.25 2.5v5.5" stroke="#444" stroke-width=".9"/></svg>
<div class="t" style="left:843.4px;top:163.6px;font-size:7.5px;line-height:9px;color:#222;">[%"N03_004"|| '<svg class="g" width="29.00" height="5.70" viewBox="0 0 40 10" preserveAspectRatio="none" style="vertical-align:-0.38px;stroke-width:0.75px"><g fill="none" stroke="currentColor" stroke-linecap="round" stroke-linejoin="round"><g transform="translate(0.60 0) scale(.88 1)"><path transform="scale(.8333)" d="M1.6 0.6V7Q1.6 10.5 0.2 11.8M1.6 0.6H10.8V10.8Q10.8 11.8 9.8 11.8M4 3.2H8.4M6.2 1.8V5.6M3.6 5.6H8.8M4.2 7.4H8.2V10H4.2Z"/></g><g transform="translate(10.60 0) scale(.88 1)"><path transform="scale(.8333)" d="M1 0.8L2.2 2M0.4 5H2.4V9.6L0.6 11.2M2.4 9.8Q4 11.4 7 11.4H11.8M4.2 2H10.6V7.8Q10.6 8.8 9.6 8.6M7.6 2Q7.4 6.4 4.4 9"/></g><g transform="translate(20.60 0) scale(.88 1)"><path transform="scale(.8333)" d="M0.4 4.2H4M2.2 1.2V10M0.4 10.6L4.2 9.2M4.6 5.2L11 3.8V7.2Q11 8 10.2 7.8M7 1.4V9M9 0.8V8.4M5 4.6V10.4Q5 11.4 6 11.4H11Q11.6 11.4 11.6 10"/></g><g transform="translate(30.60 0) scale(.88 1)"><path transform="scale(.8333)" d="M0.6 0.6H11.4V11.4H0.6ZM3 2.4L3.8 3.6M5.6 2.2L6.2 3.4M9 2.2Q8 6.4 3 9.4M4.2 5.2L9.4 9.6"/></g></g></svg>'%]</div>
<div style="left:782.2px;top:178.2px;width:10.4px;height:10px;background:#fff;border:1px solid #b8b8b8"></div>
<svg style="left:783.7px;top:179.7px;" width="8" height="8" viewBox="0 0 8 8"><path d="M1 4l2.2 3L7 .5" fill="none" stroke="#111" stroke-width="1.5"/></svg>
<div style="left:804.4px;top:178.2px;width:10.4px;height:10px;background:#fff;border:1px solid #c8c8c8"></div>
<svg style="left:827.6px;top:178.2px;" width="10.5" height="10" viewBox="0 0 10.5 10"><defs><linearGradient id="mg3" x1="0" x2="1"><stop offset="0" stop-color="#999"/><stop offset="1" stop-color="#f2f2f2"/></linearGradient></defs><rect x=".5" y=".5" width="9.5" height="9" fill="url(#mg3)" stroke="#999" stroke-width=".7"/></svg>
<div class="t" style="left:843.4px;top:176.1px;font-size:9px;line-height:10.8px;color:#222;"><svg class="g" width="17.00" height="6.84" viewBox="0 0 20 10" preserveAspectRatio="none" style="vertical-align:-0.45px;stroke-width:0.90px"><g fill="none" stroke="currentColor" stroke-linecap="round" stroke-linejoin="round"><g transform="translate(0.60 0) scale(.88 1)"><path transform="scale(.8333)" d="M0.4 4.2H4M2.2 1.2V10M0.4 10.6L4.2 9.2M4.6 5.2L11 3.8V7.2Q11 8 10.2 7.8M7 1.4V9M9 0.8V8.4M5 4.6V10.4Q5 11.4 6 11.4H11Q11.6 11.4 11.6 10"/></g><g transform="translate(10.60 0) scale(.88 1)"><path transform="scale(.8333)" d="M0.6 0.6H11.4V11.4H0.6ZM3 2.4L3.8 3.6M5.6 2.2L6.2 3.4M9 2.2Q8 6.4 3 9.4M4.2 5.2L9.4 9.6"/></g></g></svg> 1</div>
<svg style="left:921.5px;top:304px" width="13" height="4"><rect x="0" y="0" width="1" height="1" fill="#b4b4b4"/><rect x="0" y="2.5" width="1" height="1" fill="#b4b4b4"/><rect x="2" y="0" width="1" height="1" fill="#b4b4b4"/><rect x="2" y="2.5" width="1" height="1" fill="#b4b4b4"/><rect x="4" y="0" width="1" height="1" fill="#b4b4b4"/><rect x="4" y="2.5" width="1" height="1" fill="#b4b4b4"/><rect x="6" y="0" width="1" height="1" fill="#b4b4b4"/><rect x="6" y="2.5" width="1" height="1" fill="#b4b4b4"/><rect x="8" y="0" width="1" height="1" fill="#b4b4b4"/><rect x="8" y="2.5" width="1" height="1" fill="#b4b4b4"/><rect x="10" y="0" width="1" height="1" fill="#b4b4b4"/><rect x="10" y="2.5" width="1" height="1" fill="#b4b4b4"/><rect x="12" y="0" width="1" height="1" fill="#b4b4b4"/><rect x="12" y="2.5" width="1" height="1" fill="#b4b4b4"/></svg>
<div style="left:779px;top:323.5px;width:295px;height:1px;background:#c6c6c6"></div>
<div style="left:779.7px;top:309.3px;width:48.3px;height:14.2px;background:linear-gradient(#e4e4e4,#d8d8d8);border:1px solid #c6c6c6;border-bottom:none;border-radius:2px 2px 0 0"></div>
<div class="t" style="left:788.35px;top:311.2px;font-size:9.5px;line-height:11.4px;color:#333;"><svg class="g" width="31.00" height="7.22" viewBox="0 0 50 10" preserveAspectRatio="none" style="vertical-align:-0.48px;stroke-width:0.90px"><g fill="none" stroke="currentColor" stroke-linecap="round" stroke-linejoin="round"><g transform="translate(0.60 0) scale(.88 1)"><path d="M2.5 1V9Q6 8.5 9.3 4.5"/></g><g transform="translate(10.60 0) scale(.88 1)"><path d="M8.5 1Q6 5 1.5 7M5.5 4.5V9.8"/></g><g transform="translate(20.60 0) scale(.88 1)"><path d="M1 1.5H9Q8.5 4 6 5.5M5.3 4V6Q5 8.5 2.5 9.5"/></g><g transform="translate(30.60 0) scale(.88 1)"><path d="M5 0.5V2.5M1.5 2.5V5M1.5 2.5H8.5Q8.5 7 4 9.5"/></g><g transform="translate(40.60 0) scale(.88 1)"><path d="M3.5 0.8V9.8M3.5 4.5L8 6.5"/></g></g></svg></div>
<div style="left:900.7px;top:309.3px;width:36.3px;height:14.2px;background:linear-gradient(#e4e4e4,#d8d8d8);border:1px solid #c6c6c6;border-bottom:none;border-radius:2px 2px 0 0"></div>
<div class="t" style="left:909.35px;top:311.2px;font-size:9.5px;line-height:11.4px;color:#333;"><svg class="g" width="19.00" height="7.22" viewBox="0 0 30 10" preserveAspectRatio="none" style="vertical-align:-0.48px;stroke-width:0.90px"><g fill="none" stroke="currentColor" stroke-linecap="round" stroke-linejoin="round"><g transform="translate(0.60 0) scale(.88 1)"><path d="M1.5 3.5H7V8.5Q7 9.5 5.5 9.5M4.5 1Q4.5 6 1.5 9.5M8 0.5L8.5 2M9.5 0.5L10 2"/></g><g transform="translate(10.60 0) scale(.88 1)"><path d="M8.5 1Q6 5 1.5 7M5.5 4.5V9.8"/></g><g transform="translate(20.60 0) scale(.88 1)"><path d="M3.5 0.8V9.8M3.5 4.5L8 6.5M7 0.5L7.5 2M8.5 0.5L9 2"/></g></g></svg></div>
<div style="left:937px;top:309.3px;width:41.7px;height:14.2px;background:linear-gradient(#e4e4e4,#d8d8d8);border:1px solid #c6c6c6;border-bottom:none;border-radius:2px 2px 0 0"></div>
<div class="t" style="left:946.1px;top:311.2px;font-size:9.5px;line-height:11.4px;color:#333;"><svg class="g" width="23.50" height="7.22" viewBox="0 0 30 10" preserveAspectRatio="none" style="vertical-align:-0.48px;stroke-width:0.90px"><g fill="none" stroke="currentColor" stroke-linecap="round" stroke-linejoin="round"><g transform="translate(0.60 0) scale(.88 1)"><path transform="scale(.8333)" d="M0.4 4.2H4M2.2 1.2V10M0.4 10.6L4.2 9.2M4.6 5.2L11 3.8V7.2Q11 8 10.2 7.8M7 1.4V9M9 0.8V8.4M5 4.6V10.4Q5 11.4 6 11.4H11Q11.6 11.4 11.6 10"/></g><g transform="translate(10.60 0) scale(.88 1)"><path transform="scale(.8333)" d="M0.6 0.6H11.4V11.4H0.6ZM3 2.4L3.8 3.6M5.6 2.2L6.2 3.4M9 2.2Q8 6.4 3 9.4M4.2 5.2L9.4 9.6"/></g><g transform="translate(20.60 0) scale(.88 1)"><path d="M2 1V9.8M0.5 2.5H3.5V8M5 1V9Q5 9.8 4 9.8M5 1.5H9M5 3.5H9M5 5.5H9.5M7 5.5L9.5 9.5M7 7L5 9.5"/></g></g></svg></div>
<div style="left:828px;top:308.2px;width:72.7px;height:16.3px;background:#f7f7f7;border:1px solid #c6c6c6;border-bottom:none;border-radius:2px 2px 0 0"></div>
<div class="t" style="left:837.35px;top:310.65px;font-size:9.5px;line-height:11.4px;color:#333;"><svg class="g" width="54.00" height="7.22" viewBox="0 0 90 10" preserveAspectRatio="none" style="vertical-align:-0.48px;stroke-width:0.90px"><g fill="none" stroke="currentColor" stroke-linecap="round" stroke-linejoin="round"><g transform="translate(0.60 0) scale(.88 1)"><path d="M1 1.5H9Q8.5 4 6 5.5M5.3 4V6Q5 8.5 2.5 9.5"/></g><g transform="translate(10.60 0) scale(.88 1)"><path d="M8.5 1Q6 5 1.5 7M5.5 4.5V9.8"/></g><g transform="translate(20.60 0) scale(.88 1)"><path d="M2 1H8M1 4H9M5 4V6Q5 8.5 2.5 9.5"/></g><g transform="translate(30.60 0) scale(.88 1)"><path d="M4.5 1Q3.5 5 1.5 8.5Q5 8.3 8.5 7.5M7 5.5L9 9"/></g><g transform="translate(40.60 0) scale(.88 1)"><path d="M1.5 2.5H8Q7.5 7 3 9.5M9 1A.7 .7 0 1 0 9.01 1"/></g><g transform="translate(50.60 0) scale(.88 1)"><path d="M1.5 1.5H8.5V9H1.5Z"/></g><g transform="translate(60.60 0) scale(.88 1)"><path d="M3.5 2.5Q3 6.5 1 9M6 2.5Q7.5 6 9.3 8.5M8.2 1.3A.8 .8 0 1 0 8.21 1.3"/></g><g transform="translate(70.60 0) scale(.88 1)"><path d="M2 1H8M1 4H9M5 4V6Q5 8.5 2.5 9.5"/></g><g transform="translate(80.60 0) scale(.88 1)"><path d="M7.5 3Q5.5 6 3 7.5M5.5 5.5V9.5"/></g></g></svg></div>
<div class="t" style="left:782px;top:327px;font-size:9.5px;line-height:11.4px;color:#333;"><svg class="g" width="55.00" height="7.22" viewBox="0 0 90 10" preserveAspectRatio="none" style="vertical-align:-0.48px;stroke-width:0.90px"><g fill="none" stroke="currentColor" stroke-linecap="round" stroke-linejoin="round"><g transform="translate(0.60 0) scale(.88 1)"><path d="M1 1.5H9Q8.5 4 6 5.5M5.3 4V6Q5 8.5 2.5 9.5"/></g><g transform="translate(10.60 0) scale(.88 1)"><path d="M8.5 1Q6 5 1.5 7M5.5 4.5V9.8"/></g><g transform="translate(20.60 0) scale(.88 1)"><path d="M2 1H8M1 4H9M5 4V6Q5 8.5 2.5 9.5"/></g><g transform="translate(30.60 0) scale(.88 1)"><path d="M4.5 1Q3.5 5 1.5 8.5Q5 8.3 8.5 7.5M7 5.5L9 9"/></g><g transform="translate(40.60 0) scale(.88 1)"><path d="M1.5 2.5H8Q7.5 7 3 9.5M9 1A.7 .7 0 1 0 9.01 1"/></g><g transform="translate(50.60 0) scale(.88 1)"><path d="M1.5 1.5H8.5V9H1.5Z"/></g><g transform="translate(60.60 0) scale(.88 1)"><path d="M3.5 2.5Q3 6.5 1 9M6 2.5Q7.5 6 9.3 8.5M8.2 1.3A.8 .8 0 1 0 8.21 1.3"/></g><g transform="translate(70.60 0) scale(.88 1)"><path d="M2 1H8M1 4H9M5 4V6Q5 8.5 2.5 9.5"/></g><g transform="translate(80.60 0) scale(.88 1)"><path d="M7.5 3Q5.5 6 3 7.5M5.5 5.5V9.5"/></g></g></svg></div>
<div style="left:1054.4px;top:328.7px;width:8px;height:8px;border:1px solid #888;border-radius:1.5px;background:#e8e8e8"></div>
<svg style="left:1056px;top:330.5px;" width="5" height="5" viewBox="0 0 5 5"><rect x=".5" y="1.5" width="3" height="3" fill="none" stroke="#777" stroke-width=".8"/><path d="M2 .5h2.5V3" fill="none" stroke="#777" stroke-width=".8"/></svg>
<div style="left:1064.8px;top:328.7px;width:8px;height:8px;border:1px solid #888;border-radius:1.5px;background:#e8e8e8"></div>
<svg style="left:1066.3px;top:330.2px;" width="5" height="5" viewBox="0 0 5 5"><path d="M.5 .5l4 4M4.5 .5l-4 4" stroke="#222" stroke-width="1.3"/></svg>
<div style="left:779.5px;top:343.9px;width:294.2px;height:10.7px;background:#909090"></div>
<div class="t" style="left:782px;top:343.6px;font-size:9.5px;line-height:11.4px;color:#111;;font-weight:bold"><svg class="g" width="43.00" height="7.22" viewBox="0 0 60 10" preserveAspectRatio="none" style="vertical-align:-0.48px;stroke-width:1.25px"><g fill="none" stroke="currentColor" stroke-linecap="round" stroke-linejoin="round"><g transform="translate(0.60 0) scale(.88 1)"><path d="M1 1H9V3H1M1 1V6Q1 8.5 0 9.8M2.5 4H9M3 5.5H8.5V9.5M3 5.5V9.8M5.8 4V8.5M4 7.5H7.5"/></g><g transform="translate(10.60 0) scale(.88 1)"><path d="M2 0.5V9.8M0.5 3L1 5M3.5 3L3 4.5M6.5 0.5V9.3M4.5 3.5H9.5M5 6.3H9M4 9.3H9.8M5 1L4.5 3"/></g><g transform="translate(20.60 0) scale(.88 1)"><path d="M2 1H8M1 4H9M5 4V6Q5 8.5 2.5 9.5"/></g><g transform="translate(30.60 0) scale(.88 1)"><path d="M0.5 5.2H9.5"/></g><g transform="translate(40.60 0) scale(.88 1)"><path d="M1.5 2.5H8Q7.5 7 3 9.5M8.5 0.2L9 1.3M9.7 0.2L10 1.3"/></g><g transform="translate(50.60 0) scale(.88 1)"><path d="M3.5 1.5V5Q3.5 8 1 9.5M6 1V8.5Q7.5 8 9.5 5.5"/></g></g></svg></div>
<div style="left:779.3px;top:354.6px;width:1px;height:214.5px;background:#c8c8c8"></div>
<div style="left:1063.5px;top:354.6px;width:10.2px;height:214.5px;background:#d8d8d8"></div>
<div style="left:1063.5px;top:355px;width:10.2px;height:10px;background:#fff"></div>
<svg style="left:1066px;top:358px;" width="6" height="4" viewBox="0 0 6 4"><path d="M0 3.5h6L3 0z" fill="#333"/></svg>
<div style="left:1063.5px;top:374.8px;width:10.2px;height:36px;background:#fafafa"></div>
<div style="left:1063.5px;top:558.7px;width:10.2px;height:10.4px;background:#fff"></div>
<svg style="left:1066px;top:562px;" width="6" height="4" viewBox="0 0 6 4"><path d="M0 0h6L3 3.5z" fill="#333"/></svg>
<div style="left:787.7px;top:354.6px;width:268.7px;height:45.1px;border:1px solid #d6d6d6;border-top:none;background:#ebebeb"></div>
<div style="left:795.3px;top:359.3px;width:252.1px;height:13.5px;background:linear-gradient(#fbfbfb,#e8e8e8);border:1px solid #b4b4b4;border-radius:2.5px"></div>
<div class="t" style="left:879.35px;top:360.65px;font-size:9px;line-height:10.8px;color:#333;"><svg class="g" width="84.00" height="6.84" viewBox="0 0 140 10" preserveAspectRatio="none" style="vertical-align:-0.45px;stroke-width:0.90px"><g fill="none" stroke="currentColor" stroke-linecap="round" stroke-linejoin="round"><g transform="translate(0.60 0) scale(.88 1)"><path d="M2 1H8M1 4H9M5 4V6Q5 8.5 2.5 9.5"/></g><g transform="translate(10.60 0) scale(.88 1)"><path d="M0.5 5.2H9.5"/></g><g transform="translate(20.60 0) scale(.88 1)"><path d="M1.5 2.5H8Q7.5 7 3 9.5M8.5 0.2L9 1.3M9.7 0.2L10 1.3"/></g><g transform="translate(30.60 0) scale(.88 1)"><path d="M3.5 1.5V5Q3.5 8 1 9.5M6 1V8.5Q7.5 8 9.5 5.5"/></g><g transform="translate(40.60 0) scale(.88 1)"><path d="M2 1H7M1 4H8.5M4.8 4V6Q4.8 8.5 2.5 9.5M8.3 0.2L8.8 1.5M9.6 0.2L10 1.5"/></g><g transform="translate(50.60 0) scale(.88 1)"><path d="M0.5 5.2H9.5"/></g><g transform="translate(60.60 0) scale(.88 1)"><path d="M4.5 1Q3.5 4 1.2 5.5M3.8 2.8H8.5Q8 7 3.5 9.5M3.5 5L7 7"/></g><g transform="translate(70.60 0) scale(.88 1)"><path d="M5.5 2Q4 8 2.5 8.5Q1 8.5 1 6Q1 2 5.5 2Q9 2 9 5.5Q9 8.5 6 9.3"/></g><g transform="translate(80.60 0) scale(.88 1)"><path d="M2.5 1.5V6M7.5 1V5Q7.5 8 3.5 9.5"/></g><g transform="translate(90.60 0) scale(.88 1)"><path d="M1.5 2H8.5Q8 7 3 9.5"/></g><g transform="translate(100.60 0) scale(.88 1)"><path d="M2.5 1V9Q6 8.5 9.3 4.5"/></g><g transform="translate(110.60 0) scale(.88 1)"><path d="M2.5 4L3.2 5.8M4.8 3.8L5.3 5.5M8 3.8Q7.5 8 4 9.5"/></g><g transform="translate(120.60 0) scale(.88 1)"><path d="M1.5 1.5L3 2.5M1 4.5L2.5 5.5M2 9.3Q6.5 8 8.8 2.5"/></g><g transform="translate(130.60 0) scale(.88 1)"><path d="M2.5 5H7V8.5M1.5 8.5H8.5"/></g></g></svg></div>
<div style="left:795.3px;top:377.5px;width:252.1px;height:13.4px;background:linear-gradient(#fbfbfb,#e8e8e8);border:1px solid #b4b4b4;border-radius:2.5px"></div>
<div class="t" style="left:911.35px;top:378.8px;font-size:9px;line-height:10.8px;color:#333;"><svg class="g" width="11.00" height="6.84" viewBox="0 0 20 10" preserveAspectRatio="none" style="vertical-align:-0.45px;stroke-width:0.90px"><g fill="none" stroke="currentColor" stroke-linecap="round" stroke-linejoin="round"><g transform="translate(0.60 0) scale(.88 1)"><path d="M1 1H9V3H1M1 1V6Q1 8.5 0 9.8M2.5 4H9M3 5.5H8.5V9.5M3 5.5V9.8M5.8 4V8.5M4 7.5H7.5"/></g><g transform="translate(10.60 0) scale(.88 1)"><path d="M2 0.5V9.8M0.5 3L1 5M3.5 3L3 4.5M6.5 0.5V9.3M4.5 3.5H9.5M5 6.3H9M4 9.3H9.8M5 1L4.5 3"/></g></g></svg>...</div>
<svg style="left:788.9px;top:409px;" width="8" height="6" viewBox="0 0 8 6"><path d="M0 0h8L4 5.5z" fill="#222"/></svg>
<div class="t" style="left:803.5px;top:404.5px;font-size:9.5px;line-height:11.4px;color:#222;;font-weight:bold"><svg class="g" width="63.50" height="7.22" viewBox="0 0 100 10" preserveAspectRatio="none" style="vertical-align:-0.48px;stroke-width:1.25px"><g fill="none" stroke="currentColor" stroke-linecap="round" stroke-linejoin="round"><g transform="translate(0.60 0) scale(.88 1)"><path transform="scale(.8333)" d="M0.4 4.2H4M2.2 1.2V10M0.4 10.6L4.2 9.2M4.6 5.2L11 3.8V7.2Q11 8 10.2 7.8M7 1.4V9M9 0.8V8.4M5 4.6V10.4Q5 11.4 6 11.4H11Q11.6 11.4 11.6 10"/></g><g transform="translate(10.60 0) scale(.88 1)"><path d="M0.5 4H3.5M2 0.5V9.8M0.5 7.5L3.5 6M1 1L0.5 3M6 0.5L4.5 3M5 2.5H9.5V8.5Q9.5 9.8 8.5 9.5M6.5 2.5Q6.5 7 4 9.5M8 2.5Q8 6.5 6 8.5"/></g><g transform="translate(20.60 0) scale(.88 1)"><path d="M5.5 2Q4 8 2.5 8.5Q1 8.5 1 6Q1 2 5.5 2Q9 2 9 5.5Q9 8.5 6 9.3"/></g><g transform="translate(30.60 0) scale(.88 1)"><path d="M1.5 2H8.5Q8 7 3 9.5"/></g><g transform="translate(40.60 0) scale(.88 1)"><path d="M7.5 3Q5.5 6 3 7.5M5.5 5.5V9.5"/></g><g transform="translate(50.60 0) scale(.88 1)"><path d="M3.5 1.5V5Q3.5 8 1 9.5M6 1V8.5Q7.5 8 9.5 5.5"/></g><g transform="translate(60.60 0) scale(.88 1)"><path d="M4.5 1Q3.5 4 1.2 5.5M3.8 2.8H8.5Q8 7 3.5 9.5M3.5 5L7 7"/></g><g transform="translate(70.60 0) scale(.88 1)"><path d="M2.5 1.5V6M7.5 1V5Q7.5 8 3.5 9.5"/></g><g transform="translate(80.60 0) scale(.88 1)"><path d="M1.5 2L3.5 3.5M1.5 9.3Q6.5 8 9 3"/></g><g transform="translate(90.60 0) scale(.88 1)"><path d="M4.5 1Q3.5 4 1.2 5.5M3.8 2.8H8Q7.5 7 3.5 9.5M8.3 0.3L8.8 1.5M9.6 0.3L10 1.5"/></g></g></svg></div>
<div style="left:787.7px;top:418.3px;width:268.7px;height:125.5px;border:1px solid #d6d6d6;background:#ebebeb;border-radius:2px"></div>
<div class="t" style="left:795.5px;top:427px;font-size:9.5px;line-height:11.4px;color:#222;"><svg class="g" width="32.30" height="7.22" viewBox="0 0 40 10" preserveAspectRatio="none" style="vertical-align:-0.48px;stroke-width:0.90px"><g fill="none" stroke="currentColor" stroke-linecap="round" stroke-linejoin="round"><g transform="translate(0.60 0) scale(.88 1)"><path d="M1.5 0.5H8.5V4H1.5ZM1.5 2.2H8.5M0.5 5H9.5M1.5 5V9.5M1.5 6.7H4M1.5 8.3H4M0.5 9.8L4.5 9M4 5V9.8M5 6H9Q8 8.5 5 9.8M5.5 7L9.5 9.8"/></g><g transform="translate(10.60 0) scale(.88 1)"><path d="M0.5 3.5H9.5M5 0.5V4Q4 7.5 0.5 9.5M5.2 4.5Q7 8 9.5 9.5"/></g><g transform="translate(20.60 0) scale(.88 1)"><path d="M3 0.5L0.5 3M3 3L0.5 6M1.8 4.5V9.8M4.5 1H9.5M4 3.5H9.5M8 3.5V9Q8 9.8 7 9.8"/></g><g transform="translate(30.60 0) scale(.88 1)"><path d="M2.5 0.3V4M0.5 2H4.5M1 0.8L1.5 1.5M4 0.8L3.5 1.5M0.5 4.5H4.5M3 4.5L1 9M1 6.5L4.5 9M6.5 0.5L5 4M5.5 2.5H9.5M8.5 2.5Q7.5 7 5 9.8M6 4.5L9.5 9.8"/></g></g></svg></div>
<div style="left:853.4px;top:425.2px;width:194px;height:14.1px;background:#fff;border:1px solid #b8b8b8;border-radius:2px"></div>
<div class="t" style="left:856.4px;top:426.9px;font-size:9px;line-height:10.8px;color:#222;">30</div>
<div style="left:1036.5px;top:426.2px;width:1px;height:12.1px;background:#d8d8d8"></div>
<svg style="left:1039.5px;top:427.5px;" width="6" height="10" viewBox="0 0 6 10"><path d="M0 4h6L3 .5zM0 6h6L3 9.5z" fill="#333"/></svg>
<div style="left:795.5px;top:445.8px;width:10.2px;height:10px;background:#fff;border:1px solid #c0c0c0"></div>
<div class="t" style="left:809.8px;top:445.5px;font-size:9.5px;line-height:11.4px;color:#222;"><svg class="g" width="84.00" height="7.22" viewBox="0 0 120 10" preserveAspectRatio="none" style="vertical-align:-0.48px;stroke-width:0.90px"><g fill="none" stroke="currentColor" stroke-linecap="round" stroke-linejoin="round"><g transform="translate(0.60 0) scale(.88 1)"><path d="M2 1H8M1 4H9M5 4V6Q5 8.5 2.5 9.5"/></g><g transform="translate(10.60 0) scale(.88 1)"><path d="M0.5 5.2H9.5"/></g><g transform="translate(20.60 0) scale(.88 1)"><path d="M1.5 2.5H8Q7.5 7 3 9.5M8.5 0.2L9 1.3M9.7 0.2L10 1.3"/></g><g transform="translate(30.60 0) scale(.88 1)"><path d="M3.5 1.5V5Q3.5 8 1 9.5M6 1V8.5Q7.5 8 9.5 5.5"/></g><g transform="translate(40.60 0) scale(.88 1)"><path d="M1 3.5H6.5Q7 3.5 7 4.5L6.5 8.5Q6.3 9.5 5.3 9M3.8 1L2.8 6.5L1.2 9.5M8.5 3L9.5 6"/></g><g transform="translate(50.60 0) scale(.88 1)"><path d="M3 1L5 2M2 3L1.8 6.5Q4 5 6.5 5.5Q8.5 6.5 7.5 8.5Q6.5 9.5 3.5 9.5"/></g><g transform="translate(60.60 0) scale(.88 1)"><path d="M8.5 0.3L1.5 1M0.5 2.5H9.5M1.5 3.8H8.5V7H1.5ZM1.5 5.4H8.5M5 1V9.5M1.5 8.3H8.5M0.5 9.6H9.5"/></g><g transform="translate(70.60 0) scale(.88 1)"><path d="M1.5 0.3L2 1.5M0.5 2.5H3.5L0.5 6.5M2.2 4.5V9.8M2.5 5.5L3.5 6.5M5.5 0.5L4.5 2M5 1.5H9.5M5.5 2.5H9V5.5H5.5ZM5.5 4H9M6 6.5H8.5Q7 9 4.5 9.8M5.5 7.5L9.5 9.8"/></g><g transform="translate(80.60 0) scale(.88 1)"><path d="M3 0.5L0.5 3M3 3L0.5 6M1.8 4.5V9.8M4.5 1H9.5M4 3.5H9.5M8 3.5V9Q8 9.8 7 9.8"/></g><g transform="translate(90.60 0) scale(.88 1)"><path d="M1.5 2.5H7M4 1L2.5 5.5Q4.5 4.5 6 5.5M8.5 5Q4 6.5 4 8Q4 9.5 8 9.3"/></g><g transform="translate(100.60 0) scale(.88 1)"><path d="M3 0.5V2M1 1L1.5 2M5 1L4.5 2M1 3H5.5V9.8M1 3V9.8M1 5.5H5.5M1 7.5H5.5M7 2V7.5M9 0.5V9.5L8 9.8"/></g><g transform="translate(110.60 0) scale(.88 1)"><path d="M0.8 0.8V9.8M0.8 0.8H3L2 4Q3.8 5.5 2.8 7.5Q2 8 1.5 7.5M6.5 0.5L4 3M6.5 0.5L9.5 3M4.8 3.5H8.2M4.5 5.5H9M6.5 3.5V9.5L5.8 9.8M5 7L4.2 8.5M8 7L8.8 8.5"/></g></g></svg></div>
<div style="left:795.5px;top:463px;width:10.2px;height:10px;background:#fff;border:1px solid #c0c0c0"></div>
<div class="t" style="left:809.8px;top:462.4px;font-size:9.5px;line-height:11.4px;color:#222;"><svg class="g" width="84.00" height="7.22" viewBox="0 0 120 10" preserveAspectRatio="none" style="vertical-align:-0.48px;stroke-width:0.90px"><g fill="none" stroke="currentColor" stroke-linecap="round" stroke-linejoin="round"><g transform="translate(0.60 0) scale(.88 1)"><path transform="scale(.8333)" d="M0.4 4.2H4M2.2 1.2V10M0.4 10.6L4.2 9.2M4.6 5.2L11 3.8V7.2Q11 8 10.2 7.8M7 1.4V9M9 0.8V8.4M5 4.6V10.4Q5 11.4 6 11.4H11Q11.6 11.4 11.6 10"/></g><g transform="translate(10.60 0) scale(.88 1)"><path transform="scale(.8333)" d="M0.6 0.6H11.4V11.4H0.6ZM3 2.4L3.8 3.6M5.6 2.2L6.2 3.4M9 2.2Q8 6.4 3 9.4M4.2 5.2L9.4 9.6"/></g><g transform="translate(20.60 0) scale(.88 1)"><path d="M1 2.5V9.8M1 2.5H9V9Q9 9.8 8 9.8M5 0.3V4Q4.5 6 2.5 7.5M5 4.5L7.5 7.5"/></g><g transform="translate(30.60 0) scale(.88 1)"><path d="M5.5 2Q4 8 2.5 8.5Q1 8.5 1 6Q1 2 5.5 2Q9 2 9 5.5Q9 8.5 6 9.3"/></g><g transform="translate(40.60 0) scale(.88 1)"><path d="M0.5 1.5H9.5M8 1.5V9Q8 9.8 7 9.8M2 4H5.5V7H2Z"/></g><g transform="translate(50.60 0) scale(.88 1)"><path d="M1.5 0.3L2 1.5M0.5 2.5H3.5L0.5 6.5M2.2 4.5V9.8M2.5 5.5L3.5 6.5M5 1H9V6H5ZM5 2.7H9M5 4.3H9M6 6Q6 8.5 4.5 9.8M8 6V9Q8 9.8 9.8 9.5"/></g><g transform="translate(60.60 0) scale(.88 1)"><path transform="scale(.8333)" d="M0.4 4.2H4M2.2 1.2V10M0.4 10.6L4.2 9.2M4.6 5.2L11 3.8V7.2Q11 8 10.2 7.8M7 1.4V9M9 0.8V8.4M5 4.6V10.4Q5 11.4 6 11.4H11Q11.6 11.4 11.6 10"/></g><g transform="translate(70.60 0) scale(.88 1)"><path d="M0.5 4H3.5M2 0.5V9.8M0.5 7.5L3.5 6M1 1L0.5 3M6 0.5L4.5 3M5 2.5H9.5V8.5Q9.5 9.8 8.5 9.5M6.5 2.5Q6.5 7 4 9.5M8 2.5Q8 6.5 6 8.5"/></g><g transform="translate(80.60 0) scale(.88 1)"><path d="M5.5 2Q4 8 2.5 8.5Q1 8.5 1 6Q1 2 5.5 2Q9 2 9 5.5Q9 8.5 6 9.3"/></g><g transform="translate(90.60 0) scale(.88 1)"><path d="M1.5 2H5Q3.5 6 2.5 8.5Q1.5 9.5 1.2 8Q1.5 6.5 4 6.5Q7.5 6.5 9 8.5M7 4V9.5"/></g><g transform="translate(100.60 0) scale(.88 1)"><path d="M5 0.3V5M1.5 1.5H8.5M2 3H8M0.5 4.5H9.5M4.5 5Q3 8 0.5 9.5M3.5 7V9.8L5.5 9M5 5.5Q7 8.5 9.5 9.8M8.5 5.5L6.5 7"/></g><g transform="translate(110.60 0) scale(.88 1)"><path d="M2 1H8M0.5 3.5H9.5M5 3.5V9Q5 9.8 4 9.8M3 5.5L1 8.5M7 5.5L9 8.5"/></g></g></svg></div>
<div class="t" style="left:795.5px;top:482.5px;font-size:9.5px;line-height:11.4px;color:#999;"><svg class="g" width="51.00" height="7.22" viewBox="0 0 80 10" preserveAspectRatio="none" style="vertical-align:-0.48px;stroke-width:0.90px"><g fill="none" stroke="currentColor" stroke-linecap="round" stroke-linejoin="round"><g transform="translate(0.60 0) scale(.88 1)"><path d="M2.5 1.5V6M7.5 1V5Q7.5 8 3.5 9.5"/></g><g transform="translate(10.60 0) scale(.88 1)"><path d="M1.5 2L3.5 3.5M1.5 9.3Q6.5 8 9 3"/></g><g transform="translate(20.60 0) scale(.88 1)"><path d="M4.5 1Q3.5 4 1.2 5.5M3.8 2.8H8.5Q8 7 3.5 9.5"/></g><g transform="translate(30.60 0) scale(.88 1)"><path d="M1.5 3.3H8.5M4.5 1L7 6.5M3 6.5Q2 8.5 4 9.3H7.5"/></g><g transform="translate(40.60 0) scale(.88 1)"><path d="M3 1V9.5M1 3.5H3.5L1 7.5M3.5 7Q5.5 3.5 7 4Q7.5 4.5 7.2 8Q7.2 9.5 9.5 8.5"/></g><g transform="translate(50.60 0) scale(.88 1)"><path d="M1 3H5.5M3.5 1L1.5 9M6 4.5H9M6 7.5Q6 9 8 9H9.5"/></g><g transform="translate(60.60 0) scale(.88 1)"><path transform="scale(.8333)" d="M0.4 4.2H4M2.2 1.2V10M0.4 10.6L4.2 9.2M4.6 5.2L11 3.8V7.2Q11 8 10.2 7.8M7 1.4V9M9 0.8V8.4M5 4.6V10.4Q5 11.4 6 11.4H11Q11.6 11.4 11.6 10"/></g><g transform="translate(70.60 0) scale(.88 1)"><path transform="scale(.8333)" d="M0.6 0.6H11.4V11.4H0.6ZM3 2.4L3.8 3.6M5.6 2.2L6.2 3.4M9 2.2Q8 6.4 3 9.4M4.2 5.2L9.4 9.6"/></g></g></svg></div>
<div style="left:852.7px;top:479.7px;width:194.8px;height:16.8px;background:linear-gradient(#f4f4f4,#e8e8e8);border:1px solid #d0d0d0;border-radius:2px"></div>
<svg style="left:1037px;top:486.5px;" width="6" height="4" viewBox="0 0 6 4"><path d="M0 0h6L3 3.5z" fill="#999"/></svg>
<div style="left:795.5px;top:503px;width:10.2px;height:10px;background:#fff;border:1px solid #c0c0c0"></div>
<svg style="left:797px;top:504.5px;" width="8" height="8" viewBox="0 0 8 8"><path d="M1 4l2.2 3L7 .5" fill="none" stroke="#111" stroke-width="1.5"/></svg>
<div class="t" style="left:809.8px;top:502.3px;font-size:9.5px;line-height:11.4px;color:#222;"><svg class="g" width="122.00" height="7.22" viewBox="0 0 160 10" preserveAspectRatio="none" style="vertical-align:-0.48px;stroke-width:0.90px"><g fill="none" stroke="currentColor" stroke-linecap="round" stroke-linejoin="round"><g transform="translate(0.60 0) scale(.88 1)"><path transform="scale(.8333)" d="M0.4 4.2H4M2.2 1.2V10M0.4 10.6L4.2 9.2M4.6 5.2L11 3.8V7.2Q11 8 10.2 7.8M7 1.4V9M9 0.8V8.4M5 4.6V10.4Q5 11.4 6 11.4H11Q11.6 11.4 11.6 10"/></g><g transform="translate(10.60 0) scale(.88 1)"><path transform="scale(.8333)" d="M0.6 0.6H11.4V11.4H0.6ZM3 2.4L3.8 3.6M5.6 2.2L6.2 3.4M9 2.2Q8 6.4 3 9.4M4.2 5.2L9.4 9.6"/></g><g transform="translate(20.60 0) scale(.88 1)"><path d="M2 1V9.8M0.5 2.5H3.5V8M5 1V9Q5 9.8 4 9.8M5 1.5H9M5 3.5H9M5 5.5H9.5M7 5.5L9.5 9.5M7 7L5 9.5"/></g><g transform="translate(30.60 0) scale(.88 1)"><path transform="scale(.8333)" d="M0.4 4.2H4M2.2 1.2V10M0.4 10.6L4.2 9.2M4.6 5.2L11 3.8V7.2Q11 8 10.2 7.8M7 1.4V9M9 0.8V8.4M5 4.6V10.4Q5 11.4 6 11.4H11Q11.6 11.4 11.6 10"/></g><g transform="translate(40.60 0) scale(.88 1)"><path d="M0.5 4H3.5M2 0.5V9.8M0.5 7.5L3.5 6M1 1L0.5 3M6 0.5L4.5 3M5 2.5H9.5V8.5Q9.5 9.8 8.5 9.5M6.5 2.5Q6.5 7 4 9.5M8 2.5Q8 6.5 6 8.5"/></g><g transform="translate(50.60 0) scale(.88 1)"><path d="M3 1L4 4.5M8 3.5Q2.5 5 2.5 7.5Q2.5 9.2 5 9.2H8.5"/></g><g transform="translate(60.60 0) scale(.88 1)"><path d="M5 0.3V1.5M0.5 2H9.5M3 3L1.5 4.8M7 3L8.5 4.8M2.5 5Q6 9 9.5 9.5M7.5 5Q4.5 9 0.5 9.5"/></g><g transform="translate(70.60 0) scale(.88 1)"><path d="M3 0.3L3.8 1.5M7 0.3L6.2 1.5M1 2H9M1.5 3.8H8.5M0.5 5.5H9.5M5 2V5.5Q3.5 8 0.8 9.5M3.5 7.5H9M6 7.5V9.8M3 9.8H9.5"/></g><g transform="translate(80.60 0) scale(.88 1)"><path d="M0.8 3H9.2M6 1V6.5M6 4.5Q4 4.5 4 6Q4 7.5 6 7.2Q6 8.5 4.5 9.5"/></g><g transform="translate(90.60 0) scale(.88 1)"><path d="M1.5 1.5H7L2 7Q4 5.5 6.5 5.8Q8.5 6.2 8.3 8Q8 9.5 6 9.5Q4.5 9.5 4.5 8.5Q4.5 7.8 5.5 7.8Q7 8 7.5 9.5"/></g><g transform="translate(100.60 0) scale(.88 1)"><path transform="scale(.8333)" d="M0.4 4.2H4M2.2 1.2V10M0.4 10.6L4.2 9.2M4.6 5.2L11 3.8V7.2Q11 8 10.2 7.8M7 1.4V9M9 0.8V8.4M5 4.6V10.4Q5 11.4 6 11.4H11Q11.6 11.4 11.6 10"/></g><g transform="translate(110.60 0) scale(.88 1)"><path d="M0.5 4H3.5M2 0.5V9.8M0.5 7.5L3.5 6M1 1L0.5 3M6 0.5L4.5 3M5 2.5H9.5V8.5Q9.5 9.8 8.5 9.5M6.5 2.5Q6.5 7 4 9.5M8 2.5Q8 6.5 6 8.5"/></g><g transform="translate(120.60 0) scale(.88 1)"><path d="M5.5 2Q4 8 2.5 8.5Q1 8.5 1 6Q1 2 5.5 2Q9 2 9 5.5Q9 8.5 6 9.3"/></g><g transform="translate(130.60 0) scale(.88 1)"><path d="M1.5 2H5Q3.5 6 2.5 8.5Q1.5 9.5 1.2 8Q1.5 6.5 4 6.5Q7.5 6.5 9 8.5M7 4V9.5"/></g><g transform="translate(140.60 0) scale(.88 1)"><path d="M5 0.3V5M1.5 1.5H8.5M2 3H8M0.5 4.5H9.5M4.5 5Q3 8 0.5 9.5M3.5 7V9.8L5.5 9M5 5.5Q7 8.5 9.5 9.8M8.5 5.5L6.5 7"/></g><g transform="translate(150.60 0) scale(.88 1)"><path d="M2 1H8M0.5 3.5H9.5M5 3.5V9Q5 9.8 4 9.8M3 5.5L1 8.5M7 5.5L9 8.5"/></g></g></svg></div>
<div style="left:795.5px;top:521.7px;width:10.2px;height:10px;background:#fff;border:1px solid #c0c0c0"></div>
<div class="t" style="left:809.8px;top:521.3px;font-size:9.5px;line-height:11.4px;color:#222;"><svg class="g" width="20.00" height="7.22" viewBox="0 0 40 10" preserveAspectRatio="none" style="vertical-align:-0.48px;stroke-width:0.90px"><g fill="none" stroke="currentColor" stroke-linecap="round" stroke-linejoin="round"><g transform="translate(0.60 0) scale(.88 1)"><path d="M1.5 2H8.5Q8 7 3 9.5"/></g><g transform="translate(10.60 0) scale(.88 1)"><path d="M7.5 3Q5.5 6 3 7.5M5.5 5.5V9.5"/></g><g transform="translate(20.60 0) scale(.88 1)"><path d="M3.5 1.5V5Q3.5 8 1 9.5M6 1V8.5Q7.5 8 9.5 5.5"/></g><g transform="translate(30.60 0) scale(.88 1)"><path d="M4.5 1Q3.5 4 1.2 5.5M3.8 2.8H8.5Q8 7 3.5 9.5M3.5 5L7 7"/></g></g></svg></div>
<div style="left:852.7px;top:518.5px;width:172.3px;height:16px;background:#ececec;border:1px solid #c4c4c4;border-radius:2px"></div>
<div style="left:1030px;top:518.5px;width:17.5px;height:16px;background:#f0f0f0;border:1px solid #d4d4d4;border-radius:2px"></div>
<div class="t" style="left:1034px;top:517.9px;font-size:14px;line-height:16.8px;color:#aaa;font-family:"Liberation Serif",serif">ε</div>
<svg style="left:788.7px;top:553px;" width="8" height="6" viewBox="0 0 8 6"><path d="M0 0h8L4 5.5z" fill="#222"/></svg>
<div class="t" style="left:803.4px;top:549.3px;font-size:9.5px;line-height:11.4px;color:#222;;font-weight:bold"><svg class="g" width="16.00" height="7.22" viewBox="0 0 20 10" preserveAspectRatio="none" style="vertical-align:-0.48px;stroke-width:1.25px"><g fill="none" stroke="currentColor" stroke-linecap="round" stroke-linejoin="round"><g transform="translate(0.60 0) scale(.88 1)"><path d="M3 0.5Q2.5 5 0.5 9.5M2 3H4.5Q4 6 1.5 8M2 4.5L3.5 6M6.5 0.5V9.8M6.5 4.5L9.5 6.5"/></g><g transform="translate(10.60 0) scale(.88 1)"><path d="M1 0.5V2M4 0.5V2M0.5 1.3H5M1 3V9.8M1 3.5H4.5M1 5H4.5M1 6.7H4.5M1 8.3H4.5M3 3V8.3M5.8 1H9.5V6H5.8ZM5.8 2.7H9.5M5.8 4.3H9.5M6.8 6Q6.8 8.5 5.5 9.8M8.5 6V9Q8.5 9.8 9.8 9.5"/></g></g></svg></div>
<div style="left:787.7px;top:562.5px;width:268.7px;height:6.6px;border:1px solid #d6d6d6;border-bottom:none;background:#ebebeb"></div>
<div style="left:779.3px;top:569px;width:284px;height:1px;background:#d0d0d0"></div>
<div class="t" style="left:9px;top:574.5px;font-size:9.5px;line-height:11.4px;color:#222;">1 <svg class="g" width="61.50" height="7.22" viewBox="0 0 90 10" preserveAspectRatio="none" style="vertical-align:-0.48px;stroke-width:0.90px"><g fill="none" stroke="currentColor" stroke-linecap="round" stroke-linejoin="round"><g transform="translate(0.60 0) scale(.88 1)"><path d="M2.5 0.5L0.5 4M1.8 2.5V9.8M3.5 1H9.5V9.8M3.5 1V9.8M4.5 3.5H8.5M6.5 2V5.5M5 5.5H8V8H5Z"/></g><g transform="translate(10.60 0) scale(.88 1)"><path d="M5.5 2Q4 8 2.5 8.5Q1 8.5 1 6Q1 2 5.5 2Q9 2 9 5.5Q9 8.5 6 9.3"/></g><g transform="translate(20.60 0) scale(.88 1)"><path d="M1 1.5H9Q8.5 4 6 5.5M5.3 4V6Q5 8.5 2.5 9.5"/></g><g transform="translate(30.60 0) scale(.88 1)"><path d="M8.5 1Q6 5 1.5 7M5.5 4.5V9.8"/></g><g transform="translate(40.60 0) scale(.88 1)"><path d="M2 1H8M1 4H9M5 4V6Q5 8.5 2.5 9.5"/></g><g transform="translate(50.60 0) scale(.88 1)"><path d="M4.5 1Q3.5 5 1.5 8.5Q5 8.3 8.5 7.5M7 5.5L9 9"/></g><g transform="translate(60.60 0) scale(.88 1)"><path d="M1.5 2.5H7M4 1L2.5 5.5Q4.5 4.5 6 5.5M8.5 5Q4 6.5 4 8Q4 9.5 8 9.3"/></g><g transform="translate(70.60 0) scale(.88 1)"><path d="M1 0.5L1.8 1.5M0.5 3.5H2V7.5L0.5 9M2 8Q3.5 9.5 6 9.5H9.8M3.5 0.5H5.5V2H3.5V3H5.5M6.5 0.5H8.5V2H6.5V3H9M3 4.5H9M4.5 3V6.5M7.5 3V6.5M2.5 6.5H9.5M4.5 7L3.5 8M7.5 7L8.5 8"/></g><g transform="translate(80.60 0) scale(.88 1)"><path d="M0.5 3H3.5M2 0.5V9.3L1 9.8M0.5 6.5L3.5 5M4.5 1H9V4H4.5M4.5 1V6Q4.5 8.5 3.8 9.8M6.5 4Q7 7.5 9.8 9.5"/></g></g></svg></div>
<div class="t" style="left:657.3px;top:576.1px;font-size:7.5px;line-height:9px;color:#222;;transform:scaleX(0.960);transform-origin:0 0">x: 270.784 mm</div>
<div class="t" style="left:735.7px;top:576.1px;font-size:7.5px;line-height:9px;color:#222;;transform:scaleX(0.978);transform-origin:0 0">y: 181.66 mm</div>
<div class="t" style="left:815.2px;top:576.1px;font-size:7.5px;line-height:9px;color:#222;"><svg class="g" width="19.50" height="5.70" viewBox="0 0 30 10" preserveAspectRatio="none" style="vertical-align:-0.38px;stroke-width:0.75px"><g fill="none" stroke="currentColor" stroke-linecap="round" stroke-linejoin="round"><g transform="translate(0.60 0) scale(.88 1)"><path d="M0.8 6.5L3.5 3.5L9.5 9M8.5 1.5A.7 .7 0 1 0 8.51 1.5"/></g><g transform="translate(10.60 0) scale(.88 1)"><path d="M0.5 5.2H9.5"/></g><g transform="translate(20.60 0) scale(.88 1)"><path d="M1.5 1.5L3 2.5M1 4.5L2.5 5.5M2 9.3Q6.5 8 8.3 3M8 0.3L8.5 1.5M9.5 0.3L10 1.5"/></g></g></svg>: 1</div>
<div style="left:893.6px;top:572.2px;width:100.8px;height:15.9px;background:#fff;border:1px solid #b8b8b8;border-radius:2px"></div>
<div style="left:979.2px;top:573.2px;width:1px;height:13.9px;background:#d8d8d8"></div>
<div style="left:980.2px;top:573.2px;width:13.2px;height:13.9px;background:linear-gradient(#fafafa,#ececec)"></div>
<svg style="left:984px;top:578.5px;" width="6" height="4" viewBox="0 0 6 4"><path d="M0 0h6L3 3.5z" fill="#333"/></svg>
<div class="t" style="left:896.7px;top:576.1px;font-size:7.5px;line-height:9px;color:#222;;transform:scaleX(0.881);transform-origin:0 0">50.8%</div>
<div style="left:1000.6px;top:578px;width:72.3px;height:4px;background:#d4d4d4;border:1px solid #b8b8b8;border-radius:2px"></div>
<div style="left:1000.6px;top:578px;width:3px;height:4px;background:#3a78d0;border-radius:2px"></div>
<div style="left:1001.6px;top:575.3px;width:10.2px;height:9.1px;background:linear-gradient(#fff,#e6e6e6);border:1px solid #a0a0a0;border-radius:2px"></div></body></html>
